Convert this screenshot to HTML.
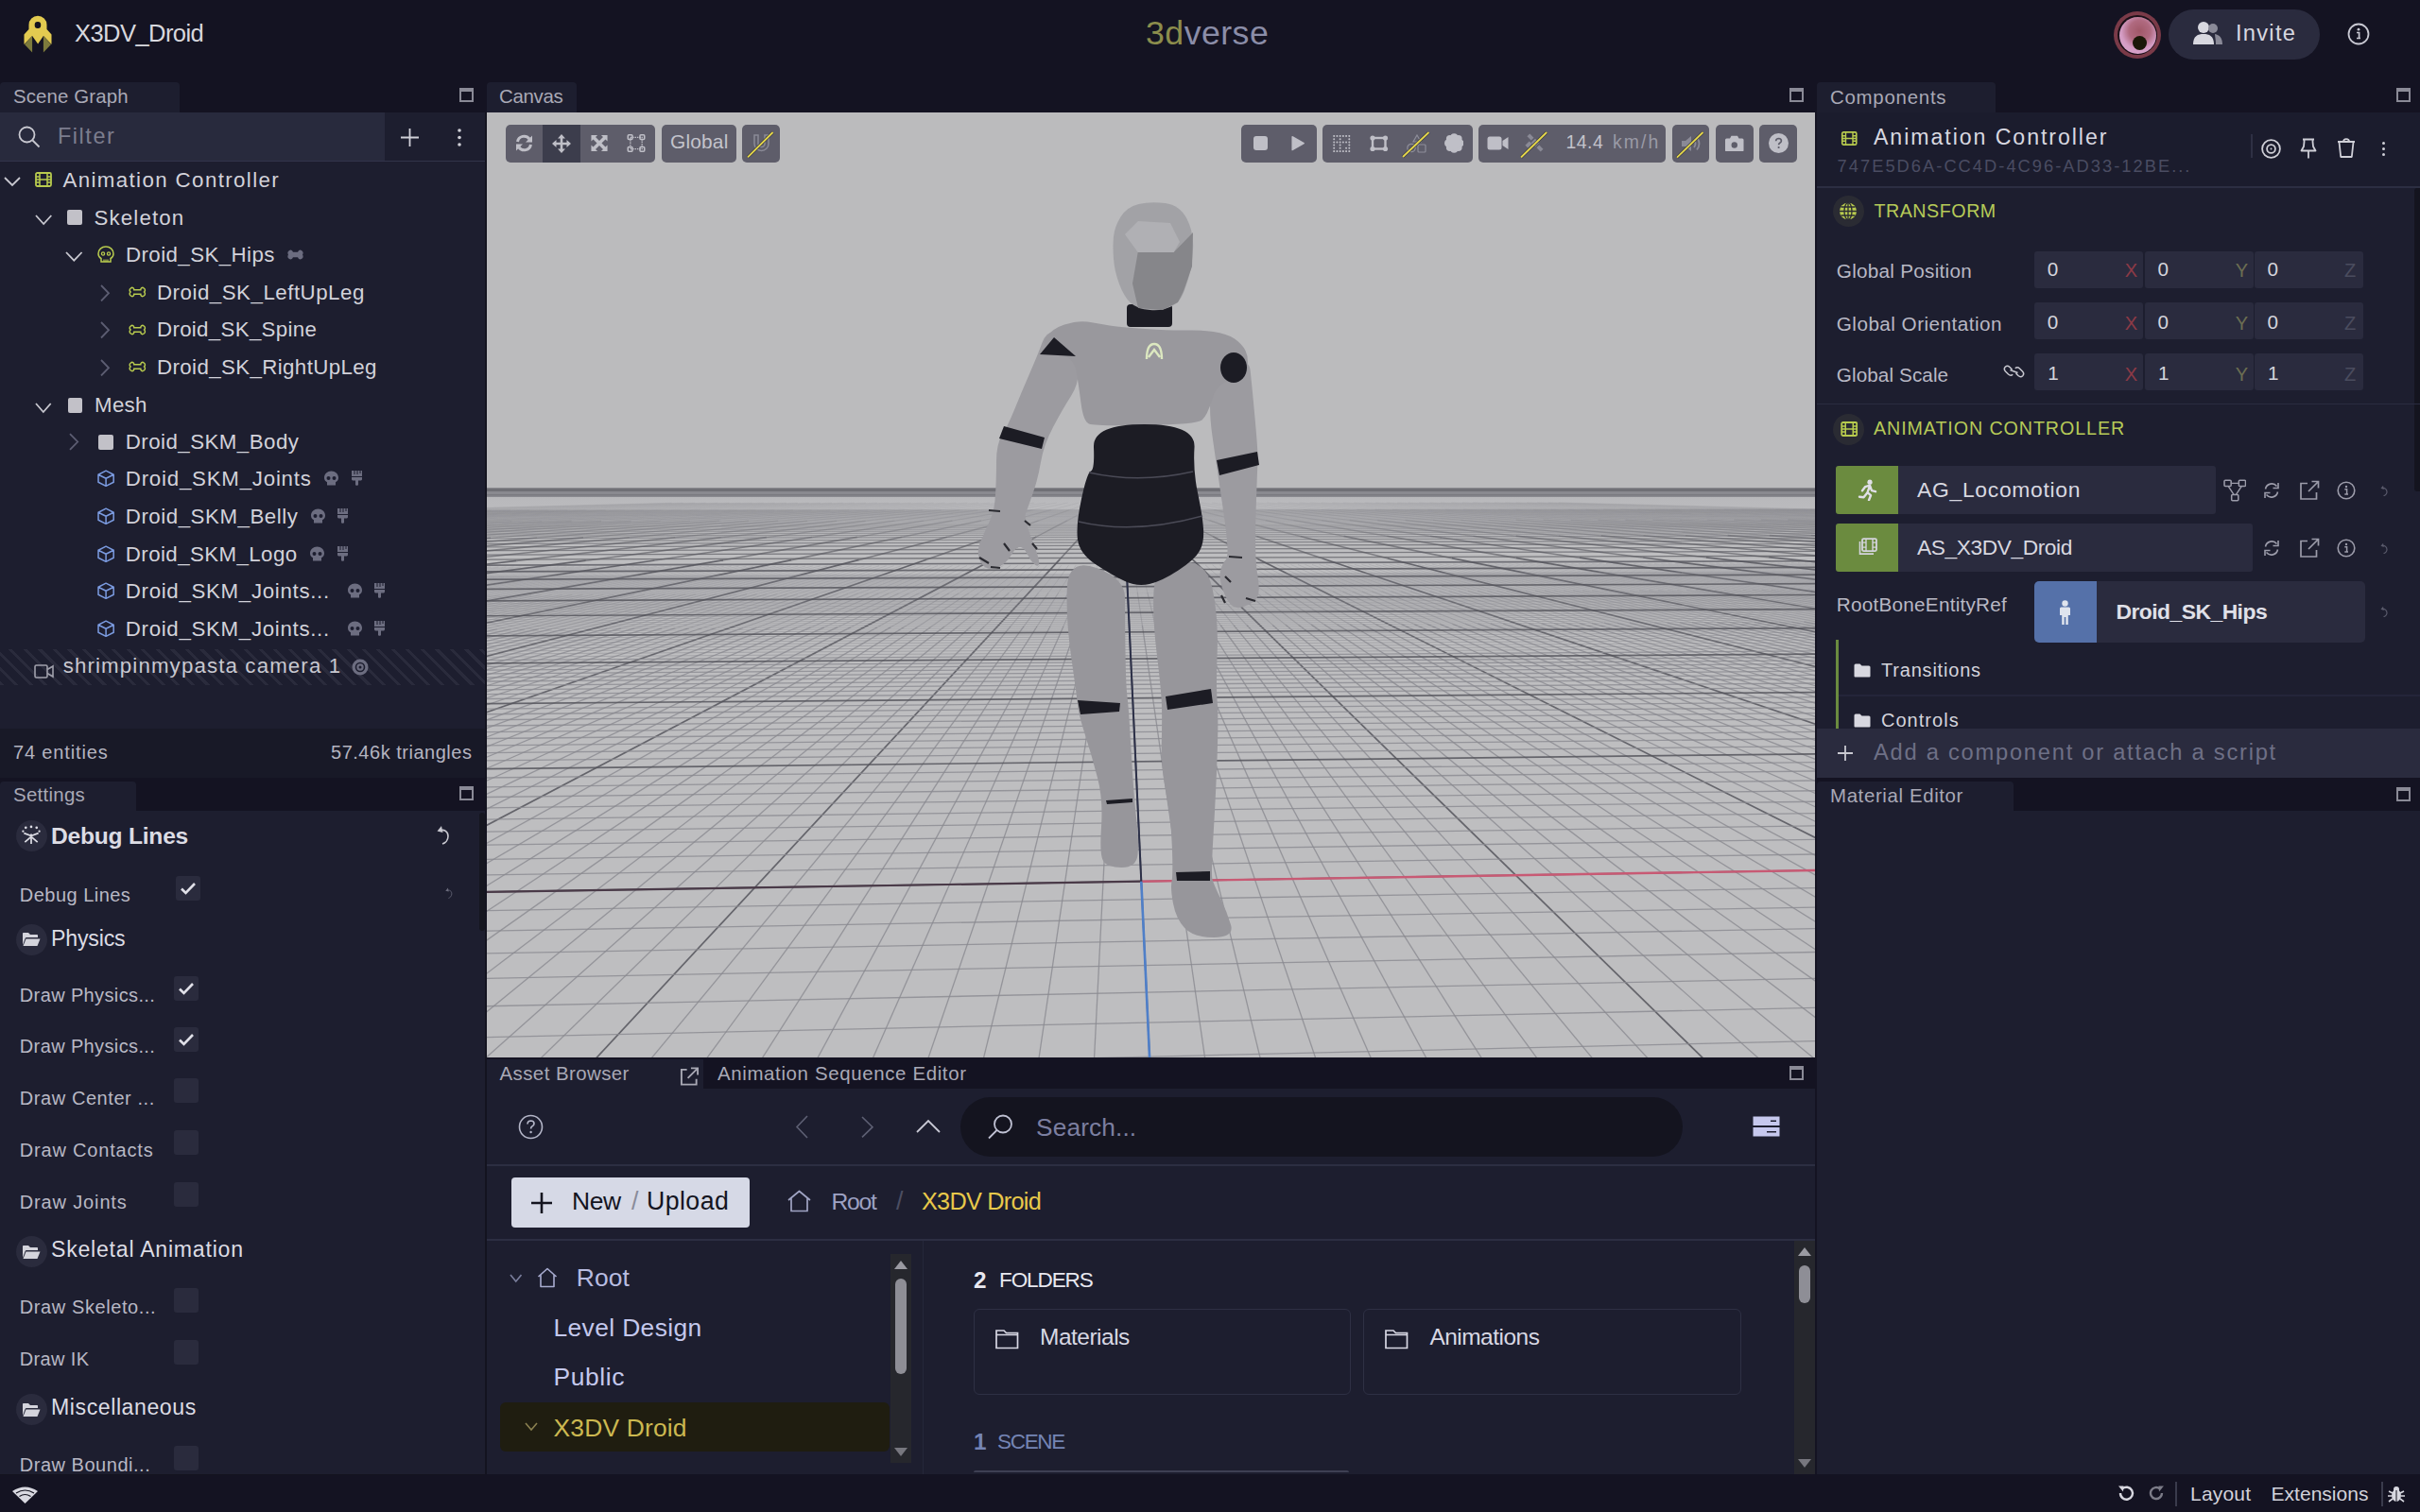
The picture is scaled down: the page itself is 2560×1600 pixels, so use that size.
<!DOCTYPE html><html><head><meta charset="utf-8"><style>
html,body{margin:0;padding:0;width:2560px;height:1600px;overflow:hidden;background:#141322}
body>div,body>svg{position:absolute}
.t{white-space:nowrap;line-height:1;font-family:"Liberation Sans",sans-serif}
</style></head><body>
<div style="left:0px;top:0px;width:2560px;height:1600px;background:#141322;"></div>
<div style="left:0px;top:119px;width:513px;height:652px;background:#1d1e2f;"></div>
<div style="left:0px;top:771px;width:513px;height:52px;background:#181927;"></div>
<div style="left:0px;top:858px;width:513px;height:702px;background:#1d1e2f;"></div>
<div style="left:0px;top:87px;width:190px;height:32px;background:#1d1e2f;border-radius:4px 4px 0 0"></div>
<div style="left:0px;top:827px;width:144px;height:31px;background:#1d1e2f;border-radius:4px 4px 0 0"></div>
<div style="left:515px;top:87px;width:95px;height:32px;background:#1d1e2f;border-radius:4px 4px 0 0"></div>
<div style="left:1922px;top:87px;width:189px;height:32px;background:#1d1e2f;border-radius:4px 4px 0 0"></div>
<div style="left:1922px;top:119px;width:638px;height:704px;background:#1d1e2f;"></div>
<div style="left:1922px;top:827px;width:208px;height:31px;background:#1d1e2f;border-radius:4px 4px 0 0"></div>
<div style="left:1922px;top:858px;width:638px;height:702px;background:#1d1e2f;"></div>
<div style="left:515px;top:1121px;width:229px;height:31px;background:#1d1e2f;"></div>
<div style="left:515px;top:1152px;width:1405px;height:408px;background:#1d1e2f;"></div>
<svg style="left:486px;top:93px;" width="15" height="15" viewBox="0 0 15 15"><rect x="1" y="1" width="13" height="13" fill="none" stroke="#8a8a96" stroke-width="2"/><rect x="1" y="1" width="13" height="3" fill="#8a8a96"/></svg>
<svg style="left:486px;top:832px;" width="15" height="15" viewBox="0 0 15 15"><rect x="1" y="1" width="13" height="13" fill="none" stroke="#8a8a96" stroke-width="2"/><rect x="1" y="1" width="13" height="3" fill="#8a8a96"/></svg>
<svg style="left:1893px;top:93px;" width="15" height="15" viewBox="0 0 15 15"><rect x="1" y="1" width="13" height="13" fill="none" stroke="#8a8a96" stroke-width="2"/><rect x="1" y="1" width="13" height="3" fill="#8a8a96"/></svg>
<svg style="left:2535px;top:93px;" width="15" height="15" viewBox="0 0 15 15"><rect x="1" y="1" width="13" height="13" fill="none" stroke="#8a8a96" stroke-width="2"/><rect x="1" y="1" width="13" height="3" fill="#8a8a96"/></svg>
<svg style="left:2535px;top:833px;" width="15" height="15" viewBox="0 0 15 15"><rect x="1" y="1" width="13" height="13" fill="none" stroke="#8a8a96" stroke-width="2"/><rect x="1" y="1" width="13" height="3" fill="#8a8a96"/></svg>
<svg style="left:1893px;top:1128px;" width="15" height="15" viewBox="0 0 15 15"><rect x="1" y="1" width="13" height="13" fill="none" stroke="#8a8a96" stroke-width="2"/><rect x="1" y="1" width="13" height="3" fill="#8a8a96"/></svg>
<div class="t" style="left:14.00px;top:91.64px;font-size:20.43px;letter-spacing:0.125px;color:#a9a9b6;">Scene Graph</div>
<div class="t" style="left:528.00px;top:91.64px;font-size:20.43px;letter-spacing:-0.300px;color:#a9a9b6;">Canvas</div>
<div class="t" style="left:1936.00px;top:92.64px;font-size:20.43px;letter-spacing:0.750px;color:#a9a9b6;">Components</div>
<div class="t" style="left:14.00px;top:830.64px;font-size:20.43px;letter-spacing:0.286px;color:#a9a9b6;">Settings</div>
<div class="t" style="left:1936.00px;top:831.64px;font-size:20.43px;letter-spacing:0.625px;color:#a9a9b6;">Material Editor</div>
<div class="t" style="left:528.50px;top:1126.04px;font-size:20.43px;letter-spacing:0.438px;color:#a9a9b6;">Asset Browser</div>
<div class="t" style="left:759.00px;top:1126.04px;font-size:20.43px;letter-spacing:0.646px;color:#a9a9b6;">Animation Sequence Editor</div>
<svg style="left:24px;top:15px;" width="32" height="42" viewBox="0 0 31 42"><path d="M6 16 V11.3 A9.5 9.5 0 0 1 25 11.3 V16 L30 21.5 V32 L21.5 23 L15.6 31.5 L9.6 23 L1 32 V21.5 Z" fill="#e3cb50"/><rect x="12.2" y="8" width="6.5" height="7" rx="3" fill="#13131f"/><path d="M1.5 32 L9.6 23 V40.5 Z M29.5 32 L21.4 23 V40.5 Z" fill="#7c7a3c"/></svg>
<div class="t" style="left:79.00px;top:23.28px;font-size:25.55px;letter-spacing:-0.583px;color:#d8d8de;">X3DV_Droid</div>
<div class="t" style="left:1212.00px;top:17.64px;font-size:35.71px;letter-spacing:0.458px;color:#8b8da8;"><span style="color:#8c8d4c">3d</span>verse</div>
<div style="left:2236px;top:12px;width:50px;height:50px;border-radius:50%;background:#7a3a48;"></div>
<div style="left:2240px;top:16px;width:42px;height:42px;border-radius:50%;background:#1a1018;"></div>
<div style="left:2241.5px;top:17.5px;width:39px;height:39px;border-radius:50%;background:radial-gradient(circle at 55% 38%,#a05868 0,#b06a80 35%,#d49cc4 60%,#dcaad0 100%);"></div>
<div style="left:2256px;top:38px;width:15px;height:15px;border-radius:50%;background:#1a1808;"></div>
<div style="left:2294px;top:10px;width:160px;height:53px;background:#2a2b3e;border-radius:27px"></div>
<svg style="left:2319px;top:22px;" width="33" height="26" viewBox="0 0 33 26"><circle cx="12" cy="7" r="6" fill="#d8d8e0"/><path d="M1 25 C1 16 6 14 12 14 C18 14 23 16 23 25 Z" fill="#d8d8e0"/><circle cx="22" cy="8" r="5" fill="#8a8a98"/><path d="M24 14 C29 15 32 18 32 25 L25 25 C25 20 24 16 24 14 Z" fill="#8a8a98"/></svg>
<div class="t" style="left:2365.00px;top:24.04px;font-size:23.71px;letter-spacing:1.250px;color:#d8d8e0;">Invite</div>
<svg style="left:2483px;top:24px;" width="24" height="24" viewBox="0 0 24 24"><circle cx="12" cy="12" r="10.5" fill="none" stroke="#c8c8d2" stroke-width="1.8"/><circle cx="12" cy="7.2" r="1.4" fill="#c8c8d2"/><path d="M10 10.5 H12.6 V16.5 H14 M10 16.5 H14" stroke="#c8c8d2" stroke-width="1.7" fill="none"/></svg>
<svg style="left:12px;top:1572px;" width="29" height="19" viewBox="0 0 29 19"><path d="M1 6 Q14.5 -3 28 6 L14.5 19 Z" fill="#d8d8e0"/><path d="M5 8 Q14.5 2 24 8 M8.5 11.5 Q14.5 7.5 20.5 11.5" stroke="#13131f" stroke-width="1.2" fill="none"/></svg>
<svg style="left:2239px;top:1571px;" width="20" height="18" viewBox="0 0 20 18"><path d="M4 9 A6.5 6.5 0 1 0 6 4.5" stroke="#d8d8e0" stroke-width="2.4" fill="none"/><path d="M2 1.5 L7.5 1.5 L7 7.5 Z" fill="#d8d8e0"/></svg>
<svg style="left:2273px;top:1571px;" width="18" height="18" viewBox="0 0 18 18"><path d="M14 9 A6 6 0 1 1 12 4.5" stroke="#7c7c88" stroke-width="2.4" fill="none"/><path d="M16 1.5 L10.5 1.5 L11 7.5 Z" fill="#7c7c88"/></svg>
<div style="left:2301px;top:1568px;width:2px;height:26px;background:#3a3b4c;"></div>
<div class="t" style="left:2317.00px;top:1569.65px;font-size:21.00px;letter-spacing:0.200px;color:#d2d2da;">Layout</div>
<div class="t" style="left:2402.50px;top:1569.65px;font-size:21.00px;letter-spacing:0.028px;color:#d2d2da;">Extensions</div>
<div style="left:2519px;top:1568px;width:2px;height:26px;background:#3a3b4c;"></div>
<svg style="left:2526px;top:1572px;" width="18" height="18" viewBox="0 0 18 18"><ellipse cx="9" cy="10.5" rx="5" ry="6.5" fill="#d8d8e0"/><circle cx="9" cy="4" r="3" fill="#d8d8e0"/><path d="M1 6 L5 8 M17 6 L13 8 M0 11 H4 M18 11 H14 M1 17 L5 14 M17 17 L13 14" stroke="#d8d8e0" stroke-width="1.6"/><path d="M9 5 V17" stroke="#13131f" stroke-width="1"/></svg>
<div style="left:0px;top:119px;width:407px;height:52px;background:#282a3d;"></div>
<div style="left:0px;top:170px;width:513px;height:1px;background:#32344a;"></div>
<svg style="left:19px;top:133px;" width="24" height="24" viewBox="0 0 24 24"><circle cx="9.5" cy="9.5" r="8" fill="none" stroke="#c8c8d0" stroke-width="1.8"/><path d="M15.5 15.5 L22.5 22.5" stroke="#c8c8d0" stroke-width="1.8"/></svg>
<div class="t" style="left:61.00px;top:133.49px;font-size:23.43px;letter-spacing:1.550px;color:#7c7d8e;">Filter</div>
<svg style="left:423px;top:135px;" width="21" height="21" viewBox="0 0 21 21"><path d="M10.5 1 V20 M1 10.5 H20" stroke="#d0d0d8" stroke-width="1.8"/></svg>
<svg style="left:483px;top:135px;" width="6" height="21" viewBox="0 0 6 21"><circle cx="3" cy="3" r="1.8" fill="#d0d0d8"/><circle cx="3" cy="10.5" r="1.8" fill="#d0d0d8"/><circle cx="3" cy="18" r="1.8" fill="#d0d0d8"/></svg>
<svg style="left:4px;top:186px;" width="18" height="12" viewBox="0 0 18 12"><path d="M1 2 L9.0 10 L17 2" stroke="#c8c8d0" stroke-width="1.8" fill="none"/></svg>
<svg style="left:37px;top:182px;" width="18" height="16" viewBox="0 0 18 16"><rect x="1" y="1" width="16" height="14" rx="1.5" fill="none" stroke="#b8cb4e" stroke-width="1.8"/><path d="M5 1 V15 M13 1 V15 M1 5 H5 M1 8 H5 M1 11 H5 M13 5 H17 M13 8 H17 M13 11 H17 M5 8 H13" stroke="#b8cb4e" stroke-width="1.5" fill="none"/></svg>
<div class="t" style="left:66.40px;top:180.06px;font-size:22.29px;letter-spacing:1.395px;color:#d2d2da;">Animation Controller</div>
<svg style="left:36.5px;top:226px;" width="18.299999999999997" height="13" viewBox="0 0 18.299999999999997 13"><path d="M1 2 L9.149999999999999 11 L17.299999999999997 2" stroke="#c8c8d0" stroke-width="1.8" fill="none"/></svg>
<div style="left:71.4px;top:222.3px;width:15.599999999999994px;height:15.5px;background:#c2c1c8;border-radius:2px"></div>
<div class="t" style="left:99.50px;top:219.66px;font-size:22.29px;letter-spacing:1.143px;color:#d2d2da;">Skeleton</div>
<svg style="left:69.4px;top:265px;" width="18.599999999999994" height="12.699999999999989" viewBox="0 0 18.599999999999994 12.699999999999989"><path d="M1 2 L9.299999999999997 10.699999999999989 L17.599999999999994 2" stroke="#c8c8d0" stroke-width="1.8" fill="none"/></svg>
<svg style="left:103px;top:260px;" width="18" height="18" viewBox="0 0 18 18"><path d="M9 1 C4.5 1 1 4.2 1 8.5 C1 11 2.3 12.6 4 13.5 V17 H14 V13.5 C15.7 12.6 17 11 17 8.5 C17 4.2 13.5 1 9 1 Z" fill="none" stroke="#b8cb4e" stroke-width="1.5"/><circle cx="6" cy="8.5" r="1.6" fill="none" stroke="#b8cb4e" stroke-width="1.3"/><circle cx="12" cy="8.5" r="1.6" fill="none" stroke="#b8cb4e" stroke-width="1.3"/><path d="M7 14.5 V17 M9 14.5 V17 M11 14.5 V17" stroke="#b8cb4e" stroke-width="1.2"/></svg>
<div class="t" style="left:133.00px;top:259.06px;font-size:22.29px;letter-spacing:0.417px;color:#d2d2da;">Droid_SK_Hips</div>
<svg style="left:303px;top:264px;" width="19" height="11" viewBox="1 0 20 12"><path d="M4 2 C6 0.5 7.5 2 7.5 3.8 H14.5 C14.5 2 16 0.5 18 2 C19.8 3.2 19.2 5.2 18.2 6 C19.2 6.8 19.8 8.8 18 10 C16 11.5 14.5 10 14.5 8.2 H7.5 C7.5 10 6 11.5 4 10 C2.2 8.8 2.8 6.8 3.8 6 C2.8 5.2 2.2 3.2 4 2 Z" fill="#6c6d80" stroke="#6c6d80" stroke-width="1.5"/></svg>
<svg style="left:105px;top:300.5px;" width="12" height="18.5" viewBox="0 0 12 18.5"><path d="M2 1 L10 9.25 L2 17.5" stroke="#5c5d72" stroke-width="1.8" fill="none"/></svg>
<svg style="left:135px;top:303.0px;" width="20.599999999999994" height="12.0" viewBox="1 0 20 12"><path d="M4 2 C6 0.5 7.5 2 7.5 3.8 H14.5 C14.5 2 16 0.5 18 2 C19.8 3.2 19.2 5.2 18.2 6 C19.2 6.8 19.8 8.8 18 10 C16 11.5 14.5 10 14.5 8.2 H7.5 C7.5 10 6 11.5 4 10 C2.2 8.8 2.8 6.8 3.8 6 C2.8 5.2 2.2 3.2 4 2 Z" fill="none" stroke="#b8cb4e" stroke-width="1.5"/></svg>
<div class="t" style="left:166.00px;top:298.56px;font-size:22.29px;letter-spacing:0.515px;color:#d2d2da;">Droid_SK_LeftUpLeg</div>
<svg style="left:105px;top:340.1px;" width="12" height="18.5" viewBox="0 0 12 18.5"><path d="M2 1 L10 9.25 L2 17.5" stroke="#5c5d72" stroke-width="1.8" fill="none"/></svg>
<svg style="left:135px;top:342.6px;" width="20.599999999999994" height="12.0" viewBox="1 0 20 12"><path d="M4 2 C6 0.5 7.5 2 7.5 3.8 H14.5 C14.5 2 16 0.5 18 2 C19.8 3.2 19.2 5.2 18.2 6 C19.2 6.8 19.8 8.8 18 10 C16 11.5 14.5 10 14.5 8.2 H7.5 C7.5 10 6 11.5 4 10 C2.2 8.8 2.8 6.8 3.8 6 C2.8 5.2 2.2 3.2 4 2 Z" fill="none" stroke="#b8cb4e" stroke-width="1.5"/></svg>
<div class="t" style="left:166.00px;top:338.16px;font-size:22.29px;letter-spacing:0.315px;color:#d2d2da;">Droid_SK_Spine</div>
<svg style="left:105px;top:379.7px;" width="12" height="18.5" viewBox="0 0 12 18.5"><path d="M2 1 L10 9.25 L2 17.5" stroke="#5c5d72" stroke-width="1.8" fill="none"/></svg>
<svg style="left:135px;top:382.2px;" width="20.599999999999994" height="12.0" viewBox="1 0 20 12"><path d="M4 2 C6 0.5 7.5 2 7.5 3.8 H14.5 C14.5 2 16 0.5 18 2 C19.8 3.2 19.2 5.2 18.2 6 C19.2 6.8 19.8 8.8 18 10 C16 11.5 14.5 10 14.5 8.2 H7.5 C7.5 10 6 11.5 4 10 C2.2 8.8 2.8 6.8 3.8 6 C2.8 5.2 2.2 3.2 4 2 Z" fill="none" stroke="#b8cb4e" stroke-width="1.5"/></svg>
<div class="t" style="left:166.00px;top:377.76px;font-size:22.29px;letter-spacing:0.389px;color:#d2d2da;">Droid_SK_RightUpLeg</div>
<svg style="left:37px;top:425px;" width="17.700000000000003" height="13" viewBox="0 0 17.700000000000003 13"><path d="M1 2 L8.850000000000001 11 L16.700000000000003 2" stroke="#c8c8d0" stroke-width="1.8" fill="none"/></svg>
<div style="left:71.7px;top:421px;width:15.299999999999997px;height:15.5px;background:#c2c1c8;border-radius:2px"></div>
<div class="t" style="left:100.00px;top:417.76px;font-size:22.29px;letter-spacing:0.333px;color:#d2d2da;">Mesh</div>
<svg style="left:71.8px;top:458px;" width="12.200000000000003" height="19" viewBox="0 0 12.200000000000003 19"><path d="M2 1 L10.200000000000003 9.5 L2 18" stroke="#5c5d72" stroke-width="1.8" fill="none"/></svg>
<div style="left:104px;top:460px;width:16px;height:15.5px;background:#c2c1c8;border-radius:2px"></div>
<div class="t" style="left:132.80px;top:456.56px;font-size:22.29px;letter-spacing:0.462px;color:#d2d2da;">Droid_SKM_Body</div>
<svg style="left:102.8px;top:497.29999999999995px;" width="18.200000000000003" height="18.5" viewBox="0 0 18 18"><path d="M9 1 L17 5 V13 L9 17 L1 13 V5 Z M1 5 L9 9 L17 5 M9 9 V17" fill="none" stroke="#7b9be0" stroke-width="1.5" stroke-linejoin="round"/></svg>
<div class="t" style="left:132.80px;top:496.36px;font-size:22.29px;letter-spacing:0.770px;color:#d2d2da;">Droid_SKM_Joints</div>
<svg style="left:342px;top:498.29999999999995px;" width="17" height="16.0" viewBox="0 0 16 16"><path d="M8 0.5 C3.8 0.5 0.5 3.5 0.5 7.5 C0.5 10 1.8 11.5 3.5 12.3 V15.5 H12.5 V12.3 C14.2 11.5 15.5 10 15.5 7.5 C15.5 3.5 12.2 0.5 8 0.5 Z" fill="#6c6d80"/><circle cx="5" cy="8" r="2" fill="#1d1e2f"/><circle cx="11" cy="8" r="2" fill="#1d1e2f"/></svg>
<svg style="left:371px;top:498.29999999999995px;" width="13" height="16.0" viewBox="0 0 13 16"><path d="M1 0 H12 V9 C12 10 11 10.5 10 10.5 H8 V15 C8 16 5 16 5 15 V10.5 H3 C2 10.5 1 10 1 9 Z" fill="#6c6d80"/><path d="M4 0 V4 M7 0 V4 M10 0 V3" stroke="#1d1e2f" stroke-width="1"/><path d="M1 6.5 H12" stroke="#1d1e2f" stroke-width="1"/></svg>
<svg style="left:102.8px;top:536.9px;" width="18.200000000000003" height="18.5" viewBox="0 0 18 18"><path d="M9 1 L17 5 V13 L9 17 L1 13 V5 Z M1 5 L9 9 L17 5 M9 9 V17" fill="none" stroke="#7b9be0" stroke-width="1.5" stroke-linejoin="round"/></svg>
<div class="t" style="left:132.80px;top:535.96px;font-size:22.29px;letter-spacing:0.529px;color:#d2d2da;">Droid_SKM_Belly</div>
<svg style="left:328px;top:537.9px;" width="17" height="16.0" viewBox="0 0 16 16"><path d="M8 0.5 C3.8 0.5 0.5 3.5 0.5 7.5 C0.5 10 1.8 11.5 3.5 12.3 V15.5 H12.5 V12.3 C14.2 11.5 15.5 10 15.5 7.5 C15.5 3.5 12.2 0.5 8 0.5 Z" fill="#6c6d80"/><circle cx="5" cy="8" r="2" fill="#1d1e2f"/><circle cx="11" cy="8" r="2" fill="#1d1e2f"/></svg>
<svg style="left:356px;top:537.9px;" width="13" height="16.0" viewBox="0 0 13 16"><path d="M1 0 H12 V9 C12 10 11 10.5 10 10.5 H8 V15 C8 16 5 16 5 15 V10.5 H3 C2 10.5 1 10 1 9 Z" fill="#6c6d80"/><path d="M4 0 V4 M7 0 V4 M10 0 V3" stroke="#1d1e2f" stroke-width="1"/><path d="M1 6.5 H12" stroke="#1d1e2f" stroke-width="1"/></svg>
<svg style="left:102.8px;top:576.5px;" width="18.200000000000003" height="18.5" viewBox="0 0 18 18"><path d="M9 1 L17 5 V13 L9 17 L1 13 V5 Z M1 5 L9 9 L17 5 M9 9 V17" fill="none" stroke="#7b9be0" stroke-width="1.5" stroke-linejoin="round"/></svg>
<div class="t" style="left:132.80px;top:575.56px;font-size:22.29px;letter-spacing:0.419px;color:#d2d2da;">Droid_SKM_Logo</div>
<svg style="left:327px;top:577.5px;" width="17" height="16.0" viewBox="0 0 16 16"><path d="M8 0.5 C3.8 0.5 0.5 3.5 0.5 7.5 C0.5 10 1.8 11.5 3.5 12.3 V15.5 H12.5 V12.3 C14.2 11.5 15.5 10 15.5 7.5 C15.5 3.5 12.2 0.5 8 0.5 Z" fill="#6c6d80"/><circle cx="5" cy="8" r="2" fill="#1d1e2f"/><circle cx="11" cy="8" r="2" fill="#1d1e2f"/></svg>
<svg style="left:356px;top:577.5px;" width="13" height="16.0" viewBox="0 0 13 16"><path d="M1 0 H12 V9 C12 10 11 10.5 10 10.5 H8 V15 C8 16 5 16 5 15 V10.5 H3 C2 10.5 1 10 1 9 Z" fill="#6c6d80"/><path d="M4 0 V4 M7 0 V4 M10 0 V3" stroke="#1d1e2f" stroke-width="1"/><path d="M1 6.5 H12" stroke="#1d1e2f" stroke-width="1"/></svg>
<svg style="left:102.8px;top:616.0999999999999px;" width="18.200000000000003" height="18.5" viewBox="0 0 18 18"><path d="M9 1 L17 5 V13 L9 17 L1 13 V5 Z M1 5 L9 9 L17 5 M9 9 V17" fill="none" stroke="#7b9be0" stroke-width="1.5" stroke-linejoin="round"/></svg>
<div class="t" style="left:132.80px;top:615.16px;font-size:22.29px;letter-spacing:0.681px;color:#d2d2da;">Droid_SKM_Joints...</div>
<svg style="left:366.7px;top:617.0999999999999px;" width="17.0" height="16.0" viewBox="0 0 16 16"><path d="M8 0.5 C3.8 0.5 0.5 3.5 0.5 7.5 C0.5 10 1.8 11.5 3.5 12.3 V15.5 H12.5 V12.3 C14.2 11.5 15.5 10 15.5 7.5 C15.5 3.5 12.2 0.5 8 0.5 Z" fill="#6c6d80"/><circle cx="5" cy="8" r="2" fill="#1d1e2f"/><circle cx="11" cy="8" r="2" fill="#1d1e2f"/></svg>
<svg style="left:395px;top:617.0999999999999px;" width="13" height="16.0" viewBox="0 0 13 16"><path d="M1 0 H12 V9 C12 10 11 10.5 10 10.5 H8 V15 C8 16 5 16 5 15 V10.5 H3 C2 10.5 1 10 1 9 Z" fill="#6c6d80"/><path d="M4 0 V4 M7 0 V4 M10 0 V3" stroke="#1d1e2f" stroke-width="1"/><path d="M1 6.5 H12" stroke="#1d1e2f" stroke-width="1"/></svg>
<svg style="left:102.8px;top:655.6999999999999px;" width="18.200000000000003" height="18.5" viewBox="0 0 18 18"><path d="M9 1 L17 5 V13 L9 17 L1 13 V5 Z M1 5 L9 9 L17 5 M9 9 V17" fill="none" stroke="#7b9be0" stroke-width="1.5" stroke-linejoin="round"/></svg>
<div class="t" style="left:132.80px;top:654.76px;font-size:22.29px;letter-spacing:0.681px;color:#d2d2da;">Droid_SKM_Joints...</div>
<svg style="left:366.7px;top:656.6999999999999px;" width="17.0" height="16.0" viewBox="0 0 16 16"><path d="M8 0.5 C3.8 0.5 0.5 3.5 0.5 7.5 C0.5 10 1.8 11.5 3.5 12.3 V15.5 H12.5 V12.3 C14.2 11.5 15.5 10 15.5 7.5 C15.5 3.5 12.2 0.5 8 0.5 Z" fill="#6c6d80"/><circle cx="5" cy="8" r="2" fill="#1d1e2f"/><circle cx="11" cy="8" r="2" fill="#1d1e2f"/></svg>
<svg style="left:395px;top:656.6999999999999px;" width="13" height="16.0" viewBox="0 0 13 16"><path d="M1 0 H12 V9 C12 10 11 10.5 10 10.5 H8 V15 C8 16 5 16 5 15 V10.5 H3 C2 10.5 1 10 1 9 Z" fill="#6c6d80"/><path d="M4 0 V4 M7 0 V4 M10 0 V3" stroke="#1d1e2f" stroke-width="1"/><path d="M1 6.5 H12" stroke="#1d1e2f" stroke-width="1"/></svg>
<div style="left:0px;top:687px;width:513px;height:38px;background:repeating-linear-gradient(45deg,#2a2b3c 0 3px,#1d1e2f 3px 11px);"></div>
<svg style="left:36px;top:703px;" width="21" height="15" viewBox="0 0 21 15"><rect x="1" y="1" width="13" height="13" rx="1.5" fill="none" stroke="#a0a0ac" stroke-width="1.6"/><path d="M14 5.5 L20 2 V13 L14 9.5" fill="none" stroke="#a0a0ac" stroke-width="1.6"/></svg>
<div class="t" style="left:66.70px;top:694.06px;font-size:22.29px;letter-spacing:1.130px;color:#c8c8d0;">shrimpinmypasta camera 1</div>
<svg style="left:372px;top:697px;" width="18" height="18" viewBox="0 0 18 18"><circle cx="9" cy="9" r="8.5" fill="#6c6d80"/><circle cx="9" cy="9" r="4.5" fill="none" stroke="#1d1e2f" stroke-width="1.6"/><circle cx="9" cy="9" r="1.5" fill="#1d1e2f"/></svg>
<div class="t" style="left:13.90px;top:785.80px;font-size:20.00px;letter-spacing:0.875px;color:#b4b4c0;">74 entities</div>
<div class="t" style="left:350.00px;top:785.80px;font-size:20.00px;letter-spacing:0.517px;color:#b4b4c0;">57.46k triangles</div>
<div style="left:513px;top:119px;width:2px;height:1441px;background:#13131f;"></div>
<div style="left:16.5px;top:867.5px;width:33px;height:33px;border-radius:50%;background:#2a2b3d;"></div>
<svg style="left:22px;top:873px;" width="22" height="21" viewBox="0 0 22 22"><path d="M11 10 V21 M11 13 L4 19 M11 13 L18 19 M11 12 L3 9 M11 12 L19 9" stroke="#dcdce4" stroke-width="1.8" fill="none"/><circle cx="5" cy="3" r="1.4" fill="#dcdce4"/><circle cx="11" cy="2" r="1.4" fill="#dcdce4"/><circle cx="17" cy="3" r="1.4" fill="#dcdce4"/><circle cx="2" cy="7" r="1.2" fill="#dcdce4"/><circle cx="20" cy="7" r="1.2" fill="#dcdce4"/></svg>
<div class="t" style="left:54.00px;top:872.67px;font-size:24.62px;letter-spacing:-0.240px;color:#dcdce4;font-weight:700;">Debug Lines</div>
<svg style="left:462px;top:873px;" width="14" height="21" viewBox="0 0 14 21"><path d="M3 6 C8 4 12 7 12 12 C12 16 9 19 6 20" stroke="#c8c8d0" stroke-width="1.6" fill="none"/><path d="M0.5 6.5 L5 1 L6.5 8 Z" fill="#c8c8d0"/></svg>
<div class="t" style="left:20.80px;top:937.00px;font-size:20.00px;letter-spacing:0.475px;color:#b8b8c4;">Debug Lines</div>
<div style="left:186px;top:927px;width:26px;height:26px;background:#2a2b3d;border-radius:3px"></div>
<svg style="left:186px;top:927px;" width="26" height="26" viewBox="0 0 26 26"><path d="M6 13.5 L10.5 18 L20 8" stroke="#e0e0e8" stroke-width="2.6" fill="none"/></svg>
<svg style="left:471px;top:939px;" width="8" height="12" viewBox="0 0 14 21"><path d="M3 6 C8 4 12 7 12 12 C12 16 9 19 6 20" stroke="#6a6b7c" stroke-width="1.4" fill="none"/><path d="M0.5 6.5 L5 1 L6.5 8 Z" fill="#6a6b7c"/></svg>
<div style="left:16.5px;top:977.5px;width:33px;height:33px;border-radius:50%;background:#2a2b3d;"></div>
<svg style="left:23px;top:986.0px;" width="20" height="16.0" viewBox="0 0 20 16"><path d="M1 2 C1 1.3 1.5 1 2 1 H7 L9 3 H16 C16.6 3 17 3.4 17 4 V6 H5 C4.3 6 3.8 6.3 3.6 6.9 L1 14 Z" fill="#d4d4dc"/><path d="M4.5 7.5 H19.5 L16.5 15 H1.5 Z" fill="#d4d4dc"/></svg>
<div class="t" style="left:54.00px;top:982.33px;font-size:23.14px;letter-spacing:-0.167px;color:#dcdce4;">Physics</div>
<div class="t" style="left:20.80px;top:1043.00px;font-size:20.00px;letter-spacing:0.375px;color:#b8b8c4;">Draw Physics...</div>
<div style="left:183.5px;top:1033px;width:26.0px;height:26px;background:#2a2b3d;border-radius:3px"></div>
<svg style="left:183.5px;top:1033px;" width="26.0" height="26" viewBox="0 0 26.0 26"><path d="M6 13.5 L10.5 18 L20 8" stroke="#e0e0e8" stroke-width="2.6" fill="none"/></svg>
<div class="t" style="left:20.80px;top:1097.40px;font-size:20.00px;letter-spacing:0.375px;color:#b8b8c4;">Draw Physics...</div>
<div style="left:183.5px;top:1087px;width:26.0px;height:26px;background:#2a2b3d;border-radius:3px"></div>
<svg style="left:183.5px;top:1087px;" width="26.0" height="26" viewBox="0 0 26.0 26"><path d="M6 13.5 L10.5 18 L20 8" stroke="#e0e0e8" stroke-width="2.6" fill="none"/></svg>
<div class="t" style="left:20.80px;top:1152.00px;font-size:20.00px;letter-spacing:0.571px;color:#b8b8c4;">Draw Center ...</div>
<div style="left:183.5px;top:1141px;width:26.0px;height:26px;background:#2a2b3d;border-radius:3px"></div>
<div class="t" style="left:20.80px;top:1206.80px;font-size:20.00px;letter-spacing:0.812px;color:#b8b8c4;">Draw Contacts</div>
<div style="left:183.5px;top:1196px;width:26.0px;height:26px;background:#2a2b3d;border-radius:3px"></div>
<div class="t" style="left:20.80px;top:1261.60px;font-size:20.00px;letter-spacing:0.850px;color:#b8b8c4;">Draw Joints</div>
<div style="left:183.5px;top:1250.5px;width:26.0px;height:26.0px;background:#2a2b3d;border-radius:3px"></div>
<div style="left:16.5px;top:1308px;width:33px;height:33px;border-radius:50%;background:#2a2b3d;"></div>
<svg style="left:23px;top:1316.5px;" width="20" height="16.0" viewBox="0 0 20 16"><path d="M1 2 C1 1.3 1.5 1 2 1 H7 L9 3 H16 C16.6 3 17 3.4 17 4 V6 H5 C4.3 6 3.8 6.3 3.6 6.9 L1 14 Z" fill="#d4d4dc"/><path d="M4.5 7.5 H19.5 L16.5 15 H1.5 Z" fill="#d4d4dc"/></svg>
<div class="t" style="left:54.00px;top:1311.33px;font-size:23.14px;letter-spacing:0.750px;color:#dcdce4;">Skeletal Animation</div>
<div class="t" style="left:20.80px;top:1373.00px;font-size:20.00px;letter-spacing:0.589px;color:#b8b8c4;">Draw Skeleto...</div>
<div style="left:183.5px;top:1363px;width:26.0px;height:26px;background:#2a2b3d;border-radius:3px"></div>
<div class="t" style="left:20.80px;top:1428.00px;font-size:20.00px;letter-spacing:0.358px;color:#b8b8c4;">Draw IK</div>
<div style="left:183.5px;top:1417.5px;width:26.0px;height:26.0px;background:#2a2b3d;border-radius:3px"></div>
<div style="left:16.5px;top:1475px;width:33px;height:33px;border-radius:50%;background:#2a2b3d;"></div>
<svg style="left:23px;top:1483.5px;" width="20" height="16.0" viewBox="0 0 20 16"><path d="M1 2 C1 1.3 1.5 1 2 1 H7 L9 3 H16 C16.6 3 17 3.4 17 4 V6 H5 C4.3 6 3.8 6.3 3.6 6.9 L1 14 Z" fill="#d4d4dc"/><path d="M4.5 7.5 H19.5 L16.5 15 H1.5 Z" fill="#d4d4dc"/></svg>
<div class="t" style="left:54.00px;top:1478.33px;font-size:23.14px;letter-spacing:0.562px;color:#dcdce4;">Miscellaneous</div>
<div class="t" style="left:20.80px;top:1540.00px;font-size:20.00px;letter-spacing:0.519px;color:#b8b8c4;">Draw Boundi...</div>
<div style="left:183.5px;top:1530px;width:26.0px;height:26px;background:#2a2b3d;border-radius:3px"></div>
<div style="left:0px;top:1560px;width:513px;height:1px;background:#13131f;"></div>
<div style="left:507px;top:860px;width:6px;height:125px;background:#15161f;border-radius:3px"></div>
<svg style="left:515px;top:119px" width="1405" height="1000" viewBox="0 0 1405 1000"><rect x="0" y="0" width="1405" height="1000" fill="#bebec0"/><rect x="0" y="0" width="1405" height="401.0" fill="#bbbbbd"/><line x1="-116.8" y1="421.3" x2="195.6" y2="413.2" stroke="#55555c" stroke-width="1.0" stroke-opacity="0.16092943201376936"/><line x1="-96.5" y1="421.2" x2="207.8" y2="413.2" stroke="#55555c" stroke-width="1.0" stroke-opacity="0.16092943201376936"/><line x1="-76.1" y1="421.2" x2="219.9" y2="413.2" stroke="#55555c" stroke-width="1.0" stroke-opacity="0.16092943201376936"/><line x1="-55.8" y1="421.2" x2="232.1" y2="413.2" stroke="#55555c" stroke-width="1.0" stroke-opacity="0.16092943201376936"/><line x1="-35.6" y1="421.2" x2="244.2" y2="413.2" stroke="#55555c" stroke-width="1.0" stroke-opacity="0.16092943201376936"/><line x1="-15.3" y1="421.2" x2="256.3" y2="413.2" stroke="#55555c" stroke-width="1.0" stroke-opacity="0.16092943201376936"/><line x1="-391.5" y1="433.1" x2="4.9" y2="421.2" stroke="#55555c" stroke-width="1.2" stroke-opacity="0.25900277008310246"/><line x1="4.9" y1="421.2" x2="268.4" y2="413.2" stroke="#55555c" stroke-width="1.0" stroke-opacity="0.16092943201376936"/><line x1="-358.9" y1="433.1" x2="25.1" y2="421.1" stroke="#55555c" stroke-width="1.2" stroke-opacity="0.25900277008310246"/><line x1="25.1" y1="421.1" x2="280.5" y2="413.2" stroke="#55555c" stroke-width="1.0" stroke-opacity="0.16092943201376936"/><line x1="-326.3" y1="433.0" x2="45.2" y2="421.1" stroke="#55555c" stroke-width="1.2" stroke-opacity="0.25900277008310246"/><line x1="45.2" y1="421.1" x2="292.6" y2="413.2" stroke="#55555c" stroke-width="1.0" stroke-opacity="0.16092943201376936"/><line x1="-293.9" y1="433.0" x2="65.3" y2="421.1" stroke="#55555c" stroke-width="1.2" stroke-opacity="0.25900277008310246"/><line x1="65.3" y1="421.1" x2="304.7" y2="413.2" stroke="#55555c" stroke-width="1.0" stroke-opacity="0.16092943201376936"/><line x1="-261.5" y1="433.0" x2="85.4" y2="421.1" stroke="#55555c" stroke-width="1.2" stroke-opacity="0.25900277008310246"/><line x1="85.4" y1="421.1" x2="316.8" y2="413.2" stroke="#55555c" stroke-width="1.0" stroke-opacity="0.16092943201376936"/><line x1="-229.2" y1="432.9" x2="105.5" y2="421.1" stroke="#55555c" stroke-width="1.2" stroke-opacity="0.25900277008310246"/><line x1="105.5" y1="421.1" x2="328.8" y2="413.2" stroke="#55555c" stroke-width="1.0" stroke-opacity="0.16092943201376936"/><line x1="-196.9" y1="432.9" x2="125.5" y2="421.1" stroke="#55555c" stroke-width="1.2" stroke-opacity="0.25900277008310246"/><line x1="125.5" y1="421.1" x2="340.9" y2="413.2" stroke="#55555c" stroke-width="1.0" stroke-opacity="0.16092943201376936"/><line x1="-164.8" y1="432.8" x2="145.5" y2="421.0" stroke="#55555c" stroke-width="1.2" stroke-opacity="0.25900277008310246"/><line x1="145.5" y1="421.0" x2="352.9" y2="413.2" stroke="#55555c" stroke-width="1.0" stroke-opacity="0.16092943201376936"/><line x1="-132.7" y1="432.8" x2="165.4" y2="421.0" stroke="#55555c" stroke-width="1.2" stroke-opacity="0.25900277008310246"/><line x1="165.4" y1="421.0" x2="364.9" y2="413.2" stroke="#55555c" stroke-width="1.0" stroke-opacity="0.16092943201376936"/><line x1="-100.7" y1="432.8" x2="185.4" y2="421.0" stroke="#55555c" stroke-width="1.2" stroke-opacity="0.25900277008310246"/><line x1="185.4" y1="421.0" x2="376.9" y2="413.2" stroke="#55555c" stroke-width="1.0" stroke-opacity="0.16092943201376936"/><line x1="-68.8" y1="432.7" x2="205.3" y2="421.0" stroke="#55555c" stroke-width="1.2" stroke-opacity="0.25900277008310246"/><line x1="205.3" y1="421.0" x2="388.9" y2="413.1" stroke="#55555c" stroke-width="1.0" stroke-opacity="0.16092943201376936"/><line x1="-37.0" y1="432.7" x2="225.1" y2="421.0" stroke="#55555c" stroke-width="1.2" stroke-opacity="0.25900277008310246"/><line x1="225.1" y1="421.0" x2="400.9" y2="413.1" stroke="#55555c" stroke-width="1.0" stroke-opacity="0.16092943201376936"/><line x1="-5.2" y1="432.6" x2="245.0" y2="421.0" stroke="#55555c" stroke-width="1.2" stroke-opacity="0.25900277008310246"/><line x1="245.0" y1="421.0" x2="412.9" y2="413.1" stroke="#55555c" stroke-width="1.0" stroke-opacity="0.16092943201376936"/><line x1="-345.1" y1="450.8" x2="26.4" y2="432.6" stroke="#55555c" stroke-width="1.4" stroke-opacity="0.4047619047619047"/><line x1="26.4" y1="432.6" x2="264.8" y2="421.0" stroke="#55555c" stroke-width="1.2" stroke-opacity="0.25900277008310246"/><line x1="264.8" y1="421.0" x2="424.8" y2="413.1" stroke="#55555c" stroke-width="1.0" stroke-opacity="0.16092943201376936"/><line x1="-294.7" y1="450.7" x2="58.0" y2="432.6" stroke="#55555c" stroke-width="1.4" stroke-opacity="0.4047619047619047"/><line x1="58.0" y1="432.6" x2="284.5" y2="420.9" stroke="#55555c" stroke-width="1.2" stroke-opacity="0.25900277008310246"/><line x1="284.5" y1="420.9" x2="436.8" y2="413.1" stroke="#55555c" stroke-width="1.0" stroke-opacity="0.16092943201376936"/><line x1="-244.4" y1="450.6" x2="89.6" y2="432.5" stroke="#55555c" stroke-width="1.4" stroke-opacity="0.4047619047619047"/><line x1="89.6" y1="432.5" x2="304.3" y2="420.9" stroke="#55555c" stroke-width="1.2" stroke-opacity="0.25900277008310246"/><line x1="304.3" y1="420.9" x2="448.7" y2="413.1" stroke="#55555c" stroke-width="1.0" stroke-opacity="0.16092943201376936"/><line x1="-194.4" y1="450.5" x2="121.0" y2="432.5" stroke="#55555c" stroke-width="1.4" stroke-opacity="0.4047619047619047"/><line x1="121.0" y1="432.5" x2="324.0" y2="420.9" stroke="#55555c" stroke-width="1.2" stroke-opacity="0.25900277008310246"/><line x1="324.0" y1="420.9" x2="460.6" y2="413.1" stroke="#55555c" stroke-width="1.0" stroke-opacity="0.16092943201376936"/><line x1="-144.5" y1="450.4" x2="152.4" y2="432.5" stroke="#55555c" stroke-width="1.4" stroke-opacity="0.4047619047619047"/><line x1="152.4" y1="432.5" x2="343.7" y2="420.9" stroke="#55555c" stroke-width="1.2" stroke-opacity="0.25900277008310246"/><line x1="343.7" y1="420.9" x2="472.6" y2="413.1" stroke="#55555c" stroke-width="1.0" stroke-opacity="0.16092943201376936"/><line x1="-94.8" y1="450.3" x2="183.7" y2="432.4" stroke="#55555c" stroke-width="1.4" stroke-opacity="0.4047619047619047"/><line x1="183.7" y1="432.4" x2="363.4" y2="420.9" stroke="#55555c" stroke-width="1.2" stroke-opacity="0.25900277008310246"/><line x1="363.4" y1="420.9" x2="484.5" y2="413.1" stroke="#55555c" stroke-width="1.0" stroke-opacity="0.16092943201376936"/><line x1="-45.3" y1="450.2" x2="214.9" y2="432.4" stroke="#55555c" stroke-width="1.4" stroke-opacity="0.4047619047619047"/><line x1="214.9" y1="432.4" x2="383.0" y2="420.9" stroke="#55555c" stroke-width="1.2" stroke-opacity="0.25900277008310246"/><line x1="383.0" y1="420.9" x2="496.4" y2="413.1" stroke="#55555c" stroke-width="1.0" stroke-opacity="0.16092943201376936"/><line x1="-341.1" y1="475.5" x2="4.0" y2="450.1" stroke="#55555c" stroke-width="1.6" stroke-opacity="0.6192052980132451"/><line x1="4.0" y1="450.1" x2="246.1" y2="432.3" stroke="#55555c" stroke-width="1.4" stroke-opacity="0.4047619047619047"/><line x1="246.1" y1="432.3" x2="402.6" y2="420.8" stroke="#55555c" stroke-width="1.2" stroke-opacity="0.25900277008310246"/><line x1="402.6" y1="420.8" x2="508.2" y2="413.1" stroke="#55555c" stroke-width="1.0" stroke-opacity="0.16092943201376936"/><line x1="-265.7" y1="475.2" x2="53.1" y2="450.0" stroke="#55555c" stroke-width="1.6" stroke-opacity="0.6192052980132451"/><line x1="53.1" y1="450.0" x2="277.1" y2="432.3" stroke="#55555c" stroke-width="1.4" stroke-opacity="0.4047619047619047"/><line x1="277.1" y1="432.3" x2="422.1" y2="420.8" stroke="#55555c" stroke-width="1.2" stroke-opacity="0.25900277008310246"/><line x1="422.1" y1="420.8" x2="520.1" y2="413.1" stroke="#55555c" stroke-width="1.0" stroke-opacity="0.16092943201376936"/><line x1="-190.8" y1="475.0" x2="102.0" y2="449.9" stroke="#55555c" stroke-width="1.6" stroke-opacity="0.6192052980132451"/><line x1="102.0" y1="449.9" x2="308.1" y2="432.3" stroke="#55555c" stroke-width="1.4" stroke-opacity="0.4047619047619047"/><line x1="308.1" y1="432.3" x2="441.7" y2="420.8" stroke="#55555c" stroke-width="1.2" stroke-opacity="0.25900277008310246"/><line x1="441.7" y1="420.8" x2="532.0" y2="413.1" stroke="#55555c" stroke-width="1.0" stroke-opacity="0.16092943201376936"/><line x1="-116.3" y1="474.8" x2="150.8" y2="449.8" stroke="#55555c" stroke-width="1.6" stroke-opacity="0.6192052980132451"/><line x1="150.8" y1="449.8" x2="339.0" y2="432.2" stroke="#55555c" stroke-width="1.4" stroke-opacity="0.4047619047619047"/><line x1="339.0" y1="432.2" x2="461.2" y2="420.8" stroke="#55555c" stroke-width="1.2" stroke-opacity="0.25900277008310246"/><line x1="461.2" y1="420.8" x2="543.8" y2="413.1" stroke="#55555c" stroke-width="1.0" stroke-opacity="0.16092943201376936"/><line x1="-42.2" y1="474.6" x2="199.3" y2="449.7" stroke="#55555c" stroke-width="1.6" stroke-opacity="0.6192052980132451"/><line x1="199.3" y1="449.7" x2="369.9" y2="432.2" stroke="#55555c" stroke-width="1.4" stroke-opacity="0.4047619047619047"/><line x1="369.9" y1="432.2" x2="480.7" y2="420.8" stroke="#55555c" stroke-width="1.2" stroke-opacity="0.25900277008310246"/><line x1="480.7" y1="420.8" x2="555.7" y2="413.1" stroke="#55555c" stroke-width="1.0" stroke-opacity="0.16092943201376936"/><line x1="-7735.2" y1="1363.2" x2="31.5" y2="474.4" stroke="#55555c" stroke-width="1.7" stroke-opacity="0.85"/><line x1="31.5" y1="474.4" x2="247.7" y2="449.7" stroke="#55555c" stroke-width="1.6" stroke-opacity="0.6192052980132451"/><line x1="247.7" y1="449.7" x2="400.7" y2="432.2" stroke="#55555c" stroke-width="1.4" stroke-opacity="0.4047619047619047"/><line x1="400.7" y1="432.2" x2="500.1" y2="420.8" stroke="#55555c" stroke-width="1.2" stroke-opacity="0.25900277008310246"/><line x1="500.1" y1="420.8" x2="567.5" y2="413.1" stroke="#55555c" stroke-width="1.0" stroke-opacity="0.16092943201376936"/><line x1="-263.7" y1="511.9" x2="-3.8" y2="481.1" stroke="#8a8a90" stroke-width="1.0" stroke-opacity="0.28"/><line x1="-252.5" y1="511.9" x2="4.2" y2="481.1" stroke="#8a8a90" stroke-width="1.0" stroke-opacity="0.28"/><line x1="-241.3" y1="511.8" x2="12.3" y2="481.1" stroke="#8a8a90" stroke-width="1.0" stroke-opacity="0.28"/><line x1="-230.1" y1="511.8" x2="20.3" y2="481.0" stroke="#8a8a90" stroke-width="1.0" stroke-opacity="0.28"/><line x1="-218.9" y1="511.7" x2="28.3" y2="481.0" stroke="#8a8a90" stroke-width="1.0" stroke-opacity="0.28"/><line x1="-207.7" y1="511.7" x2="36.3" y2="481.0" stroke="#8a8a90" stroke-width="1.0" stroke-opacity="0.28"/><line x1="-196.6" y1="511.6" x2="44.3" y2="481.0" stroke="#8a8a90" stroke-width="1.0" stroke-opacity="0.28"/><line x1="-6796.0" y1="1363.2" x2="104.8" y2="474.2" stroke="#55555c" stroke-width="1.7" stroke-opacity="0.85"/><line x1="104.8" y1="474.2" x2="295.9" y2="449.6" stroke="#55555c" stroke-width="1.6" stroke-opacity="0.6192052980132451"/><line x1="295.9" y1="449.6" x2="431.4" y2="432.1" stroke="#55555c" stroke-width="1.4" stroke-opacity="0.4047619047619047"/><line x1="431.4" y1="432.1" x2="519.5" y2="420.8" stroke="#55555c" stroke-width="1.2" stroke-opacity="0.25900277008310246"/><line x1="519.5" y1="420.8" x2="579.3" y2="413.1" stroke="#55555c" stroke-width="1.0" stroke-opacity="0.16092943201376936"/><line x1="-174.2" y1="511.5" x2="60.3" y2="480.9" stroke="#8a8a90" stroke-width="1.0" stroke-opacity="0.28"/><line x1="-163.1" y1="511.5" x2="68.3" y2="480.9" stroke="#8a8a90" stroke-width="1.0" stroke-opacity="0.28"/><line x1="-152.0" y1="511.4" x2="76.3" y2="480.9" stroke="#8a8a90" stroke-width="1.0" stroke-opacity="0.28"/><line x1="-140.8" y1="511.4" x2="84.3" y2="480.9" stroke="#8a8a90" stroke-width="1.0" stroke-opacity="0.28"/><line x1="-129.7" y1="511.3" x2="92.2" y2="480.8" stroke="#8a8a90" stroke-width="1.0" stroke-opacity="0.28"/><line x1="-118.6" y1="511.3" x2="100.2" y2="480.8" stroke="#8a8a90" stroke-width="1.0" stroke-opacity="0.28"/><line x1="-107.5" y1="511.2" x2="108.2" y2="480.8" stroke="#8a8a90" stroke-width="1.0" stroke-opacity="0.28"/><line x1="-96.4" y1="511.2" x2="116.1" y2="480.8" stroke="#8a8a90" stroke-width="1.0" stroke-opacity="0.28"/><line x1="-85.4" y1="511.2" x2="124.1" y2="480.7" stroke="#8a8a90" stroke-width="1.0" stroke-opacity="0.28"/><line x1="-5856.7" y1="1363.2" x2="177.6" y2="474.0" stroke="#55555c" stroke-width="1.7" stroke-opacity="0.85"/><line x1="177.6" y1="474.0" x2="343.9" y2="449.5" stroke="#55555c" stroke-width="1.6" stroke-opacity="0.6192052980132451"/><line x1="343.9" y1="449.5" x2="462.0" y2="432.1" stroke="#55555c" stroke-width="1.4" stroke-opacity="0.4047619047619047"/><line x1="462.0" y1="432.1" x2="538.9" y2="420.7" stroke="#55555c" stroke-width="1.2" stroke-opacity="0.25900277008310246"/><line x1="538.9" y1="420.7" x2="591.1" y2="413.1" stroke="#55555c" stroke-width="1.0" stroke-opacity="0.16092943201376936"/><line x1="-63.2" y1="511.1" x2="140.0" y2="480.7" stroke="#8a8a90" stroke-width="1.0" stroke-opacity="0.28"/><line x1="-52.2" y1="511.0" x2="147.9" y2="480.7" stroke="#8a8a90" stroke-width="1.0" stroke-opacity="0.28"/><line x1="-41.1" y1="511.0" x2="155.8" y2="480.6" stroke="#8a8a90" stroke-width="1.0" stroke-opacity="0.28"/><line x1="-30.1" y1="510.9" x2="163.8" y2="480.6" stroke="#8a8a90" stroke-width="1.0" stroke-opacity="0.28"/><line x1="-19.1" y1="510.9" x2="171.7" y2="480.6" stroke="#8a8a90" stroke-width="1.0" stroke-opacity="0.28"/><line x1="-8.1" y1="510.8" x2="179.6" y2="480.6" stroke="#8a8a90" stroke-width="1.0" stroke-opacity="0.28"/><line x1="-224.6" y1="548.1" x2="2.9" y2="510.8" stroke="#8a8a90" stroke-width="1.1" stroke-opacity="0.5"/><line x1="2.9" y1="510.8" x2="187.5" y2="480.5" stroke="#8a8a90" stroke-width="1.0" stroke-opacity="0.28"/><line x1="-209.7" y1="548.0" x2="13.9" y2="510.7" stroke="#8a8a90" stroke-width="1.1" stroke-opacity="0.5"/><line x1="13.9" y1="510.7" x2="195.4" y2="480.5" stroke="#8a8a90" stroke-width="1.0" stroke-opacity="0.28"/><line x1="-194.9" y1="547.9" x2="24.9" y2="510.7" stroke="#8a8a90" stroke-width="1.1" stroke-opacity="0.5"/><line x1="24.9" y1="510.7" x2="203.3" y2="480.5" stroke="#8a8a90" stroke-width="1.0" stroke-opacity="0.28"/><line x1="-4917.4" y1="1363.2" x2="250.0" y2="473.8" stroke="#55555c" stroke-width="1.7" stroke-opacity="0.85"/><line x1="250.0" y1="473.8" x2="391.8" y2="449.4" stroke="#55555c" stroke-width="1.6" stroke-opacity="0.6192052980132451"/><line x1="391.8" y1="449.4" x2="492.5" y2="432.0" stroke="#55555c" stroke-width="1.4" stroke-opacity="0.4047619047619047"/><line x1="492.5" y1="432.0" x2="558.3" y2="420.7" stroke="#55555c" stroke-width="1.2" stroke-opacity="0.25900277008310246"/><line x1="558.3" y1="420.7" x2="602.9" y2="413.0" stroke="#55555c" stroke-width="1.0" stroke-opacity="0.16092943201376936"/><line x1="-165.3" y1="547.7" x2="46.9" y2="510.6" stroke="#8a8a90" stroke-width="1.1" stroke-opacity="0.5"/><line x1="46.9" y1="510.6" x2="219.1" y2="480.4" stroke="#8a8a90" stroke-width="1.0" stroke-opacity="0.28"/><line x1="-150.5" y1="547.7" x2="57.8" y2="510.5" stroke="#8a8a90" stroke-width="1.1" stroke-opacity="0.5"/><line x1="57.8" y1="510.5" x2="227.0" y2="480.4" stroke="#8a8a90" stroke-width="1.0" stroke-opacity="0.28"/><line x1="-135.7" y1="547.6" x2="68.8" y2="510.5" stroke="#8a8a90" stroke-width="1.1" stroke-opacity="0.5"/><line x1="68.8" y1="510.5" x2="234.9" y2="480.4" stroke="#8a8a90" stroke-width="1.0" stroke-opacity="0.28"/><line x1="-121.0" y1="547.5" x2="79.7" y2="510.5" stroke="#8a8a90" stroke-width="1.1" stroke-opacity="0.5"/><line x1="79.7" y1="510.5" x2="242.8" y2="480.4" stroke="#8a8a90" stroke-width="1.0" stroke-opacity="0.28"/><line x1="-106.2" y1="547.4" x2="90.6" y2="510.4" stroke="#8a8a90" stroke-width="1.1" stroke-opacity="0.5"/><line x1="90.6" y1="510.4" x2="250.7" y2="480.3" stroke="#8a8a90" stroke-width="1.0" stroke-opacity="0.28"/><line x1="-91.5" y1="547.3" x2="101.6" y2="510.4" stroke="#8a8a90" stroke-width="1.1" stroke-opacity="0.5"/><line x1="101.6" y1="510.4" x2="258.5" y2="480.3" stroke="#8a8a90" stroke-width="1.0" stroke-opacity="0.28"/><line x1="-76.8" y1="547.2" x2="112.5" y2="510.3" stroke="#8a8a90" stroke-width="1.1" stroke-opacity="0.5"/><line x1="112.5" y1="510.3" x2="266.4" y2="480.3" stroke="#8a8a90" stroke-width="1.0" stroke-opacity="0.28"/><line x1="-62.1" y1="547.2" x2="123.4" y2="510.3" stroke="#8a8a90" stroke-width="1.1" stroke-opacity="0.5"/><line x1="123.4" y1="510.3" x2="274.3" y2="480.3" stroke="#8a8a90" stroke-width="1.0" stroke-opacity="0.28"/><line x1="-47.4" y1="547.1" x2="134.3" y2="510.2" stroke="#8a8a90" stroke-width="1.1" stroke-opacity="0.5"/><line x1="134.3" y1="510.2" x2="282.1" y2="480.2" stroke="#8a8a90" stroke-width="1.0" stroke-opacity="0.28"/><line x1="-3978.2" y1="1363.2" x2="322.1" y2="473.6" stroke="#55555c" stroke-width="1.7" stroke-opacity="0.85"/><line x1="322.1" y1="473.6" x2="439.4" y2="449.3" stroke="#55555c" stroke-width="1.6" stroke-opacity="0.6192052980132451"/><line x1="439.4" y1="449.3" x2="523.0" y2="432.0" stroke="#55555c" stroke-width="1.4" stroke-opacity="0.4047619047619047"/><line x1="523.0" y1="432.0" x2="577.6" y2="420.7" stroke="#55555c" stroke-width="1.2" stroke-opacity="0.25900277008310246"/><line x1="577.6" y1="420.7" x2="614.7" y2="413.0" stroke="#55555c" stroke-width="1.0" stroke-opacity="0.16092943201376936"/><line x1="-18.1" y1="546.9" x2="156.0" y2="510.1" stroke="#8a8a90" stroke-width="1.1" stroke-opacity="0.5"/><line x1="156.0" y1="510.1" x2="297.8" y2="480.2" stroke="#8a8a90" stroke-width="1.0" stroke-opacity="0.28"/><line x1="-3790.3" y1="1363.2" x2="-3.5" y2="546.8" stroke="#8a8a90" stroke-width="1.3" stroke-opacity="0.8"/><line x1="-3.5" y1="546.8" x2="166.9" y2="510.1" stroke="#8a8a90" stroke-width="1.1" stroke-opacity="0.5"/><line x1="166.9" y1="510.1" x2="305.7" y2="480.2" stroke="#8a8a90" stroke-width="1.0" stroke-opacity="0.28"/><line x1="-3696.4" y1="1363.2" x2="11.1" y2="546.7" stroke="#8a8a90" stroke-width="1.3" stroke-opacity="0.8"/><line x1="11.1" y1="546.7" x2="177.7" y2="510.0" stroke="#8a8a90" stroke-width="1.1" stroke-opacity="0.5"/><line x1="177.7" y1="510.0" x2="313.5" y2="480.1" stroke="#8a8a90" stroke-width="1.0" stroke-opacity="0.28"/><line x1="-3602.5" y1="1363.2" x2="25.7" y2="546.7" stroke="#8a8a90" stroke-width="1.3" stroke-opacity="0.8"/><line x1="25.7" y1="546.7" x2="188.6" y2="510.0" stroke="#8a8a90" stroke-width="1.1" stroke-opacity="0.5"/><line x1="188.6" y1="510.0" x2="321.3" y2="480.1" stroke="#8a8a90" stroke-width="1.0" stroke-opacity="0.28"/><line x1="-3508.5" y1="1363.2" x2="40.2" y2="546.6" stroke="#8a8a90" stroke-width="1.3" stroke-opacity="0.8"/><line x1="40.2" y1="546.6" x2="199.4" y2="510.0" stroke="#8a8a90" stroke-width="1.1" stroke-opacity="0.5"/><line x1="199.4" y1="510.0" x2="329.2" y2="480.1" stroke="#8a8a90" stroke-width="1.0" stroke-opacity="0.28"/><line x1="-3414.6" y1="1363.2" x2="54.8" y2="546.5" stroke="#8a8a90" stroke-width="1.3" stroke-opacity="0.8"/><line x1="54.8" y1="546.5" x2="210.3" y2="509.9" stroke="#8a8a90" stroke-width="1.1" stroke-opacity="0.5"/><line x1="210.3" y1="509.9" x2="337.0" y2="480.1" stroke="#8a8a90" stroke-width="1.0" stroke-opacity="0.28"/><line x1="-3320.7" y1="1363.2" x2="69.3" y2="546.4" stroke="#8a8a90" stroke-width="1.3" stroke-opacity="0.8"/><line x1="69.3" y1="546.4" x2="221.1" y2="509.9" stroke="#8a8a90" stroke-width="1.1" stroke-opacity="0.5"/><line x1="221.1" y1="509.9" x2="344.8" y2="480.0" stroke="#8a8a90" stroke-width="1.0" stroke-opacity="0.28"/><line x1="-3226.7" y1="1363.2" x2="83.9" y2="546.3" stroke="#8a8a90" stroke-width="1.3" stroke-opacity="0.8"/><line x1="83.9" y1="546.3" x2="231.9" y2="509.8" stroke="#8a8a90" stroke-width="1.1" stroke-opacity="0.5"/><line x1="231.9" y1="509.8" x2="352.6" y2="480.0" stroke="#8a8a90" stroke-width="1.0" stroke-opacity="0.28"/><line x1="-3132.8" y1="1363.2" x2="98.4" y2="546.3" stroke="#8a8a90" stroke-width="1.3" stroke-opacity="0.8"/><line x1="98.4" y1="546.3" x2="242.7" y2="509.8" stroke="#8a8a90" stroke-width="1.1" stroke-opacity="0.5"/><line x1="242.7" y1="509.8" x2="360.4" y2="480.0" stroke="#8a8a90" stroke-width="1.0" stroke-opacity="0.28"/><line x1="-3038.9" y1="1363.2" x2="393.7" y2="473.4" stroke="#55555c" stroke-width="1.7" stroke-opacity="0.85"/><line x1="393.7" y1="473.4" x2="486.9" y2="449.2" stroke="#55555c" stroke-width="1.6" stroke-opacity="0.6192052980132451"/><line x1="486.9" y1="449.2" x2="553.4" y2="432.0" stroke="#55555c" stroke-width="1.4" stroke-opacity="0.4047619047619047"/><line x1="553.4" y1="432.0" x2="596.9" y2="420.7" stroke="#55555c" stroke-width="1.2" stroke-opacity="0.25900277008310246"/><line x1="596.9" y1="420.7" x2="626.5" y2="413.0" stroke="#55555c" stroke-width="1.0" stroke-opacity="0.16092943201376936"/><line x1="-2945.0" y1="1363.2" x2="127.3" y2="546.1" stroke="#8a8a90" stroke-width="1.3" stroke-opacity="0.8"/><line x1="127.3" y1="546.1" x2="264.3" y2="509.7" stroke="#8a8a90" stroke-width="1.1" stroke-opacity="0.5"/><line x1="264.3" y1="509.7" x2="376.0" y2="480.0" stroke="#8a8a90" stroke-width="1.0" stroke-opacity="0.28"/><line x1="-2851.0" y1="1363.2" x2="141.8" y2="546.0" stroke="#8a8a90" stroke-width="1.3" stroke-opacity="0.8"/><line x1="141.8" y1="546.0" x2="275.0" y2="509.6" stroke="#8a8a90" stroke-width="1.1" stroke-opacity="0.5"/><line x1="275.0" y1="509.6" x2="383.8" y2="479.9" stroke="#8a8a90" stroke-width="1.0" stroke-opacity="0.28"/><line x1="-2757.1" y1="1363.2" x2="156.3" y2="545.9" stroke="#8a8a90" stroke-width="1.3" stroke-opacity="0.8"/><line x1="156.3" y1="545.9" x2="285.8" y2="509.6" stroke="#8a8a90" stroke-width="1.1" stroke-opacity="0.5"/><line x1="285.8" y1="509.6" x2="391.6" y2="479.9" stroke="#8a8a90" stroke-width="1.0" stroke-opacity="0.28"/><line x1="-2663.2" y1="1363.2" x2="170.7" y2="545.9" stroke="#8a8a90" stroke-width="1.3" stroke-opacity="0.8"/><line x1="170.7" y1="545.9" x2="296.6" y2="509.5" stroke="#8a8a90" stroke-width="1.1" stroke-opacity="0.5"/><line x1="296.6" y1="509.5" x2="399.4" y2="479.9" stroke="#8a8a90" stroke-width="1.0" stroke-opacity="0.28"/><line x1="-2569.3" y1="1363.2" x2="185.1" y2="545.8" stroke="#8a8a90" stroke-width="1.3" stroke-opacity="0.8"/><line x1="185.1" y1="545.8" x2="307.3" y2="509.5" stroke="#8a8a90" stroke-width="1.1" stroke-opacity="0.5"/><line x1="307.3" y1="509.5" x2="407.2" y2="479.9" stroke="#8a8a90" stroke-width="1.0" stroke-opacity="0.28"/><line x1="-2475.3" y1="1363.2" x2="199.5" y2="545.7" stroke="#8a8a90" stroke-width="1.3" stroke-opacity="0.8"/><line x1="199.5" y1="545.7" x2="318.1" y2="509.5" stroke="#8a8a90" stroke-width="1.1" stroke-opacity="0.5"/><line x1="318.1" y1="509.5" x2="415.0" y2="479.8" stroke="#8a8a90" stroke-width="1.0" stroke-opacity="0.28"/><line x1="-2381.4" y1="1363.2" x2="213.9" y2="545.6" stroke="#8a8a90" stroke-width="1.3" stroke-opacity="0.8"/><line x1="213.9" y1="545.6" x2="328.8" y2="509.4" stroke="#8a8a90" stroke-width="1.1" stroke-opacity="0.5"/><line x1="328.8" y1="509.4" x2="422.7" y2="479.8" stroke="#8a8a90" stroke-width="1.0" stroke-opacity="0.28"/><line x1="-2287.5" y1="1363.2" x2="228.2" y2="545.5" stroke="#8a8a90" stroke-width="1.3" stroke-opacity="0.8"/><line x1="228.2" y1="545.5" x2="339.5" y2="509.4" stroke="#8a8a90" stroke-width="1.1" stroke-opacity="0.5"/><line x1="339.5" y1="509.4" x2="430.5" y2="479.8" stroke="#8a8a90" stroke-width="1.0" stroke-opacity="0.28"/><line x1="-2193.6" y1="1363.2" x2="242.6" y2="545.4" stroke="#8a8a90" stroke-width="1.3" stroke-opacity="0.8"/><line x1="242.6" y1="545.4" x2="350.2" y2="509.3" stroke="#8a8a90" stroke-width="1.1" stroke-opacity="0.5"/><line x1="350.2" y1="509.3" x2="438.3" y2="479.8" stroke="#8a8a90" stroke-width="1.0" stroke-opacity="0.28"/><line x1="-2099.6" y1="1363.2" x2="464.9" y2="473.2" stroke="#55555c" stroke-width="1.7" stroke-opacity="0.85"/><line x1="464.9" y1="473.2" x2="534.2" y2="449.1" stroke="#55555c" stroke-width="1.6" stroke-opacity="0.6192052980132451"/><line x1="534.2" y1="449.1" x2="583.8" y2="431.9" stroke="#55555c" stroke-width="1.4" stroke-opacity="0.4047619047619047"/><line x1="583.8" y1="431.9" x2="616.2" y2="420.7" stroke="#55555c" stroke-width="1.2" stroke-opacity="0.25900277008310246"/><line x1="616.2" y1="420.7" x2="638.2" y2="413.0" stroke="#55555c" stroke-width="1.0" stroke-opacity="0.16092943201376936"/><line x1="-2005.7" y1="1363.2" x2="271.2" y2="545.3" stroke="#8a8a90" stroke-width="1.3" stroke-opacity="0.8"/><line x1="271.2" y1="545.3" x2="371.6" y2="509.2" stroke="#8a8a90" stroke-width="1.1" stroke-opacity="0.5"/><line x1="371.6" y1="509.2" x2="453.8" y2="479.7" stroke="#8a8a90" stroke-width="1.0" stroke-opacity="0.28"/><line x1="-1911.8" y1="1363.2" x2="285.5" y2="545.2" stroke="#8a8a90" stroke-width="1.3" stroke-opacity="0.8"/><line x1="285.5" y1="545.2" x2="382.3" y2="509.2" stroke="#8a8a90" stroke-width="1.1" stroke-opacity="0.5"/><line x1="382.3" y1="509.2" x2="461.5" y2="479.7" stroke="#8a8a90" stroke-width="1.0" stroke-opacity="0.28"/><line x1="-1817.9" y1="1363.2" x2="299.8" y2="545.1" stroke="#8a8a90" stroke-width="1.3" stroke-opacity="0.8"/><line x1="299.8" y1="545.1" x2="393.0" y2="509.1" stroke="#8a8a90" stroke-width="1.1" stroke-opacity="0.5"/><line x1="393.0" y1="509.1" x2="469.3" y2="479.7" stroke="#8a8a90" stroke-width="1.0" stroke-opacity="0.28"/><line x1="-1723.9" y1="1363.2" x2="314.1" y2="545.0" stroke="#8a8a90" stroke-width="1.3" stroke-opacity="0.8"/><line x1="314.1" y1="545.0" x2="403.6" y2="509.1" stroke="#8a8a90" stroke-width="1.1" stroke-opacity="0.5"/><line x1="403.6" y1="509.1" x2="477.0" y2="479.6" stroke="#8a8a90" stroke-width="1.0" stroke-opacity="0.28"/><line x1="-1630.0" y1="1363.2" x2="328.3" y2="545.0" stroke="#8a8a90" stroke-width="1.3" stroke-opacity="0.8"/><line x1="328.3" y1="545.0" x2="414.3" y2="509.0" stroke="#8a8a90" stroke-width="1.1" stroke-opacity="0.5"/><line x1="414.3" y1="509.0" x2="484.7" y2="479.6" stroke="#8a8a90" stroke-width="1.0" stroke-opacity="0.28"/><line x1="-1536.1" y1="1363.2" x2="342.6" y2="544.9" stroke="#8a8a90" stroke-width="1.3" stroke-opacity="0.8"/><line x1="342.6" y1="544.9" x2="425.0" y2="509.0" stroke="#8a8a90" stroke-width="1.1" stroke-opacity="0.5"/><line x1="425.0" y1="509.0" x2="492.5" y2="479.6" stroke="#8a8a90" stroke-width="1.0" stroke-opacity="0.28"/><line x1="-1442.1" y1="1363.2" x2="356.8" y2="544.8" stroke="#8a8a90" stroke-width="1.3" stroke-opacity="0.8"/><line x1="356.8" y1="544.8" x2="435.6" y2="509.0" stroke="#8a8a90" stroke-width="1.1" stroke-opacity="0.5"/><line x1="435.6" y1="509.0" x2="500.2" y2="479.6" stroke="#8a8a90" stroke-width="1.0" stroke-opacity="0.28"/><line x1="-1348.2" y1="1363.2" x2="371.0" y2="544.7" stroke="#8a8a90" stroke-width="1.3" stroke-opacity="0.8"/><line x1="371.0" y1="544.7" x2="446.2" y2="508.9" stroke="#8a8a90" stroke-width="1.1" stroke-opacity="0.5"/><line x1="446.2" y1="508.9" x2="507.9" y2="479.5" stroke="#8a8a90" stroke-width="1.0" stroke-opacity="0.28"/><line x1="-1254.3" y1="1363.2" x2="385.2" y2="544.6" stroke="#8a8a90" stroke-width="1.3" stroke-opacity="0.8"/><line x1="385.2" y1="544.6" x2="456.8" y2="508.9" stroke="#8a8a90" stroke-width="1.1" stroke-opacity="0.5"/><line x1="456.8" y1="508.9" x2="515.6" y2="479.5" stroke="#8a8a90" stroke-width="1.0" stroke-opacity="0.28"/><line x1="-1160.4" y1="1363.2" x2="535.8" y2="473.0" stroke="#55555c" stroke-width="1.7" stroke-opacity="0.85"/><line x1="535.8" y1="473.0" x2="581.4" y2="449.0" stroke="#55555c" stroke-width="1.6" stroke-opacity="0.6192052980132451"/><line x1="581.4" y1="449.0" x2="614.0" y2="431.9" stroke="#55555c" stroke-width="1.4" stroke-opacity="0.4047619047619047"/><line x1="614.0" y1="431.9" x2="635.4" y2="420.7" stroke="#55555c" stroke-width="1.2" stroke-opacity="0.25900277008310246"/><line x1="635.4" y1="420.7" x2="650.0" y2="413.0" stroke="#55555c" stroke-width="1.0" stroke-opacity="0.16092943201376936"/><line x1="-1066.4" y1="1363.2" x2="413.5" y2="544.5" stroke="#8a8a90" stroke-width="1.3" stroke-opacity="0.8"/><line x1="413.5" y1="544.5" x2="478.1" y2="508.8" stroke="#8a8a90" stroke-width="1.1" stroke-opacity="0.5"/><line x1="478.1" y1="508.8" x2="531.0" y2="479.5" stroke="#8a8a90" stroke-width="1.0" stroke-opacity="0.28"/><line x1="-972.5" y1="1363.2" x2="427.7" y2="544.4" stroke="#8a8a90" stroke-width="1.3" stroke-opacity="0.8"/><line x1="427.7" y1="544.4" x2="488.7" y2="508.7" stroke="#8a8a90" stroke-width="1.1" stroke-opacity="0.5"/><line x1="488.7" y1="508.7" x2="538.7" y2="479.5" stroke="#8a8a90" stroke-width="1.0" stroke-opacity="0.28"/><line x1="-878.6" y1="1363.2" x2="441.8" y2="544.3" stroke="#8a8a90" stroke-width="1.3" stroke-opacity="0.8"/><line x1="441.8" y1="544.3" x2="499.3" y2="508.7" stroke="#8a8a90" stroke-width="1.1" stroke-opacity="0.5"/><line x1="499.3" y1="508.7" x2="546.4" y2="479.4" stroke="#8a8a90" stroke-width="1.0" stroke-opacity="0.28"/><line x1="-784.7" y1="1363.2" x2="455.9" y2="544.3" stroke="#8a8a90" stroke-width="1.3" stroke-opacity="0.8"/><line x1="455.9" y1="544.3" x2="509.8" y2="508.6" stroke="#8a8a90" stroke-width="1.1" stroke-opacity="0.5"/><line x1="509.8" y1="508.6" x2="554.1" y2="479.4" stroke="#8a8a90" stroke-width="1.0" stroke-opacity="0.28"/><line x1="-690.7" y1="1363.2" x2="470.0" y2="544.2" stroke="#8a8a90" stroke-width="1.3" stroke-opacity="0.8"/><line x1="470.0" y1="544.2" x2="520.4" y2="508.6" stroke="#8a8a90" stroke-width="1.1" stroke-opacity="0.5"/><line x1="520.4" y1="508.6" x2="561.8" y2="479.4" stroke="#8a8a90" stroke-width="1.0" stroke-opacity="0.28"/><line x1="-596.8" y1="1363.2" x2="484.1" y2="544.1" stroke="#8a8a90" stroke-width="1.3" stroke-opacity="0.8"/><line x1="484.1" y1="544.1" x2="531.0" y2="508.6" stroke="#8a8a90" stroke-width="1.1" stroke-opacity="0.5"/><line x1="531.0" y1="508.6" x2="569.5" y2="479.4" stroke="#8a8a90" stroke-width="1.0" stroke-opacity="0.28"/><line x1="-502.9" y1="1363.2" x2="498.1" y2="544.0" stroke="#8a8a90" stroke-width="1.3" stroke-opacity="0.8"/><line x1="498.1" y1="544.0" x2="541.5" y2="508.5" stroke="#8a8a90" stroke-width="1.1" stroke-opacity="0.5"/><line x1="541.5" y1="508.5" x2="577.2" y2="479.3" stroke="#8a8a90" stroke-width="1.0" stroke-opacity="0.28"/><line x1="-409.0" y1="1363.2" x2="512.2" y2="543.9" stroke="#8a8a90" stroke-width="1.3" stroke-opacity="0.8"/><line x1="512.2" y1="543.9" x2="552.1" y2="508.5" stroke="#8a8a90" stroke-width="1.1" stroke-opacity="0.5"/><line x1="552.1" y1="508.5" x2="584.8" y2="479.3" stroke="#8a8a90" stroke-width="1.0" stroke-opacity="0.28"/><line x1="-315.0" y1="1363.2" x2="526.2" y2="543.9" stroke="#8a8a90" stroke-width="1.3" stroke-opacity="0.8"/><line x1="526.2" y1="543.9" x2="562.6" y2="508.4" stroke="#8a8a90" stroke-width="1.1" stroke-opacity="0.5"/><line x1="562.6" y1="508.4" x2="592.5" y2="479.3" stroke="#8a8a90" stroke-width="1.0" stroke-opacity="0.28"/><line x1="-221.1" y1="1363.2" x2="606.2" y2="472.8" stroke="#55555c" stroke-width="1.7" stroke-opacity="0.85"/><line x1="606.2" y1="472.8" x2="628.3" y2="448.9" stroke="#55555c" stroke-width="1.6" stroke-opacity="0.6192052980132451"/><line x1="628.3" y1="448.9" x2="644.2" y2="431.9" stroke="#55555c" stroke-width="1.4" stroke-opacity="0.4047619047619047"/><line x1="644.2" y1="431.9" x2="654.6" y2="420.7" stroke="#55555c" stroke-width="1.2" stroke-opacity="0.25900277008310246"/><line x1="654.6" y1="420.7" x2="661.7" y2="413.0" stroke="#55555c" stroke-width="1.0" stroke-opacity="0.16092943201376936"/><line x1="-127.2" y1="1363.2" x2="554.2" y2="543.7" stroke="#8a8a90" stroke-width="1.3" stroke-opacity="0.8"/><line x1="554.2" y1="543.7" x2="583.6" y2="508.3" stroke="#8a8a90" stroke-width="1.1" stroke-opacity="0.5"/><line x1="583.6" y1="508.3" x2="607.8" y2="479.2" stroke="#8a8a90" stroke-width="1.0" stroke-opacity="0.28"/><line x1="-33.3" y1="1363.2" x2="568.2" y2="543.6" stroke="#8a8a90" stroke-width="1.3" stroke-opacity="0.8"/><line x1="568.2" y1="543.6" x2="594.2" y2="508.3" stroke="#8a8a90" stroke-width="1.1" stroke-opacity="0.5"/><line x1="594.2" y1="508.3" x2="615.5" y2="479.2" stroke="#8a8a90" stroke-width="1.0" stroke-opacity="0.28"/><line x1="60.7" y1="1363.2" x2="582.2" y2="543.5" stroke="#8a8a90" stroke-width="1.3" stroke-opacity="0.8"/><line x1="582.2" y1="543.5" x2="604.7" y2="508.2" stroke="#8a8a90" stroke-width="1.1" stroke-opacity="0.5"/><line x1="604.7" y1="508.2" x2="623.1" y2="479.2" stroke="#8a8a90" stroke-width="1.0" stroke-opacity="0.28"/><line x1="154.6" y1="1363.2" x2="596.1" y2="543.5" stroke="#8a8a90" stroke-width="1.3" stroke-opacity="0.8"/><line x1="596.1" y1="543.5" x2="615.1" y2="508.2" stroke="#8a8a90" stroke-width="1.1" stroke-opacity="0.5"/><line x1="615.1" y1="508.2" x2="630.8" y2="479.2" stroke="#8a8a90" stroke-width="1.0" stroke-opacity="0.28"/><line x1="248.5" y1="1363.2" x2="610.1" y2="543.4" stroke="#8a8a90" stroke-width="1.3" stroke-opacity="0.8"/><line x1="610.1" y1="543.4" x2="625.6" y2="508.2" stroke="#8a8a90" stroke-width="1.1" stroke-opacity="0.5"/><line x1="625.6" y1="508.2" x2="638.4" y2="479.1" stroke="#8a8a90" stroke-width="1.0" stroke-opacity="0.28"/><line x1="342.5" y1="1363.2" x2="624.0" y2="543.3" stroke="#8a8a90" stroke-width="1.3" stroke-opacity="0.8"/><line x1="624.0" y1="543.3" x2="636.1" y2="508.1" stroke="#8a8a90" stroke-width="1.1" stroke-opacity="0.5"/><line x1="636.1" y1="508.1" x2="646.1" y2="479.1" stroke="#8a8a90" stroke-width="1.0" stroke-opacity="0.28"/><line x1="436.4" y1="1363.2" x2="637.9" y2="543.2" stroke="#8a8a90" stroke-width="1.3" stroke-opacity="0.8"/><line x1="637.9" y1="543.2" x2="646.6" y2="508.1" stroke="#8a8a90" stroke-width="1.1" stroke-opacity="0.5"/><line x1="646.6" y1="508.1" x2="653.7" y2="479.1" stroke="#8a8a90" stroke-width="1.0" stroke-opacity="0.28"/><line x1="530.3" y1="1363.2" x2="651.8" y2="543.2" stroke="#8a8a90" stroke-width="1.3" stroke-opacity="0.8"/><line x1="651.8" y1="543.2" x2="657.0" y2="508.0" stroke="#8a8a90" stroke-width="1.1" stroke-opacity="0.5"/><line x1="657.0" y1="508.0" x2="661.3" y2="479.1" stroke="#8a8a90" stroke-width="1.0" stroke-opacity="0.28"/><line x1="624.2" y1="1363.2" x2="665.7" y2="543.1" stroke="#8a8a90" stroke-width="1.3" stroke-opacity="0.8"/><line x1="665.7" y1="543.1" x2="667.5" y2="508.0" stroke="#8a8a90" stroke-width="1.1" stroke-opacity="0.5"/><line x1="667.5" y1="508.0" x2="668.9" y2="479.1" stroke="#8a8a90" stroke-width="1.0" stroke-opacity="0.28"/><line x1="718.2" y1="1363.2" x2="676.3" y2="472.6" stroke="#55555c" stroke-width="1.7" stroke-opacity="0.85"/><line x1="676.3" y1="472.6" x2="675.1" y2="448.8" stroke="#55555c" stroke-width="1.6" stroke-opacity="0.6192052980132451"/><line x1="675.1" y1="448.8" x2="674.3" y2="431.8" stroke="#55555c" stroke-width="1.4" stroke-opacity="0.4047619047619047"/><line x1="674.3" y1="431.8" x2="673.8" y2="420.6" stroke="#55555c" stroke-width="1.2" stroke-opacity="0.25900277008310246"/><line x1="673.8" y1="420.6" x2="673.4" y2="413.0" stroke="#55555c" stroke-width="1.0" stroke-opacity="0.16092943201376936"/><line x1="812.1" y1="1363.2" x2="693.4" y2="542.9" stroke="#8a8a90" stroke-width="1.3" stroke-opacity="0.8"/><line x1="693.4" y1="542.9" x2="688.3" y2="507.9" stroke="#8a8a90" stroke-width="1.1" stroke-opacity="0.5"/><line x1="688.3" y1="507.9" x2="684.2" y2="479.0" stroke="#8a8a90" stroke-width="1.0" stroke-opacity="0.28"/><line x1="906.0" y1="1363.2" x2="707.2" y2="542.8" stroke="#8a8a90" stroke-width="1.3" stroke-opacity="0.8"/><line x1="707.2" y1="542.8" x2="698.8" y2="507.8" stroke="#8a8a90" stroke-width="1.1" stroke-opacity="0.5"/><line x1="698.8" y1="507.8" x2="691.8" y2="479.0" stroke="#8a8a90" stroke-width="1.0" stroke-opacity="0.28"/><line x1="999.9" y1="1363.2" x2="721.1" y2="542.8" stroke="#8a8a90" stroke-width="1.3" stroke-opacity="0.8"/><line x1="721.1" y1="542.8" x2="709.2" y2="507.8" stroke="#8a8a90" stroke-width="1.1" stroke-opacity="0.5"/><line x1="709.2" y1="507.8" x2="699.4" y2="479.0" stroke="#8a8a90" stroke-width="1.0" stroke-opacity="0.28"/><line x1="1093.9" y1="1363.2" x2="734.9" y2="542.7" stroke="#8a8a90" stroke-width="1.3" stroke-opacity="0.8"/><line x1="734.9" y1="542.7" x2="719.6" y2="507.8" stroke="#8a8a90" stroke-width="1.1" stroke-opacity="0.5"/><line x1="719.6" y1="507.8" x2="707.0" y2="478.9" stroke="#8a8a90" stroke-width="1.0" stroke-opacity="0.28"/><line x1="1187.8" y1="1363.2" x2="748.7" y2="542.6" stroke="#8a8a90" stroke-width="1.3" stroke-opacity="0.8"/><line x1="748.7" y1="542.6" x2="730.0" y2="507.7" stroke="#8a8a90" stroke-width="1.1" stroke-opacity="0.5"/><line x1="730.0" y1="507.7" x2="714.6" y2="478.9" stroke="#8a8a90" stroke-width="1.0" stroke-opacity="0.28"/><line x1="1281.7" y1="1363.2" x2="762.4" y2="542.5" stroke="#8a8a90" stroke-width="1.3" stroke-opacity="0.8"/><line x1="762.4" y1="542.5" x2="740.4" y2="507.7" stroke="#8a8a90" stroke-width="1.1" stroke-opacity="0.5"/><line x1="740.4" y1="507.7" x2="722.2" y2="478.9" stroke="#8a8a90" stroke-width="1.0" stroke-opacity="0.28"/><line x1="1375.6" y1="1363.2" x2="776.2" y2="542.5" stroke="#8a8a90" stroke-width="1.3" stroke-opacity="0.8"/><line x1="776.2" y1="542.5" x2="750.8" y2="507.6" stroke="#8a8a90" stroke-width="1.1" stroke-opacity="0.5"/><line x1="750.8" y1="507.6" x2="729.8" y2="478.9" stroke="#8a8a90" stroke-width="1.0" stroke-opacity="0.28"/><line x1="1469.6" y1="1363.2" x2="789.9" y2="542.4" stroke="#8a8a90" stroke-width="1.3" stroke-opacity="0.8"/><line x1="789.9" y1="542.4" x2="761.1" y2="507.6" stroke="#8a8a90" stroke-width="1.1" stroke-opacity="0.5"/><line x1="761.1" y1="507.6" x2="737.3" y2="478.8" stroke="#8a8a90" stroke-width="1.0" stroke-opacity="0.28"/><line x1="1563.5" y1="1363.2" x2="803.7" y2="542.3" stroke="#8a8a90" stroke-width="1.3" stroke-opacity="0.8"/><line x1="803.7" y1="542.3" x2="771.5" y2="507.5" stroke="#8a8a90" stroke-width="1.1" stroke-opacity="0.5"/><line x1="771.5" y1="507.5" x2="744.9" y2="478.8" stroke="#8a8a90" stroke-width="1.0" stroke-opacity="0.28"/><line x1="1657.4" y1="1363.2" x2="745.9" y2="472.4" stroke="#55555c" stroke-width="1.7" stroke-opacity="0.85"/><line x1="745.9" y1="472.4" x2="721.8" y2="448.8" stroke="#55555c" stroke-width="1.6" stroke-opacity="0.6192052980132451"/><line x1="721.8" y1="448.8" x2="704.4" y2="431.8" stroke="#55555c" stroke-width="1.4" stroke-opacity="0.4047619047619047"/><line x1="704.4" y1="431.8" x2="693.0" y2="420.6" stroke="#55555c" stroke-width="1.2" stroke-opacity="0.25900277008310246"/><line x1="693.0" y1="420.6" x2="685.2" y2="413.0" stroke="#55555c" stroke-width="1.0" stroke-opacity="0.16092943201376936"/><line x1="1751.4" y1="1363.2" x2="831.1" y2="542.2" stroke="#8a8a90" stroke-width="1.3" stroke-opacity="0.8"/><line x1="831.1" y1="542.2" x2="792.2" y2="507.4" stroke="#8a8a90" stroke-width="1.1" stroke-opacity="0.5"/><line x1="792.2" y1="507.4" x2="760.0" y2="478.8" stroke="#8a8a90" stroke-width="1.0" stroke-opacity="0.28"/><line x1="1845.3" y1="1363.2" x2="844.8" y2="542.1" stroke="#8a8a90" stroke-width="1.3" stroke-opacity="0.8"/><line x1="844.8" y1="542.1" x2="802.5" y2="507.4" stroke="#8a8a90" stroke-width="1.1" stroke-opacity="0.5"/><line x1="802.5" y1="507.4" x2="767.6" y2="478.7" stroke="#8a8a90" stroke-width="1.0" stroke-opacity="0.28"/><line x1="1939.2" y1="1363.2" x2="858.4" y2="542.0" stroke="#8a8a90" stroke-width="1.3" stroke-opacity="0.8"/><line x1="858.4" y1="542.0" x2="812.9" y2="507.4" stroke="#8a8a90" stroke-width="1.1" stroke-opacity="0.5"/><line x1="812.9" y1="507.4" x2="775.2" y2="478.7" stroke="#8a8a90" stroke-width="1.0" stroke-opacity="0.28"/><line x1="2033.1" y1="1363.2" x2="872.1" y2="541.9" stroke="#8a8a90" stroke-width="1.3" stroke-opacity="0.8"/><line x1="872.1" y1="541.9" x2="823.2" y2="507.3" stroke="#8a8a90" stroke-width="1.1" stroke-opacity="0.5"/><line x1="823.2" y1="507.3" x2="782.7" y2="478.7" stroke="#8a8a90" stroke-width="1.0" stroke-opacity="0.28"/><line x1="2127.1" y1="1363.2" x2="885.7" y2="541.8" stroke="#8a8a90" stroke-width="1.3" stroke-opacity="0.8"/><line x1="885.7" y1="541.8" x2="833.5" y2="507.3" stroke="#8a8a90" stroke-width="1.1" stroke-opacity="0.5"/><line x1="833.5" y1="507.3" x2="790.3" y2="478.7" stroke="#8a8a90" stroke-width="1.0" stroke-opacity="0.28"/><line x1="2221.0" y1="1363.2" x2="899.4" y2="541.8" stroke="#8a8a90" stroke-width="1.3" stroke-opacity="0.8"/><line x1="899.4" y1="541.8" x2="843.8" y2="507.2" stroke="#8a8a90" stroke-width="1.1" stroke-opacity="0.5"/><line x1="843.8" y1="507.2" x2="797.8" y2="478.7" stroke="#8a8a90" stroke-width="1.0" stroke-opacity="0.28"/><line x1="2314.9" y1="1363.2" x2="913.0" y2="541.7" stroke="#8a8a90" stroke-width="1.3" stroke-opacity="0.8"/><line x1="913.0" y1="541.7" x2="854.1" y2="507.2" stroke="#8a8a90" stroke-width="1.1" stroke-opacity="0.5"/><line x1="854.1" y1="507.2" x2="805.4" y2="478.6" stroke="#8a8a90" stroke-width="1.0" stroke-opacity="0.28"/><line x1="2408.8" y1="1363.2" x2="926.6" y2="541.6" stroke="#8a8a90" stroke-width="1.3" stroke-opacity="0.8"/><line x1="926.6" y1="541.6" x2="864.4" y2="507.1" stroke="#8a8a90" stroke-width="1.1" stroke-opacity="0.5"/><line x1="864.4" y1="507.1" x2="812.9" y2="478.6" stroke="#8a8a90" stroke-width="1.0" stroke-opacity="0.28"/><line x1="2502.8" y1="1363.2" x2="940.2" y2="541.5" stroke="#8a8a90" stroke-width="1.3" stroke-opacity="0.8"/><line x1="940.2" y1="541.5" x2="874.7" y2="507.1" stroke="#8a8a90" stroke-width="1.1" stroke-opacity="0.5"/><line x1="874.7" y1="507.1" x2="820.4" y2="478.6" stroke="#8a8a90" stroke-width="1.0" stroke-opacity="0.28"/><line x1="2596.7" y1="1363.2" x2="815.2" y2="472.2" stroke="#55555c" stroke-width="1.7" stroke-opacity="0.85"/><line x1="815.2" y1="472.2" x2="768.2" y2="448.7" stroke="#55555c" stroke-width="1.6" stroke-opacity="0.6192052980132451"/><line x1="768.2" y1="448.7" x2="734.4" y2="431.7" stroke="#55555c" stroke-width="1.4" stroke-opacity="0.4047619047619047"/><line x1="734.4" y1="431.7" x2="712.1" y2="420.6" stroke="#55555c" stroke-width="1.2" stroke-opacity="0.25900277008310246"/><line x1="712.1" y1="420.6" x2="696.9" y2="413.0" stroke="#55555c" stroke-width="1.0" stroke-opacity="0.16092943201376936"/><line x1="2690.6" y1="1363.2" x2="967.3" y2="541.4" stroke="#8a8a90" stroke-width="1.3" stroke-opacity="0.8"/><line x1="967.3" y1="541.4" x2="895.2" y2="507.0" stroke="#8a8a90" stroke-width="1.1" stroke-opacity="0.5"/><line x1="895.2" y1="507.0" x2="835.5" y2="478.5" stroke="#8a8a90" stroke-width="1.0" stroke-opacity="0.28"/><line x1="2784.5" y1="1363.2" x2="980.8" y2="541.3" stroke="#8a8a90" stroke-width="1.3" stroke-opacity="0.8"/><line x1="980.8" y1="541.3" x2="905.4" y2="507.0" stroke="#8a8a90" stroke-width="1.1" stroke-opacity="0.5"/><line x1="905.4" y1="507.0" x2="843.0" y2="478.5" stroke="#8a8a90" stroke-width="1.0" stroke-opacity="0.28"/><line x1="2878.5" y1="1363.2" x2="994.3" y2="541.2" stroke="#8a8a90" stroke-width="1.3" stroke-opacity="0.8"/><line x1="994.3" y1="541.2" x2="915.7" y2="506.9" stroke="#8a8a90" stroke-width="1.1" stroke-opacity="0.5"/><line x1="915.7" y1="506.9" x2="850.5" y2="478.5" stroke="#8a8a90" stroke-width="1.0" stroke-opacity="0.28"/><line x1="2972.4" y1="1363.2" x2="1007.8" y2="541.2" stroke="#8a8a90" stroke-width="1.3" stroke-opacity="0.8"/><line x1="1007.8" y1="541.2" x2="925.9" y2="506.9" stroke="#8a8a90" stroke-width="1.1" stroke-opacity="0.5"/><line x1="925.9" y1="506.9" x2="858.0" y2="478.5" stroke="#8a8a90" stroke-width="1.0" stroke-opacity="0.28"/><line x1="3066.3" y1="1363.2" x2="1021.3" y2="541.1" stroke="#8a8a90" stroke-width="1.3" stroke-opacity="0.8"/><line x1="1021.3" y1="541.1" x2="936.2" y2="506.8" stroke="#8a8a90" stroke-width="1.1" stroke-opacity="0.5"/><line x1="936.2" y1="506.8" x2="865.5" y2="478.4" stroke="#8a8a90" stroke-width="1.0" stroke-opacity="0.28"/><line x1="3160.2" y1="1363.2" x2="1034.8" y2="541.0" stroke="#8a8a90" stroke-width="1.3" stroke-opacity="0.8"/><line x1="1034.8" y1="541.0" x2="946.4" y2="506.8" stroke="#8a8a90" stroke-width="1.1" stroke-opacity="0.5"/><line x1="946.4" y1="506.8" x2="873.0" y2="478.4" stroke="#8a8a90" stroke-width="1.0" stroke-opacity="0.28"/><line x1="3254.2" y1="1363.2" x2="1048.3" y2="540.9" stroke="#8a8a90" stroke-width="1.3" stroke-opacity="0.8"/><line x1="1048.3" y1="540.9" x2="956.6" y2="506.8" stroke="#8a8a90" stroke-width="1.1" stroke-opacity="0.5"/><line x1="956.6" y1="506.8" x2="880.5" y2="478.4" stroke="#8a8a90" stroke-width="1.0" stroke-opacity="0.28"/><line x1="3348.1" y1="1363.2" x2="1061.7" y2="540.9" stroke="#8a8a90" stroke-width="1.3" stroke-opacity="0.8"/><line x1="1061.7" y1="540.9" x2="966.8" y2="506.7" stroke="#8a8a90" stroke-width="1.1" stroke-opacity="0.5"/><line x1="966.8" y1="506.7" x2="888.0" y2="478.4" stroke="#8a8a90" stroke-width="1.0" stroke-opacity="0.28"/><line x1="3442.0" y1="1363.2" x2="1075.2" y2="540.8" stroke="#8a8a90" stroke-width="1.3" stroke-opacity="0.8"/><line x1="1075.2" y1="540.8" x2="977.0" y2="506.7" stroke="#8a8a90" stroke-width="1.1" stroke-opacity="0.5"/><line x1="977.0" y1="506.7" x2="895.5" y2="478.4" stroke="#8a8a90" stroke-width="1.0" stroke-opacity="0.28"/><line x1="3536.0" y1="1363.2" x2="884.1" y2="472.0" stroke="#55555c" stroke-width="1.7" stroke-opacity="0.85"/><line x1="884.1" y1="472.0" x2="814.5" y2="448.6" stroke="#55555c" stroke-width="1.6" stroke-opacity="0.6192052980132451"/><line x1="814.5" y1="448.6" x2="764.3" y2="431.7" stroke="#55555c" stroke-width="1.4" stroke-opacity="0.4047619047619047"/><line x1="764.3" y1="431.7" x2="731.2" y2="420.6" stroke="#55555c" stroke-width="1.2" stroke-opacity="0.25900277008310246"/><line x1="731.2" y1="420.6" x2="708.6" y2="413.0" stroke="#55555c" stroke-width="1.0" stroke-opacity="0.16092943201376936"/><line x1="3629.9" y1="1363.2" x2="1102.0" y2="540.6" stroke="#8a8a90" stroke-width="1.3" stroke-opacity="0.8"/><line x1="1102.0" y1="540.6" x2="997.4" y2="506.6" stroke="#8a8a90" stroke-width="1.1" stroke-opacity="0.5"/><line x1="997.4" y1="506.6" x2="910.5" y2="478.3" stroke="#8a8a90" stroke-width="1.0" stroke-opacity="0.28"/><line x1="3723.8" y1="1363.2" x2="1115.4" y2="540.6" stroke="#8a8a90" stroke-width="1.3" stroke-opacity="0.8"/><line x1="1115.4" y1="540.6" x2="1007.5" y2="506.5" stroke="#8a8a90" stroke-width="1.1" stroke-opacity="0.5"/><line x1="1007.5" y1="506.5" x2="917.9" y2="478.3" stroke="#8a8a90" stroke-width="1.0" stroke-opacity="0.28"/><line x1="3817.7" y1="1363.2" x2="1128.8" y2="540.5" stroke="#8a8a90" stroke-width="1.3" stroke-opacity="0.8"/><line x1="1128.8" y1="540.5" x2="1017.7" y2="506.5" stroke="#8a8a90" stroke-width="1.1" stroke-opacity="0.5"/><line x1="1017.7" y1="506.5" x2="925.4" y2="478.3" stroke="#8a8a90" stroke-width="1.0" stroke-opacity="0.28"/><line x1="3911.7" y1="1363.2" x2="1142.1" y2="540.4" stroke="#8a8a90" stroke-width="1.3" stroke-opacity="0.8"/><line x1="1142.1" y1="540.4" x2="1027.8" y2="506.5" stroke="#8a8a90" stroke-width="1.1" stroke-opacity="0.5"/><line x1="1027.8" y1="506.5" x2="932.9" y2="478.2" stroke="#8a8a90" stroke-width="1.0" stroke-opacity="0.28"/><line x1="4005.6" y1="1363.2" x2="1155.5" y2="540.3" stroke="#8a8a90" stroke-width="1.3" stroke-opacity="0.8"/><line x1="1155.5" y1="540.3" x2="1038.0" y2="506.4" stroke="#8a8a90" stroke-width="1.1" stroke-opacity="0.5"/><line x1="1038.0" y1="506.4" x2="940.3" y2="478.2" stroke="#8a8a90" stroke-width="1.0" stroke-opacity="0.28"/><line x1="4099.5" y1="1363.2" x2="1168.8" y2="540.3" stroke="#8a8a90" stroke-width="1.3" stroke-opacity="0.8"/><line x1="1168.8" y1="540.3" x2="1048.1" y2="506.4" stroke="#8a8a90" stroke-width="1.1" stroke-opacity="0.5"/><line x1="1048.1" y1="506.4" x2="947.8" y2="478.2" stroke="#8a8a90" stroke-width="1.0" stroke-opacity="0.28"/><line x1="4193.4" y1="1363.2" x2="1182.1" y2="540.2" stroke="#8a8a90" stroke-width="1.3" stroke-opacity="0.8"/><line x1="1182.1" y1="540.2" x2="1058.3" y2="506.3" stroke="#8a8a90" stroke-width="1.1" stroke-opacity="0.5"/><line x1="1058.3" y1="506.3" x2="955.2" y2="478.2" stroke="#8a8a90" stroke-width="1.0" stroke-opacity="0.28"/><line x1="4287.4" y1="1363.2" x2="1195.4" y2="540.1" stroke="#8a8a90" stroke-width="1.3" stroke-opacity="0.8"/><line x1="1195.4" y1="540.1" x2="1068.4" y2="506.3" stroke="#8a8a90" stroke-width="1.1" stroke-opacity="0.5"/><line x1="1068.4" y1="506.3" x2="962.7" y2="478.1" stroke="#8a8a90" stroke-width="1.0" stroke-opacity="0.28"/><line x1="4381.3" y1="1363.2" x2="1208.7" y2="540.0" stroke="#8a8a90" stroke-width="1.3" stroke-opacity="0.8"/><line x1="1208.7" y1="540.0" x2="1078.5" y2="506.2" stroke="#8a8a90" stroke-width="1.1" stroke-opacity="0.5"/><line x1="1078.5" y1="506.2" x2="970.1" y2="478.1" stroke="#8a8a90" stroke-width="1.0" stroke-opacity="0.28"/><line x1="4475.2" y1="1363.2" x2="952.6" y2="471.8" stroke="#55555c" stroke-width="1.7" stroke-opacity="0.85"/><line x1="952.6" y1="471.8" x2="860.6" y2="448.5" stroke="#55555c" stroke-width="1.6" stroke-opacity="0.6192052980132451"/><line x1="860.6" y1="448.5" x2="794.1" y2="431.7" stroke="#55555c" stroke-width="1.4" stroke-opacity="0.4047619047619047"/><line x1="794.1" y1="431.7" x2="750.2" y2="420.6" stroke="#55555c" stroke-width="1.2" stroke-opacity="0.25900277008310246"/><line x1="750.2" y1="420.6" x2="720.3" y2="413.0" stroke="#55555c" stroke-width="1.0" stroke-opacity="0.16092943201376936"/><line x1="4569.1" y1="1363.2" x2="1235.3" y2="539.9" stroke="#8a8a90" stroke-width="1.3" stroke-opacity="0.8"/><line x1="1235.3" y1="539.9" x2="1098.7" y2="506.2" stroke="#8a8a90" stroke-width="1.1" stroke-opacity="0.5"/><line x1="1098.7" y1="506.2" x2="985.0" y2="478.1" stroke="#8a8a90" stroke-width="1.0" stroke-opacity="0.28"/><line x1="4663.1" y1="1363.2" x2="1248.5" y2="539.8" stroke="#8a8a90" stroke-width="1.3" stroke-opacity="0.8"/><line x1="1248.5" y1="539.8" x2="1108.8" y2="506.1" stroke="#8a8a90" stroke-width="1.1" stroke-opacity="0.5"/><line x1="1108.8" y1="506.1" x2="992.4" y2="478.1" stroke="#8a8a90" stroke-width="1.0" stroke-opacity="0.28"/><line x1="4757.0" y1="1363.2" x2="1261.7" y2="539.7" stroke="#8a8a90" stroke-width="1.3" stroke-opacity="0.8"/><line x1="1261.7" y1="539.7" x2="1118.9" y2="506.1" stroke="#8a8a90" stroke-width="1.1" stroke-opacity="0.5"/><line x1="1118.9" y1="506.1" x2="999.8" y2="478.0" stroke="#8a8a90" stroke-width="1.0" stroke-opacity="0.28"/><line x1="4850.9" y1="1363.2" x2="1275.0" y2="539.7" stroke="#8a8a90" stroke-width="1.3" stroke-opacity="0.8"/><line x1="1275.0" y1="539.7" x2="1128.9" y2="506.0" stroke="#8a8a90" stroke-width="1.1" stroke-opacity="0.5"/><line x1="1128.9" y1="506.0" x2="1007.3" y2="478.0" stroke="#8a8a90" stroke-width="1.0" stroke-opacity="0.28"/><line x1="4944.8" y1="1363.2" x2="1288.2" y2="539.6" stroke="#8a8a90" stroke-width="1.3" stroke-opacity="0.8"/><line x1="1288.2" y1="539.6" x2="1139.0" y2="506.0" stroke="#8a8a90" stroke-width="1.1" stroke-opacity="0.5"/><line x1="1139.0" y1="506.0" x2="1014.7" y2="478.0" stroke="#8a8a90" stroke-width="1.0" stroke-opacity="0.28"/><line x1="5038.8" y1="1363.2" x2="1301.4" y2="539.5" stroke="#8a8a90" stroke-width="1.3" stroke-opacity="0.8"/><line x1="1301.4" y1="539.5" x2="1149.0" y2="505.9" stroke="#8a8a90" stroke-width="1.1" stroke-opacity="0.5"/><line x1="1149.0" y1="505.9" x2="1022.1" y2="478.0" stroke="#8a8a90" stroke-width="1.0" stroke-opacity="0.28"/><line x1="5132.7" y1="1363.2" x2="1314.5" y2="539.4" stroke="#8a8a90" stroke-width="1.3" stroke-opacity="0.8"/><line x1="1314.5" y1="539.4" x2="1159.1" y2="505.9" stroke="#8a8a90" stroke-width="1.1" stroke-opacity="0.5"/><line x1="1159.1" y1="505.9" x2="1029.5" y2="477.9" stroke="#8a8a90" stroke-width="1.0" stroke-opacity="0.28"/><line x1="5226.6" y1="1363.2" x2="1327.7" y2="539.4" stroke="#8a8a90" stroke-width="1.3" stroke-opacity="0.8"/><line x1="1327.7" y1="539.4" x2="1169.1" y2="505.9" stroke="#8a8a90" stroke-width="1.1" stroke-opacity="0.5"/><line x1="1169.1" y1="505.9" x2="1036.9" y2="477.9" stroke="#8a8a90" stroke-width="1.0" stroke-opacity="0.28"/><line x1="5320.6" y1="1363.2" x2="1340.9" y2="539.3" stroke="#8a8a90" stroke-width="1.3" stroke-opacity="0.8"/><line x1="1340.9" y1="539.3" x2="1179.2" y2="505.8" stroke="#8a8a90" stroke-width="1.1" stroke-opacity="0.5"/><line x1="1179.2" y1="505.8" x2="1044.3" y2="477.9" stroke="#8a8a90" stroke-width="1.0" stroke-opacity="0.28"/><line x1="5414.5" y1="1363.2" x2="1020.8" y2="471.6" stroke="#55555c" stroke-width="1.7" stroke-opacity="0.85"/><line x1="1020.8" y1="471.6" x2="906.5" y2="448.4" stroke="#55555c" stroke-width="1.6" stroke-opacity="0.6192052980132451"/><line x1="906.5" y1="448.4" x2="823.9" y2="431.6" stroke="#55555c" stroke-width="1.4" stroke-opacity="0.4047619047619047"/><line x1="823.9" y1="431.6" x2="769.3" y2="420.6" stroke="#55555c" stroke-width="1.2" stroke-opacity="0.25900277008310246"/><line x1="769.3" y1="420.6" x2="731.9" y2="413.0" stroke="#55555c" stroke-width="1.0" stroke-opacity="0.16092943201376936"/><line x1="5508.4" y1="1363.2" x2="1367.1" y2="539.1" stroke="#8a8a90" stroke-width="1.3" stroke-opacity="0.8"/><line x1="1367.1" y1="539.1" x2="1199.2" y2="505.7" stroke="#8a8a90" stroke-width="1.1" stroke-opacity="0.5"/><line x1="1199.2" y1="505.7" x2="1059.1" y2="477.9" stroke="#8a8a90" stroke-width="1.0" stroke-opacity="0.28"/><line x1="5602.3" y1="1363.2" x2="1380.2" y2="539.1" stroke="#8a8a90" stroke-width="1.3" stroke-opacity="0.8"/><line x1="1380.2" y1="539.1" x2="1209.2" y2="505.7" stroke="#8a8a90" stroke-width="1.1" stroke-opacity="0.5"/><line x1="1209.2" y1="505.7" x2="1066.5" y2="477.8" stroke="#8a8a90" stroke-width="1.0" stroke-opacity="0.28"/><line x1="5696.3" y1="1363.2" x2="1393.3" y2="539.0" stroke="#8a8a90" stroke-width="1.3" stroke-opacity="0.8"/><line x1="1393.3" y1="539.0" x2="1219.2" y2="505.6" stroke="#8a8a90" stroke-width="1.1" stroke-opacity="0.5"/><line x1="1219.2" y1="505.6" x2="1073.8" y2="477.8" stroke="#8a8a90" stroke-width="1.0" stroke-opacity="0.28"/><line x1="5790.2" y1="1363.2" x2="1406.4" y2="538.9" stroke="#8a8a90" stroke-width="1.3" stroke-opacity="0.8"/><line x1="1406.4" y1="538.9" x2="1229.2" y2="505.6" stroke="#8a8a90" stroke-width="1.1" stroke-opacity="0.5"/><line x1="1229.2" y1="505.6" x2="1081.2" y2="477.8" stroke="#8a8a90" stroke-width="1.0" stroke-opacity="0.28"/><line x1="1419.5" y1="538.9" x2="1239.2" y2="505.6" stroke="#8a8a90" stroke-width="1.1" stroke-opacity="0.5"/><line x1="1239.2" y1="505.6" x2="1088.6" y2="477.8" stroke="#8a8a90" stroke-width="1.0" stroke-opacity="0.28"/><line x1="1432.5" y1="538.8" x2="1249.2" y2="505.5" stroke="#8a8a90" stroke-width="1.1" stroke-opacity="0.5"/><line x1="1249.2" y1="505.5" x2="1096.0" y2="477.7" stroke="#8a8a90" stroke-width="1.0" stroke-opacity="0.28"/><line x1="1445.6" y1="538.7" x2="1259.1" y2="505.5" stroke="#8a8a90" stroke-width="1.1" stroke-opacity="0.5"/><line x1="1259.1" y1="505.5" x2="1103.3" y2="477.7" stroke="#8a8a90" stroke-width="1.0" stroke-opacity="0.28"/><line x1="1458.6" y1="538.6" x2="1269.1" y2="505.4" stroke="#8a8a90" stroke-width="1.1" stroke-opacity="0.5"/><line x1="1269.1" y1="505.4" x2="1110.7" y2="477.7" stroke="#8a8a90" stroke-width="1.0" stroke-opacity="0.28"/><line x1="1471.6" y1="538.6" x2="1279.0" y2="505.4" stroke="#8a8a90" stroke-width="1.1" stroke-opacity="0.5"/><line x1="1279.0" y1="505.4" x2="1118.0" y2="477.7" stroke="#8a8a90" stroke-width="1.0" stroke-opacity="0.28"/><line x1="6353.7" y1="1363.2" x2="1088.6" y2="471.4" stroke="#55555c" stroke-width="1.7" stroke-opacity="0.85"/><line x1="1088.6" y1="471.4" x2="952.3" y2="448.3" stroke="#55555c" stroke-width="1.6" stroke-opacity="0.6192052980132451"/><line x1="952.3" y1="448.3" x2="853.6" y2="431.6" stroke="#55555c" stroke-width="1.4" stroke-opacity="0.4047619047619047"/><line x1="853.6" y1="431.6" x2="788.3" y2="420.5" stroke="#55555c" stroke-width="1.2" stroke-opacity="0.25900277008310246"/><line x1="788.3" y1="420.5" x2="743.6" y2="413.0" stroke="#55555c" stroke-width="1.0" stroke-opacity="0.16092943201376936"/><line x1="1497.6" y1="538.4" x2="1298.9" y2="505.3" stroke="#8a8a90" stroke-width="1.1" stroke-opacity="0.5"/><line x1="1298.9" y1="505.3" x2="1132.7" y2="477.6" stroke="#8a8a90" stroke-width="1.0" stroke-opacity="0.28"/><line x1="1510.6" y1="538.3" x2="1308.8" y2="505.3" stroke="#8a8a90" stroke-width="1.1" stroke-opacity="0.5"/><line x1="1308.8" y1="505.3" x2="1140.1" y2="477.6" stroke="#8a8a90" stroke-width="1.0" stroke-opacity="0.28"/><line x1="1523.5" y1="538.3" x2="1318.8" y2="505.2" stroke="#8a8a90" stroke-width="1.1" stroke-opacity="0.5"/><line x1="1318.8" y1="505.2" x2="1147.4" y2="477.6" stroke="#8a8a90" stroke-width="1.0" stroke-opacity="0.28"/><line x1="1536.5" y1="538.2" x2="1328.7" y2="505.2" stroke="#8a8a90" stroke-width="1.1" stroke-opacity="0.5"/><line x1="1328.7" y1="505.2" x2="1154.8" y2="477.6" stroke="#8a8a90" stroke-width="1.0" stroke-opacity="0.28"/><line x1="1549.4" y1="538.1" x2="1338.6" y2="505.1" stroke="#8a8a90" stroke-width="1.1" stroke-opacity="0.5"/><line x1="1338.6" y1="505.1" x2="1162.1" y2="477.5" stroke="#8a8a90" stroke-width="1.0" stroke-opacity="0.28"/><line x1="1562.3" y1="538.1" x2="1348.5" y2="505.1" stroke="#8a8a90" stroke-width="1.1" stroke-opacity="0.5"/><line x1="1348.5" y1="505.1" x2="1169.4" y2="477.5" stroke="#8a8a90" stroke-width="1.0" stroke-opacity="0.28"/><line x1="1575.2" y1="538.0" x2="1358.4" y2="505.1" stroke="#8a8a90" stroke-width="1.1" stroke-opacity="0.5"/><line x1="1358.4" y1="505.1" x2="1176.7" y2="477.5" stroke="#8a8a90" stroke-width="1.0" stroke-opacity="0.28"/><line x1="1588.1" y1="537.9" x2="1368.2" y2="505.0" stroke="#8a8a90" stroke-width="1.1" stroke-opacity="0.5"/><line x1="1368.2" y1="505.0" x2="1184.0" y2="477.5" stroke="#8a8a90" stroke-width="1.0" stroke-opacity="0.28"/><line x1="1601.0" y1="537.8" x2="1378.1" y2="505.0" stroke="#8a8a90" stroke-width="1.1" stroke-opacity="0.5"/><line x1="1378.1" y1="505.0" x2="1191.4" y2="477.4" stroke="#8a8a90" stroke-width="1.0" stroke-opacity="0.28"/><line x1="7293.0" y1="1363.2" x2="1156.0" y2="471.2" stroke="#55555c" stroke-width="1.7" stroke-opacity="0.85"/><line x1="1156.0" y1="471.2" x2="997.9" y2="448.2" stroke="#55555c" stroke-width="1.6" stroke-opacity="0.6192052980132451"/><line x1="997.9" y1="448.2" x2="883.2" y2="431.6" stroke="#55555c" stroke-width="1.4" stroke-opacity="0.4047619047619047"/><line x1="883.2" y1="431.6" x2="807.3" y2="420.5" stroke="#55555c" stroke-width="1.2" stroke-opacity="0.25900277008310246"/><line x1="807.3" y1="420.5" x2="755.3" y2="413.0" stroke="#55555c" stroke-width="1.0" stroke-opacity="0.16092943201376936"/><line x1="1626.7" y1="537.7" x2="1397.8" y2="504.9" stroke="#8a8a90" stroke-width="1.1" stroke-opacity="0.5"/><line x1="1397.8" y1="504.9" x2="1206.0" y2="477.4" stroke="#8a8a90" stroke-width="1.0" stroke-opacity="0.28"/><line x1="1639.5" y1="537.6" x2="1407.7" y2="504.9" stroke="#8a8a90" stroke-width="1.1" stroke-opacity="0.5"/><line x1="1407.7" y1="504.9" x2="1213.3" y2="477.4" stroke="#8a8a90" stroke-width="1.0" stroke-opacity="0.28"/><line x1="1417.5" y1="504.8" x2="1220.6" y2="477.4" stroke="#8a8a90" stroke-width="1.0" stroke-opacity="0.28"/><line x1="1427.3" y1="504.8" x2="1227.8" y2="477.3" stroke="#8a8a90" stroke-width="1.0" stroke-opacity="0.28"/><line x1="1437.2" y1="504.7" x2="1235.1" y2="477.3" stroke="#8a8a90" stroke-width="1.0" stroke-opacity="0.28"/><line x1="1447.0" y1="504.7" x2="1242.4" y2="477.3" stroke="#8a8a90" stroke-width="1.0" stroke-opacity="0.28"/><line x1="1456.8" y1="504.6" x2="1249.7" y2="477.3" stroke="#8a8a90" stroke-width="1.0" stroke-opacity="0.28"/><line x1="1466.6" y1="504.6" x2="1257.0" y2="477.2" stroke="#8a8a90" stroke-width="1.0" stroke-opacity="0.28"/><line x1="1476.4" y1="504.6" x2="1264.2" y2="477.2" stroke="#8a8a90" stroke-width="1.0" stroke-opacity="0.28"/><line x1="8232.3" y1="1363.2" x2="1223.1" y2="471.0" stroke="#55555c" stroke-width="1.7" stroke-opacity="0.85"/><line x1="1223.1" y1="471.0" x2="1043.3" y2="448.2" stroke="#55555c" stroke-width="1.6" stroke-opacity="0.6192052980132451"/><line x1="1043.3" y1="448.2" x2="912.7" y2="431.5" stroke="#55555c" stroke-width="1.4" stroke-opacity="0.4047619047619047"/><line x1="912.7" y1="431.5" x2="826.2" y2="420.5" stroke="#55555c" stroke-width="1.2" stroke-opacity="0.25900277008310246"/><line x1="826.2" y1="420.5" x2="766.9" y2="413.0" stroke="#55555c" stroke-width="1.0" stroke-opacity="0.16092943201376936"/><line x1="1495.9" y1="504.5" x2="1278.8" y2="477.2" stroke="#8a8a90" stroke-width="1.0" stroke-opacity="0.28"/><line x1="1505.7" y1="504.4" x2="1286.0" y2="477.2" stroke="#8a8a90" stroke-width="1.0" stroke-opacity="0.28"/><line x1="1515.5" y1="504.4" x2="1293.3" y2="477.1" stroke="#8a8a90" stroke-width="1.0" stroke-opacity="0.28"/><line x1="1525.2" y1="504.4" x2="1300.5" y2="477.1" stroke="#8a8a90" stroke-width="1.0" stroke-opacity="0.28"/><line x1="1535.0" y1="504.3" x2="1307.8" y2="477.1" stroke="#8a8a90" stroke-width="1.0" stroke-opacity="0.28"/><line x1="1544.7" y1="504.3" x2="1315.0" y2="477.1" stroke="#8a8a90" stroke-width="1.0" stroke-opacity="0.28"/><line x1="1554.4" y1="504.2" x2="1322.2" y2="477.0" stroke="#8a8a90" stroke-width="1.0" stroke-opacity="0.28"/><line x1="1564.2" y1="504.2" x2="1329.5" y2="477.0" stroke="#8a8a90" stroke-width="1.0" stroke-opacity="0.28"/><line x1="1573.9" y1="504.2" x2="1336.7" y2="477.0" stroke="#8a8a90" stroke-width="1.0" stroke-opacity="0.28"/><line x1="9171.5" y1="1363.2" x2="1289.8" y2="470.8" stroke="#55555c" stroke-width="1.7" stroke-opacity="0.85"/><line x1="1289.8" y1="470.8" x2="1088.6" y2="448.1" stroke="#55555c" stroke-width="1.6" stroke-opacity="0.6192052980132451"/><line x1="1088.6" y1="448.1" x2="942.2" y2="431.5" stroke="#55555c" stroke-width="1.4" stroke-opacity="0.4047619047619047"/><line x1="942.2" y1="431.5" x2="845.2" y2="420.5" stroke="#55555c" stroke-width="1.2" stroke-opacity="0.25900277008310246"/><line x1="845.2" y1="420.5" x2="778.5" y2="413.0" stroke="#55555c" stroke-width="1.0" stroke-opacity="0.16092943201376936"/><line x1="1593.3" y1="504.1" x2="1351.1" y2="477.0" stroke="#8a8a90" stroke-width="1.0" stroke-opacity="0.28"/><line x1="1603.0" y1="504.0" x2="1358.3" y2="476.9" stroke="#8a8a90" stroke-width="1.0" stroke-opacity="0.28"/><line x1="1612.7" y1="504.0" x2="1365.5" y2="476.9" stroke="#8a8a90" stroke-width="1.0" stroke-opacity="0.28"/><line x1="1622.3" y1="503.9" x2="1372.8" y2="476.9" stroke="#8a8a90" stroke-width="1.0" stroke-opacity="0.28"/><line x1="1632.0" y1="503.9" x2="1380.0" y2="476.9" stroke="#8a8a90" stroke-width="1.0" stroke-opacity="0.28"/><line x1="1641.7" y1="503.9" x2="1387.1" y2="476.8" stroke="#8a8a90" stroke-width="1.0" stroke-opacity="0.28"/><line x1="1651.3" y1="503.8" x2="1394.3" y2="476.8" stroke="#8a8a90" stroke-width="1.0" stroke-opacity="0.28"/><line x1="1661.0" y1="503.8" x2="1401.5" y2="476.8" stroke="#8a8a90" stroke-width="1.0" stroke-opacity="0.28"/><line x1="1670.6" y1="503.7" x2="1408.7" y2="476.8" stroke="#8a8a90" stroke-width="1.0" stroke-opacity="0.28"/><line x1="10110.8" y1="1363.2" x2="1356.1" y2="470.7" stroke="#55555c" stroke-width="1.7" stroke-opacity="0.85"/><line x1="1356.1" y1="470.7" x2="1133.7" y2="448.0" stroke="#55555c" stroke-width="1.6" stroke-opacity="0.6192052980132451"/><line x1="1133.7" y1="448.0" x2="971.6" y2="431.5" stroke="#55555c" stroke-width="1.4" stroke-opacity="0.4047619047619047"/><line x1="971.6" y1="431.5" x2="864.1" y2="420.5" stroke="#55555c" stroke-width="1.2" stroke-opacity="0.25900277008310246"/><line x1="864.1" y1="420.5" x2="790.2" y2="413.0" stroke="#55555c" stroke-width="1.0" stroke-opacity="0.16092943201376936"/><line x1="1422.1" y1="470.5" x2="1178.7" y2="447.9" stroke="#55555c" stroke-width="1.6" stroke-opacity="0.6192052980132451"/><line x1="1178.7" y1="447.9" x2="1001.0" y2="431.4" stroke="#55555c" stroke-width="1.4" stroke-opacity="0.4047619047619047"/><line x1="1001.0" y1="431.4" x2="882.9" y2="420.5" stroke="#55555c" stroke-width="1.2" stroke-opacity="0.25900277008310246"/><line x1="882.9" y1="420.5" x2="801.8" y2="413.0" stroke="#55555c" stroke-width="1.0" stroke-opacity="0.16092943201376936"/><line x1="1487.7" y1="470.3" x2="1223.4" y2="447.8" stroke="#55555c" stroke-width="1.6" stroke-opacity="0.6192052980132451"/><line x1="1223.4" y1="447.8" x2="1030.3" y2="431.4" stroke="#55555c" stroke-width="1.4" stroke-opacity="0.4047619047619047"/><line x1="1030.3" y1="431.4" x2="901.8" y2="420.5" stroke="#55555c" stroke-width="1.2" stroke-opacity="0.25900277008310246"/><line x1="901.8" y1="420.5" x2="813.4" y2="412.9" stroke="#55555c" stroke-width="1.0" stroke-opacity="0.16092943201376936"/><line x1="1553.0" y1="470.1" x2="1268.1" y2="447.7" stroke="#55555c" stroke-width="1.6" stroke-opacity="0.6192052980132451"/><line x1="1268.1" y1="447.7" x2="1059.5" y2="431.4" stroke="#55555c" stroke-width="1.4" stroke-opacity="0.4047619047619047"/><line x1="1059.5" y1="431.4" x2="920.6" y2="420.4" stroke="#55555c" stroke-width="1.2" stroke-opacity="0.25900277008310246"/><line x1="920.6" y1="420.4" x2="825.0" y2="412.9" stroke="#55555c" stroke-width="1.0" stroke-opacity="0.16092943201376936"/><line x1="1618.0" y1="469.9" x2="1312.5" y2="447.6" stroke="#55555c" stroke-width="1.6" stroke-opacity="0.6192052980132451"/><line x1="1312.5" y1="447.6" x2="1088.6" y2="431.3" stroke="#55555c" stroke-width="1.4" stroke-opacity="0.4047619047619047"/><line x1="1088.6" y1="431.3" x2="939.4" y2="420.4" stroke="#55555c" stroke-width="1.2" stroke-opacity="0.25900277008310246"/><line x1="939.4" y1="420.4" x2="836.5" y2="412.9" stroke="#55555c" stroke-width="1.0" stroke-opacity="0.16092943201376936"/><line x1="1682.6" y1="469.7" x2="1356.8" y2="447.6" stroke="#55555c" stroke-width="1.6" stroke-opacity="0.6192052980132451"/><line x1="1356.8" y1="447.6" x2="1117.7" y2="431.3" stroke="#55555c" stroke-width="1.4" stroke-opacity="0.4047619047619047"/><line x1="1117.7" y1="431.3" x2="958.1" y2="420.4" stroke="#55555c" stroke-width="1.2" stroke-opacity="0.25900277008310246"/><line x1="958.1" y1="420.4" x2="848.1" y2="412.9" stroke="#55555c" stroke-width="1.0" stroke-opacity="0.16092943201376936"/><line x1="1746.8" y1="469.6" x2="1401.0" y2="447.5" stroke="#55555c" stroke-width="1.6" stroke-opacity="0.6192052980132451"/><line x1="1401.0" y1="447.5" x2="1146.7" y2="431.2" stroke="#55555c" stroke-width="1.4" stroke-opacity="0.4047619047619047"/><line x1="1146.7" y1="431.2" x2="976.8" y2="420.4" stroke="#55555c" stroke-width="1.2" stroke-opacity="0.25900277008310246"/><line x1="976.8" y1="420.4" x2="859.7" y2="412.9" stroke="#55555c" stroke-width="1.0" stroke-opacity="0.16092943201376936"/><line x1="1445.0" y1="447.4" x2="1175.6" y2="431.2" stroke="#55555c" stroke-width="1.4" stroke-opacity="0.4047619047619047"/><line x1="1175.6" y1="431.2" x2="995.5" y2="420.4" stroke="#55555c" stroke-width="1.2" stroke-opacity="0.25900277008310246"/><line x1="995.5" y1="420.4" x2="871.2" y2="412.9" stroke="#55555c" stroke-width="1.0" stroke-opacity="0.16092943201376936"/><line x1="1488.8" y1="447.3" x2="1204.5" y2="431.2" stroke="#55555c" stroke-width="1.4" stroke-opacity="0.4047619047619047"/><line x1="1204.5" y1="431.2" x2="1014.2" y2="420.4" stroke="#55555c" stroke-width="1.2" stroke-opacity="0.25900277008310246"/><line x1="1014.2" y1="420.4" x2="882.7" y2="412.9" stroke="#55555c" stroke-width="1.0" stroke-opacity="0.16092943201376936"/><line x1="1532.5" y1="447.2" x2="1233.3" y2="431.1" stroke="#55555c" stroke-width="1.4" stroke-opacity="0.4047619047619047"/><line x1="1233.3" y1="431.1" x2="1032.9" y2="420.4" stroke="#55555c" stroke-width="1.2" stroke-opacity="0.25900277008310246"/><line x1="1032.9" y1="420.4" x2="894.3" y2="412.9" stroke="#55555c" stroke-width="1.0" stroke-opacity="0.16092943201376936"/><line x1="1576.0" y1="447.1" x2="1262.0" y2="431.1" stroke="#55555c" stroke-width="1.4" stroke-opacity="0.4047619047619047"/><line x1="1262.0" y1="431.1" x2="1051.5" y2="420.3" stroke="#55555c" stroke-width="1.2" stroke-opacity="0.25900277008310246"/><line x1="1051.5" y1="420.3" x2="905.8" y2="412.9" stroke="#55555c" stroke-width="1.0" stroke-opacity="0.16092943201376936"/><line x1="1619.4" y1="447.1" x2="1290.7" y2="431.1" stroke="#55555c" stroke-width="1.4" stroke-opacity="0.4047619047619047"/><line x1="1290.7" y1="431.1" x2="1070.1" y2="420.3" stroke="#55555c" stroke-width="1.2" stroke-opacity="0.25900277008310246"/><line x1="1070.1" y1="420.3" x2="917.3" y2="412.9" stroke="#55555c" stroke-width="1.0" stroke-opacity="0.16092943201376936"/><line x1="1662.6" y1="447.0" x2="1319.3" y2="431.0" stroke="#55555c" stroke-width="1.4" stroke-opacity="0.4047619047619047"/><line x1="1319.3" y1="431.0" x2="1088.6" y2="420.3" stroke="#55555c" stroke-width="1.2" stroke-opacity="0.25900277008310246"/><line x1="1088.6" y1="420.3" x2="928.8" y2="412.9" stroke="#55555c" stroke-width="1.0" stroke-opacity="0.16092943201376936"/><line x1="1705.6" y1="446.9" x2="1347.9" y2="431.0" stroke="#55555c" stroke-width="1.4" stroke-opacity="0.4047619047619047"/><line x1="1347.9" y1="431.0" x2="1107.1" y2="420.3" stroke="#55555c" stroke-width="1.2" stroke-opacity="0.25900277008310246"/><line x1="1107.1" y1="420.3" x2="940.3" y2="412.9" stroke="#55555c" stroke-width="1.0" stroke-opacity="0.16092943201376936"/><line x1="1748.5" y1="446.8" x2="1376.3" y2="431.0" stroke="#55555c" stroke-width="1.4" stroke-opacity="0.4047619047619047"/><line x1="1376.3" y1="431.0" x2="1125.7" y2="420.3" stroke="#55555c" stroke-width="1.2" stroke-opacity="0.25900277008310246"/><line x1="1125.7" y1="420.3" x2="951.7" y2="412.9" stroke="#55555c" stroke-width="1.0" stroke-opacity="0.16092943201376936"/><line x1="1791.3" y1="446.7" x2="1404.7" y2="430.9" stroke="#55555c" stroke-width="1.4" stroke-opacity="0.4047619047619047"/><line x1="1404.7" y1="430.9" x2="1144.1" y2="420.3" stroke="#55555c" stroke-width="1.2" stroke-opacity="0.25900277008310246"/><line x1="1144.1" y1="420.3" x2="963.2" y2="412.9" stroke="#55555c" stroke-width="1.0" stroke-opacity="0.16092943201376936"/><line x1="1433.1" y1="430.9" x2="1162.6" y2="420.3" stroke="#55555c" stroke-width="1.2" stroke-opacity="0.25900277008310246"/><line x1="1162.6" y1="420.3" x2="974.7" y2="412.9" stroke="#55555c" stroke-width="1.0" stroke-opacity="0.16092943201376936"/><line x1="1461.4" y1="430.9" x2="1181.0" y2="420.2" stroke="#55555c" stroke-width="1.2" stroke-opacity="0.25900277008310246"/><line x1="1181.0" y1="420.2" x2="986.1" y2="412.9" stroke="#55555c" stroke-width="1.0" stroke-opacity="0.16092943201376936"/><line x1="1489.6" y1="430.8" x2="1199.4" y2="420.2" stroke="#55555c" stroke-width="1.2" stroke-opacity="0.25900277008310246"/><line x1="1199.4" y1="420.2" x2="997.5" y2="412.9" stroke="#55555c" stroke-width="1.0" stroke-opacity="0.16092943201376936"/><line x1="1517.7" y1="430.8" x2="1217.8" y2="420.2" stroke="#55555c" stroke-width="1.2" stroke-opacity="0.25900277008310246"/><line x1="1217.8" y1="420.2" x2="1009.0" y2="412.9" stroke="#55555c" stroke-width="1.0" stroke-opacity="0.16092943201376936"/><line x1="1545.8" y1="430.8" x2="1236.1" y2="420.2" stroke="#55555c" stroke-width="1.2" stroke-opacity="0.25900277008310246"/><line x1="1236.1" y1="420.2" x2="1020.4" y2="412.8" stroke="#55555c" stroke-width="1.0" stroke-opacity="0.16092943201376936"/><line x1="1573.8" y1="430.7" x2="1254.4" y2="420.2" stroke="#55555c" stroke-width="1.2" stroke-opacity="0.25900277008310246"/><line x1="1254.4" y1="420.2" x2="1031.8" y2="412.8" stroke="#55555c" stroke-width="1.0" stroke-opacity="0.16092943201376936"/><line x1="1601.8" y1="430.7" x2="1272.7" y2="420.2" stroke="#55555c" stroke-width="1.2" stroke-opacity="0.25900277008310246"/><line x1="1272.7" y1="420.2" x2="1043.2" y2="412.8" stroke="#55555c" stroke-width="1.0" stroke-opacity="0.16092943201376936"/><line x1="1629.7" y1="430.7" x2="1291.0" y2="420.2" stroke="#55555c" stroke-width="1.2" stroke-opacity="0.25900277008310246"/><line x1="1291.0" y1="420.2" x2="1054.5" y2="412.8" stroke="#55555c" stroke-width="1.0" stroke-opacity="0.16092943201376936"/><line x1="1657.5" y1="430.6" x2="1309.2" y2="420.1" stroke="#55555c" stroke-width="1.2" stroke-opacity="0.25900277008310246"/><line x1="1309.2" y1="420.1" x2="1065.9" y2="412.8" stroke="#55555c" stroke-width="1.0" stroke-opacity="0.16092943201376936"/><line x1="1685.2" y1="430.6" x2="1327.4" y2="420.1" stroke="#55555c" stroke-width="1.2" stroke-opacity="0.25900277008310246"/><line x1="1327.4" y1="420.1" x2="1077.3" y2="412.8" stroke="#55555c" stroke-width="1.0" stroke-opacity="0.16092943201376936"/><line x1="1712.9" y1="430.6" x2="1345.6" y2="420.1" stroke="#55555c" stroke-width="1.2" stroke-opacity="0.25900277008310246"/><line x1="1345.6" y1="420.1" x2="1088.6" y2="412.8" stroke="#55555c" stroke-width="1.0" stroke-opacity="0.16092943201376936"/><line x1="1740.6" y1="430.5" x2="1363.7" y2="420.1" stroke="#55555c" stroke-width="1.2" stroke-opacity="0.25900277008310246"/><line x1="1363.7" y1="420.1" x2="1100.0" y2="412.8" stroke="#55555c" stroke-width="1.0" stroke-opacity="0.16092943201376936"/><line x1="1768.2" y1="430.5" x2="1381.9" y2="420.1" stroke="#55555c" stroke-width="1.2" stroke-opacity="0.25900277008310246"/><line x1="1381.9" y1="420.1" x2="1111.3" y2="412.8" stroke="#55555c" stroke-width="1.0" stroke-opacity="0.16092943201376936"/><line x1="1795.7" y1="430.5" x2="1400.0" y2="420.1" stroke="#55555c" stroke-width="1.2" stroke-opacity="0.25900277008310246"/><line x1="1400.0" y1="420.1" x2="1122.6" y2="412.8" stroke="#55555c" stroke-width="1.0" stroke-opacity="0.16092943201376936"/><line x1="1418.0" y1="420.1" x2="1133.9" y2="412.8" stroke="#55555c" stroke-width="1.0" stroke-opacity="0.16092943201376936"/><line x1="-50.0" y1="1017.0" x2="1455.0" y2="981.4" stroke="#8a8a90" stroke-width="1.3" stroke-opacity="0.8"/><line x1="-50.0" y1="979.7" x2="1455.0" y2="946.3" stroke="#8a8a90" stroke-width="1.3" stroke-opacity="0.8"/><line x1="-50.0" y1="946.8" x2="1455.0" y2="915.3" stroke="#8a8a90" stroke-width="1.3" stroke-opacity="0.8"/><line x1="-50.0" y1="917.3" x2="1455.0" y2="887.5" stroke="#8a8a90" stroke-width="1.3" stroke-opacity="0.8"/><line x1="-50.0" y1="890.9" x2="1455.0" y2="862.7" stroke="#8a8a90" stroke-width="1.3" stroke-opacity="0.8"/><line x1="-50.0" y1="867.1" x2="1455.0" y2="840.2" stroke="#8a8a90" stroke-width="1.3" stroke-opacity="0.8"/><line x1="-50.0" y1="845.5" x2="1455.0" y2="819.8" stroke="#8a8a90" stroke-width="1.3" stroke-opacity="0.8"/><line x1="-50.0" y1="825.7" x2="1455.0" y2="801.2" stroke="#55555c" stroke-width="1.7" stroke-opacity="0.85"/><line x1="-50.0" y1="807.7" x2="1455.0" y2="784.2" stroke="#8a8a90" stroke-width="1.3" stroke-opacity="0.8"/><line x1="-50.0" y1="791.1" x2="1455.0" y2="768.6" stroke="#8a8a90" stroke-width="1.3" stroke-opacity="0.8"/><line x1="-50.0" y1="775.9" x2="1455.0" y2="754.2" stroke="#8a8a90" stroke-width="1.3" stroke-opacity="0.8"/><line x1="-50.0" y1="761.8" x2="1455.0" y2="740.9" stroke="#8a8a90" stroke-width="1.3" stroke-opacity="0.8"/><line x1="-50.0" y1="748.7" x2="1455.0" y2="728.6" stroke="#8a8a90" stroke-width="1.3" stroke-opacity="0.8"/><line x1="-50.0" y1="736.5" x2="1455.0" y2="717.1" stroke="#8a8a90" stroke-width="1.3" stroke-opacity="0.8"/><line x1="-50.0" y1="725.1" x2="1455.0" y2="706.4" stroke="#8a8a90" stroke-width="1.3" stroke-opacity="0.8"/><line x1="-50.0" y1="714.5" x2="1455.0" y2="696.4" stroke="#8a8a90" stroke-width="1.3" stroke-opacity="0.8"/><line x1="-50.0" y1="704.6" x2="1455.0" y2="687.1" stroke="#8a8a90" stroke-width="1.3" stroke-opacity="0.8"/><line x1="-50.0" y1="695.2" x2="1455.0" y2="678.3" stroke="#55555c" stroke-width="1.7" stroke-opacity="0.85"/><line x1="-50.0" y1="686.5" x2="1455.0" y2="670.0" stroke="#8a8a90" stroke-width="1.3" stroke-opacity="0.8"/><line x1="-50.0" y1="678.2" x2="1455.0" y2="662.2" stroke="#8a8a90" stroke-width="1.3" stroke-opacity="0.8"/><line x1="-50.0" y1="670.4" x2="1455.0" y2="654.9" stroke="#8a8a90" stroke-width="1.3" stroke-opacity="0.8"/><line x1="-50.0" y1="663.0" x2="1455.0" y2="647.9" stroke="#8a8a90" stroke-width="1.3" stroke-opacity="0.8"/><line x1="-50.0" y1="656.1" x2="1455.0" y2="641.3" stroke="#8a8a90" stroke-width="1.3" stroke-opacity="0.8"/><line x1="-50.0" y1="649.5" x2="1455.0" y2="635.1" stroke="#8a8a90" stroke-width="1.3" stroke-opacity="0.8"/><line x1="-50.0" y1="643.2" x2="1455.0" y2="629.2" stroke="#8a8a90" stroke-width="1.3" stroke-opacity="0.8"/><line x1="-50.0" y1="637.2" x2="1455.0" y2="623.6" stroke="#8a8a90" stroke-width="1.3" stroke-opacity="0.8"/><line x1="-50.0" y1="631.5" x2="1455.0" y2="618.2" stroke="#8a8a90" stroke-width="1.3" stroke-opacity="0.8"/><line x1="-50.0" y1="626.1" x2="1455.0" y2="613.1" stroke="#55555c" stroke-width="1.7" stroke-opacity="0.85"/><line x1="-50.0" y1="620.9" x2="1455.0" y2="608.2" stroke="#8a8a90" stroke-width="1.3" stroke-opacity="0.8"/><line x1="-50.0" y1="616.0" x2="1455.0" y2="603.6" stroke="#8a8a90" stroke-width="1.3" stroke-opacity="0.8"/><line x1="-50.0" y1="611.3" x2="1455.0" y2="599.1" stroke="#8a8a90" stroke-width="1.3" stroke-opacity="0.8"/><line x1="-50.0" y1="606.8" x2="1455.0" y2="594.9" stroke="#8a8a90" stroke-width="1.3" stroke-opacity="0.8"/><line x1="-50.0" y1="602.4" x2="1455.0" y2="590.8" stroke="#8a8a90" stroke-width="1.3" stroke-opacity="0.8"/><line x1="-50.0" y1="598.3" x2="1455.0" y2="586.9" stroke="#8a8a90" stroke-width="1.3" stroke-opacity="0.8"/><line x1="-50.0" y1="594.3" x2="1455.0" y2="583.1" stroke="#8a8a90" stroke-width="1.3" stroke-opacity="0.8"/><line x1="-50.0" y1="590.5" x2="1455.0" y2="579.5" stroke="#8a8a90" stroke-width="1.3" stroke-opacity="0.8"/><line x1="-50.0" y1="586.8" x2="1455.0" y2="576.1" stroke="#8a8a90" stroke-width="1.3" stroke-opacity="0.8"/><line x1="-50.0" y1="583.3" x2="1455.0" y2="572.7" stroke="#55555c" stroke-width="1.7" stroke-opacity="0.85"/><line x1="-50.0" y1="579.9" x2="1455.0" y2="569.5" stroke="#8a8a90" stroke-width="1.3" stroke-opacity="0.8"/><line x1="-50.0" y1="576.6" x2="1455.0" y2="566.4" stroke="#8a8a90" stroke-width="1.0" stroke-opacity="0.5"/><line x1="-50.0" y1="573.4" x2="1455.0" y2="563.5" stroke="#8a8a90" stroke-width="1.0" stroke-opacity="0.5"/><line x1="-50.0" y1="570.4" x2="1455.0" y2="560.6" stroke="#8a8a90" stroke-width="1.0" stroke-opacity="0.5"/><line x1="-50.0" y1="567.4" x2="1455.0" y2="557.8" stroke="#8a8a90" stroke-width="1.0" stroke-opacity="0.5"/><line x1="-50.0" y1="564.6" x2="1455.0" y2="555.1" stroke="#8a8a90" stroke-width="1.0" stroke-opacity="0.5"/><line x1="-50.0" y1="561.8" x2="1455.0" y2="552.5" stroke="#8a8a90" stroke-width="1.0" stroke-opacity="0.5"/><line x1="-50.0" y1="559.2" x2="1455.0" y2="550.0" stroke="#8a8a90" stroke-width="1.0" stroke-opacity="0.5"/><line x1="-50.0" y1="556.6" x2="1455.0" y2="547.6" stroke="#8a8a90" stroke-width="1.0" stroke-opacity="0.5"/><line x1="-50.0" y1="554.1" x2="1455.0" y2="545.3" stroke="#55555c" stroke-width="1.7" stroke-opacity="0.85"/><line x1="-50.0" y1="551.7" x2="1455.0" y2="543.0" stroke="#8a8a90" stroke-width="1.0" stroke-opacity="0.5"/><line x1="-50.0" y1="549.4" x2="1455.0" y2="540.8" stroke="#8a8a90" stroke-width="1.0" stroke-opacity="0.5"/><line x1="-50.0" y1="547.1" x2="1455.0" y2="538.7" stroke="#8a8a90" stroke-width="1.0" stroke-opacity="0.5"/><line x1="-50.0" y1="544.9" x2="1455.0" y2="536.6" stroke="#8a8a90" stroke-width="1.0" stroke-opacity="0.5"/><line x1="-50.0" y1="542.8" x2="1455.0" y2="534.6" stroke="#8a8a90" stroke-width="1.0" stroke-opacity="0.5"/><line x1="-50.0" y1="540.7" x2="1455.0" y2="532.7" stroke="#8a8a90" stroke-width="1.0" stroke-opacity="0.5"/><line x1="-50.0" y1="538.7" x2="1455.0" y2="530.8" stroke="#8a8a90" stroke-width="1.0" stroke-opacity="0.5"/><line x1="-50.0" y1="536.8" x2="1455.0" y2="528.9" stroke="#8a8a90" stroke-width="1.0" stroke-opacity="0.5"/><line x1="-50.0" y1="534.9" x2="1455.0" y2="527.1" stroke="#8a8a90" stroke-width="1.0" stroke-opacity="0.5"/><line x1="-50.0" y1="533.0" x2="1455.0" y2="525.4" stroke="#55555c" stroke-width="1.7" stroke-opacity="0.85"/><line x1="-50.0" y1="531.2" x2="1455.0" y2="523.7" stroke="#8a8a90" stroke-width="1.0" stroke-opacity="0.5"/><line x1="-50.0" y1="529.5" x2="1455.0" y2="522.1" stroke="#8a8a90" stroke-width="1.0" stroke-opacity="0.5"/><line x1="-50.0" y1="527.8" x2="1455.0" y2="520.5" stroke="#8a8a90" stroke-width="1.0" stroke-opacity="0.5"/><line x1="-50.0" y1="526.1" x2="1455.0" y2="518.9" stroke="#8a8a90" stroke-width="1.0" stroke-opacity="0.5"/><line x1="-50.0" y1="524.5" x2="1455.0" y2="517.4" stroke="#8a8a90" stroke-width="1.0" stroke-opacity="0.5"/><line x1="-50.0" y1="522.9" x2="1455.0" y2="515.9" stroke="#8a8a90" stroke-width="1.0" stroke-opacity="0.5"/><line x1="-50.0" y1="521.4" x2="1455.0" y2="514.4" stroke="#8a8a90" stroke-width="1.0" stroke-opacity="0.5"/><line x1="-50.0" y1="519.9" x2="1455.0" y2="513.0" stroke="#8a8a90" stroke-width="1.0" stroke-opacity="0.5"/><line x1="-50.0" y1="518.4" x2="1455.0" y2="511.7" stroke="#8a8a90" stroke-width="1.0" stroke-opacity="0.28"/><line x1="-50.0" y1="517.0" x2="1455.0" y2="510.3" stroke="#55555c" stroke-width="1.7" stroke-opacity="0.85"/><line x1="-50.0" y1="515.6" x2="1455.0" y2="509.0" stroke="#8a8a90" stroke-width="1.0" stroke-opacity="0.28"/><line x1="-50.0" y1="514.3" x2="1455.0" y2="507.7" stroke="#8a8a90" stroke-width="1.0" stroke-opacity="0.28"/><line x1="-50.0" y1="513.0" x2="1455.0" y2="506.5" stroke="#8a8a90" stroke-width="1.0" stroke-opacity="0.28"/><line x1="-50.0" y1="511.7" x2="1455.0" y2="505.3" stroke="#8a8a90" stroke-width="1.0" stroke-opacity="0.28"/><line x1="-50.0" y1="510.4" x2="1455.0" y2="504.1" stroke="#8a8a90" stroke-width="1.0" stroke-opacity="0.28"/><line x1="-50.0" y1="509.2" x2="1455.0" y2="502.9" stroke="#8a8a90" stroke-width="1.0" stroke-opacity="0.28"/><line x1="-50.0" y1="508.0" x2="1455.0" y2="501.8" stroke="#8a8a90" stroke-width="1.0" stroke-opacity="0.28"/><line x1="-50.0" y1="506.8" x2="1455.0" y2="500.7" stroke="#8a8a90" stroke-width="1.0" stroke-opacity="0.28"/><line x1="-50.0" y1="505.6" x2="1455.0" y2="499.6" stroke="#8a8a90" stroke-width="1.0" stroke-opacity="0.28"/><line x1="-50.0" y1="504.5" x2="1455.0" y2="498.5" stroke="#55555c" stroke-width="1.7" stroke-opacity="0.85"/><line x1="-50.0" y1="503.4" x2="1455.0" y2="497.5" stroke="#8a8a90" stroke-width="1.0" stroke-opacity="0.28"/><line x1="-50.0" y1="502.3" x2="1455.0" y2="496.4" stroke="#8a8a90" stroke-width="1.0" stroke-opacity="0.28"/><line x1="-50.0" y1="501.2" x2="1455.0" y2="495.5" stroke="#8a8a90" stroke-width="1.0" stroke-opacity="0.28"/><line x1="-50.0" y1="500.2" x2="1455.0" y2="494.5" stroke="#8a8a90" stroke-width="1.0" stroke-opacity="0.28"/><line x1="-50.0" y1="499.2" x2="1455.0" y2="493.5" stroke="#8a8a90" stroke-width="1.0" stroke-opacity="0.28"/><line x1="-50.0" y1="498.2" x2="1455.0" y2="492.6" stroke="#8a8a90" stroke-width="1.0" stroke-opacity="0.28"/><line x1="-50.0" y1="497.2" x2="1455.0" y2="491.7" stroke="#8a8a90" stroke-width="1.0" stroke-opacity="0.28"/><line x1="-50.0" y1="496.3" x2="1455.0" y2="490.8" stroke="#8a8a90" stroke-width="1.0" stroke-opacity="0.28"/><line x1="-50.0" y1="495.3" x2="1455.0" y2="489.9" stroke="#8a8a90" stroke-width="1.0" stroke-opacity="0.28"/><line x1="-50.0" y1="494.4" x2="1455.0" y2="489.0" stroke="#55555c" stroke-width="1.7" stroke-opacity="0.85"/><line x1="-50.0" y1="493.5" x2="1455.0" y2="488.2" stroke="#8a8a90" stroke-width="1.0" stroke-opacity="0.28"/><line x1="-50.0" y1="492.6" x2="1455.0" y2="487.3" stroke="#8a8a90" stroke-width="1.0" stroke-opacity="0.28"/><line x1="-50.0" y1="491.7" x2="1455.0" y2="486.5" stroke="#8a8a90" stroke-width="1.0" stroke-opacity="0.28"/><line x1="-50.0" y1="490.9" x2="1455.0" y2="485.7" stroke="#8a8a90" stroke-width="1.0" stroke-opacity="0.28"/><line x1="-50.0" y1="486.1" x2="1455.0" y2="481.2" stroke="#55555c" stroke-width="1.7" stroke-opacity="0.8120760485334862"/><line x1="-50.0" y1="479.2" x2="1455.0" y2="474.6" stroke="#55555c" stroke-width="1.7" stroke-opacity="0.745810300956392"/><line x1="-50.0" y1="473.3" x2="1455.0" y2="469.1" stroke="#55555c" stroke-width="1.3" stroke-opacity="0.6895432789810984"/><line x1="-50.0" y1="468.2" x2="1455.0" y2="464.3" stroke="#55555c" stroke-width="1.3" stroke-opacity="0.6411707022704987"/><line x1="-50.0" y1="463.8" x2="1455.0" y2="460.2" stroke="#55555c" stroke-width="1.3" stroke-opacity="0.5991400577993938"/><line x1="-50.0" y1="459.9" x2="1455.0" y2="456.5" stroke="#55555c" stroke-width="1.3" stroke-opacity="0.5622808758351525"/><line x1="-50.0" y1="456.5" x2="1455.0" y2="453.3" stroke="#55555c" stroke-width="1.3" stroke-opacity="0.5296940238050726"/><line x1="-50.0" y1="453.5" x2="1455.0" y2="450.4" stroke="#55555c" stroke-width="1.3" stroke-opacity="0.5006773870530717"/><line x1="-50.0" y1="450.7" x2="1455.0" y2="447.9" stroke="#55555c" stroke-width="1.3" stroke-opacity="0.4746747082146647"/><line x1="-50.0" y1="448.3" x2="1455.0" y2="445.6" stroke="#55555c" stroke-width="1.3" stroke-opacity="0.45123958167436423"/><line x1="-50.0" y1="446.1" x2="1455.0" y2="443.5" stroke="#55555c" stroke-width="1.3" stroke-opacity="0.43000961197956183"/><line x1="-50.0" y1="444.0" x2="1455.0" y2="441.6" stroke="#55555c" stroke-width="1.3" stroke-opacity="0.4106875392568971"/><line x1="-50.0" y1="442.2" x2="1455.0" y2="439.8" stroke="#55555c" stroke-width="1.3" stroke-opacity="0.3930272344754242"/><line x1="-50.0" y1="440.5" x2="1455.0" y2="438.2" stroke="#55555c" stroke-width="1.3" stroke-opacity="0.3768231591080374"/><line x1="-50.0" y1="438.9" x2="1455.0" y2="436.7" stroke="#55555c" stroke-width="1.3" stroke-opacity="0.3619023289479286"/><line x1="-50.0" y1="437.5" x2="1455.0" y2="435.4" stroke="#55555c" stroke-width="1.3" stroke-opacity="0.34811811442847196"/><line x1="-50.0" y1="436.1" x2="1455.0" y2="434.1" stroke="#55555c" stroke-width="1.0" stroke-opacity="0.335345405767941"/><line x1="-50.0" y1="434.9" x2="1455.0" y2="432.9" stroke="#55555c" stroke-width="1.0" stroke-opacity="0.32347680481029034"/><line x1="-50.0" y1="433.7" x2="1455.0" y2="431.8" stroke="#55555c" stroke-width="1.0" stroke-opacity="0.3124195978975999"/><line x1="-50.0" y1="432.7" x2="1455.0" y2="430.8" stroke="#55555c" stroke-width="1.0" stroke-opacity="0.3020933290684863"/><line x1="-50.0" y1="431.6" x2="1455.0" y2="429.9" stroke="#55555c" stroke-width="1.0" stroke-opacity="0.2924278391302852"/><line x1="-50.0" y1="430.7" x2="1455.0" y2="429.0" stroke="#55555c" stroke-width="1.0" stroke-opacity="0.28336166950028335"/><line x1="-50.0" y1="429.8" x2="1455.0" y2="428.1" stroke="#55555c" stroke-width="1.0" stroke-opacity="0.27484075403369224"/><line x1="-50.0" y1="429.0" x2="1455.0" y2="427.3" stroke="#55555c" stroke-width="1.0" stroke-opacity="0.2668173399880717"/><line x1="-50.0" y1="428.2" x2="1455.0" y2="426.6" stroke="#55555c" stroke-width="1.0" stroke-opacity="0.2592490926281758"/><line x1="-50.0" y1="427.4" x2="1455.0" y2="425.9" stroke="#55555c" stroke-width="1.0" stroke-opacity="0.25209834801435477"/><line x1="-50.0" y1="426.7" x2="1455.0" y2="425.2" stroke="#55555c" stroke-width="1.0" stroke-opacity="0.2453314861315554"/><line x1="-50.0" y1="426.0" x2="1455.0" y2="424.6" stroke="#55555c" stroke-width="1.0" stroke-opacity="0.23891840233858955"/><line x1="-50.0" y1="425.4" x2="1455.0" y2="424.0" stroke="#55555c" stroke-width="1.0" stroke-opacity="0.23283205960500727"/><line x1="-50.0" y1="424.8" x2="1455.0" y2="423.4" stroke="#55555c" stroke-width="1.0" stroke-opacity="0.22704810748724527"/><line x1="-50.0" y1="424.2" x2="1455.0" y2="422.9" stroke="#55555c" stroke-width="1.0" stroke-opacity="0.22154455651992594"/><line x1="-50.0" y1="423.7" x2="1455.0" y2="422.4" stroke="#55555c" stroke-width="1.0" stroke-opacity="0.21630149884215075"/><line x1="-50.0" y1="423.1" x2="1455.0" y2="421.9" stroke="#55555c" stroke-width="1.0" stroke-opacity="0.21130086757650332"/><line x1="-50.0" y1="422.6" x2="1455.0" y2="421.4" stroke="#55555c" stroke-width="1.0" stroke-opacity="0.2065262288310615"/><line x1="-50.0" y1="422.2" x2="1455.0" y2="420.9" stroke="#55555c" stroke-width="1.0" stroke-opacity="0.20196260127830443"/><line x1="-50.0" y1="421.7" x2="1455.0" y2="420.5" stroke="#55555c" stroke-width="1.0" stroke-opacity="0.19759629913755025"/><line x1="-50.0" y1="421.3" x2="1455.0" y2="420.1" stroke="#55555c" stroke-width="1.0" stroke-opacity="0.1934147950940906"/><line x1="-50.0" y1="420.8" x2="1455.0" y2="419.7" stroke="#55555c" stroke-width="1.0" stroke-opacity="0.18940660026294093"/><line x1="-50.0" y1="825.7" x2="692.3" y2="813.7" stroke="#4a3a48" stroke-width="2.2" stroke-opacity="1"/><line x1="692.3" y1="813.7" x2="1455.0" y2="801.2" stroke="#c85a74" stroke-width="2.4" stroke-opacity="1"/><line x1="673.5" y1="414.9" x2="692.3" y2="813.7" stroke="#2c3048" stroke-width="2.0" stroke-opacity="1"/><line x1="692.3" y1="813.7" x2="706.9" y2="1123.5" stroke="#4f7fc8" stroke-width="2.6" stroke-opacity="1"/><defs><linearGradient id="hz" x1="0" y1="0" x2="0" y2="1"><stop offset="0" stop-color="#b4b4b8" stop-opacity="0.55"/><stop offset="0.5" stop-color="#b8b8bc" stop-opacity="0.35"/><stop offset="1" stop-color="#bbbbbe" stop-opacity="0"/></linearGradient></defs><rect x="0" y="406.0" width="1405" height="50" fill="url(#hz)"/><rect x="0" y="397.0" width="1405" height="10" fill="#8a8a90"/><rect x="0" y="398.0" width="1405" height="3" fill="#707076"/><rect x="0" y="404.0" width="1405" height="1.5" fill="#7a7a80"/><g id="robot" transform="translate(-515,-119)"><path d="M1160.0 601.0 Q1130.0 590.0 1128.8 622.5 Q1127.5 655.0 1133.2 695.5 Q1139.0 736.0 1140.0 746.0 Q1141.0 756.0 1148.0 778.0 Q1155.0 800.0 1161.0 823.0 Q1167.0 846.0 1165.0 875.0 Q1163.0 904.0 1167.0 911.0 Q1171.0 918.0 1186.5 918.0 Q1202.0 918.0 1203.5 904.5 Q1205.0 891.0 1202.5 869.9 Q1200.0 848.7 1198.0 816.9 Q1196.0 785.0 1194.9 766.5 Q1193.8 748.0 1192.4 736.5 Q1191.0 725.0 1190.5 689.0 Q1190.0 653.0 1190.0 632.5 Q1190.0 612.0 1160.0 601.0 Z" fill="#97969b" /><path d="M1249.0 595.0 Q1222.0 598.0 1220.5 625.5 Q1219.0 653.0 1223.5 690.0 Q1228.0 727.0 1228.8 742.9 Q1229.5 758.7 1228.8 785.2 Q1228.0 811.6 1233.3 838.0 Q1238.7 864.5 1239.8 894.8 Q1241.0 925.0 1239.5 932.5 Q1238.0 940.0 1241.0 956.0 Q1244.0 972.0 1253.2 982.0 Q1262.5 992.0 1284.2 992.0 Q1306.0 992.0 1302.0 978.5 Q1298.0 965.0 1291.0 950.5 Q1284.0 936.0 1282.5 930.5 Q1281.0 925.0 1283.7 881.5 Q1286.3 838.0 1287.7 798.4 Q1289.0 758.7 1287.7 742.9 Q1286.3 727.0 1287.7 690.0 Q1289.0 653.0 1282.5 622.5 Q1276.0 592.0 1249.0 595.0 Z" fill="#97969b" /><polygon points="1140.0,741.0 1185.0,744.0 1184.0,753.0 1143.0,756.0" fill="#1c1c24" /><polygon points="1233.0,737.0 1281.0,729.0 1283.0,744.0 1235.0,751.0" fill="#1c1c24" /><polygon points="1244.0,923.0 1280.0,922.0 1280.0,932.0 1245.0,932.0" fill="#1c1c24" /><polygon points="1170.0,847.0 1198.0,845.0 1198.0,849.0 1171.0,851.0" fill="#1c1c24" /><path d="M1102.5 362.5 Q1107.0 350.0 1117.5 351.0 Q1128.0 352.0 1133.5 362.5 Q1139.0 373.0 1140.5 389.0 Q1142.0 405.0 1133.0 419.0 Q1124.0 433.0 1114.0 452.0 Q1104.0 471.0 1101.0 489.0 Q1098.0 507.0 1092.5 522.5 Q1087.0 538.0 1085.0 543.5 Q1083.0 549.0 1092.5 573.0 Q1102.0 597.0 1098.0 598.5 Q1094.0 600.0 1086.5 586.0 Q1079.0 572.0 1071.0 585.5 Q1063.0 599.0 1052.5 601.5 Q1042.0 604.0 1037.0 594.0 Q1032.0 584.0 1038.0 571.0 Q1044.0 558.0 1048.0 549.0 Q1052.0 540.0 1053.0 523.5 Q1054.0 507.0 1054.0 488.5 Q1054.0 470.0 1060.0 460.5 Q1066.0 451.0 1073.5 432.5 Q1081.0 414.0 1089.5 394.5 Q1098.0 375.0 1102.5 362.5 Z" fill="#9c9ba0" /><polygon points="1062.0,451.0 1105.0,463.0 1102.0,475.0 1057.0,464.0" fill="#1c1c24" /><path d="M1036 590 L1046 596 M1048 600 L1058 601 M1062 575 L1068 583 M1084 551 L1090 556 M1092 575 L1097 581 M1046 540 L1058 541" stroke="#2a2a30" stroke-width="2.2"/><path d="M1280.5 418.5 Q1282.0 400.0 1301.5 389.0 Q1321.0 378.0 1322.5 391.0 Q1324.0 404.0 1327.5 442.0 Q1331.0 480.0 1330.5 488.5 Q1330.0 497.0 1328.5 543.5 Q1327.0 590.0 1330.5 610.0 Q1334.0 630.0 1327.5 635.5 Q1321.0 641.0 1311.5 643.0 Q1302.0 645.0 1295.5 629.0 Q1289.0 613.0 1291.0 604.5 Q1293.0 596.0 1297.0 592.0 Q1301.0 588.0 1294.5 543.5 Q1288.0 499.0 1287.0 492.5 Q1286.0 486.0 1282.5 461.5 Q1279.0 437.0 1280.5 418.5 Z" fill="#9c9ba0" /><polygon points="1287.0,487.0 1330.0,478.0 1332.0,492.0 1290.0,503.0" fill="#1c1c24" /><path d="M1296 610 L1302 616 M1318 633 L1328 636 M1300 589 L1314 590 M1292 630 L1296 638" stroke="#2a2a30" stroke-width="2.2"/><path d="M1118.0 373.0 Q1100.0 368.0 1106.0 358.0 Q1112.0 348.0 1126.0 343.5 Q1140.0 339.0 1150.5 340.5 Q1161.0 342.0 1171.0 344.0 Q1181.0 346.0 1211.5 348.0 Q1242.0 350.0 1255.5 349.5 Q1269.0 349.0 1283.5 351.0 Q1298.0 353.0 1306.0 358.5 Q1314.0 364.0 1317.5 371.0 Q1321.0 378.0 1319.5 390.0 Q1318.0 402.0 1303.0 403.0 Q1288.0 404.0 1282.5 422.0 Q1277.0 440.0 1271.5 444.5 Q1266.0 449.0 1212.0 450.0 Q1158.0 451.0 1152.0 448.5 Q1146.0 446.0 1143.5 426.5 Q1141.0 407.0 1138.5 392.5 Q1136.0 378.0 1118.0 373.0 Z" fill="#99989d" /><path d="M1157.0 473.0 Q1156.0 449.0 1210.5 449.0 Q1265.0 449.0 1263.5 473.5 Q1262.0 498.0 1267.0 521.5 Q1272.0 545.0 1273.0 559.5 Q1274.0 574.0 1269.0 583.0 Q1264.0 592.0 1246.5 603.5 Q1229.0 615.0 1216.0 618.0 Q1203.0 621.0 1190.0 615.0 Q1177.0 609.0 1159.5 597.5 Q1142.0 586.0 1140.0 571.0 Q1138.0 556.0 1144.0 528.0 Q1150.0 500.0 1154.0 498.5 Q1158.0 497.0 1157.0 473.0 Z" fill="#1c1c24" /><path d="M1152 500 Q1205 512 1262 499 M1141 552 Q1200 566 1272 546" stroke="#4a4a56" stroke-width="1.6" fill="none"/><polygon points="1100.0,375.0 1115.0,357.0 1138.0,377.0" fill="#1c1c24" /><ellipse cx="1305" cy="389" rx="14" ry="16" fill="#1c1c24"/><rect x="1192" y="322" width="48" height="24" rx="4" fill="#1c1c24"/><path d="M1204.5 216.0 Q1217.0 213.0 1232.5 215.0 Q1248.0 217.0 1255.5 231.5 Q1263.0 246.0 1262.0 264.0 Q1261.0 282.0 1257.0 295.0 Q1253.0 308.0 1250.0 314.0 Q1247.0 320.0 1238.5 324.5 Q1230.0 329.0 1216.5 328.0 Q1203.0 327.0 1196.0 320.5 Q1189.0 314.0 1184.0 300.5 Q1179.0 287.0 1178.0 274.0 Q1177.0 261.0 1178.0 250.5 Q1179.0 240.0 1185.5 229.5 Q1192.0 219.0 1204.5 216.0 Z" fill="#a2a2a6" /><polygon points="1203.7,267.0 1241.6,267.0 1262.0,246.0 1261.0,282.0 1252.0,308.0 1246.0,320.0 1230.0,328.0 1204.0,326.0 1198.0,300.0" fill="#86868a" /><polygon points="1204.0,234.0 1238.0,236.0 1248.0,256.0 1241.6,267.0 1203.7,267.0 1190.0,248.0" fill="#b0b0b4" /><path d="M1213 380 C1213 368 1217 364 1221 364 C1225 364 1229 368 1229 380 M1215 378 L1221 370 L1227 378" stroke="#dce8c0" stroke-width="2.4" fill="none"/></g></svg>
<div style="left:535px;top:132px;width:158px;height:40px;background:#5e5d6a;border-radius:5px"></div>
<div style="left:574px;top:132px;width:40px;height:40px;background:#3c3d4c;"></div>
<div style="left:700px;top:132px;width:79px;height:40px;background:#5e5d6a;border-radius:5px"></div>
<div style="left:785px;top:132px;width:40px;height:40px;background:#5e5d6a;border-radius:5px"></div>
<div style="left:1313px;top:132px;width:80px;height:40px;background:#5e5d6a;border-radius:5px"></div>
<div style="left:1399px;top:132px;width:159px;height:40px;background:#5e5d6a;border-radius:5px"></div>
<div style="left:1564px;top:132px;width:198px;height:40px;background:#5e5d6a;border-radius:5px"></div>
<div style="left:1769px;top:132px;width:39px;height:40px;background:#5e5d6a;border-radius:5px"></div>
<div style="left:1815px;top:132px;width:40px;height:40px;background:#5e5d6a;border-radius:5px"></div>
<div style="left:1861px;top:132px;width:40px;height:40px;background:#5e5d6a;border-radius:5px"></div>
<svg style="left:544px;top:142px;" width="21" height="19" viewBox="0 0 21 19"><path d="M3.5 8 A7 7 0 0 1 16 5" stroke="#bfbfc7" stroke-width="3" fill="none"/><path d="M19 1.5 V8.5 H12 Z" fill="#bfbfc7"/><path d="M17.5 11 A7 7 0 0 1 5 14" stroke="#bfbfc7" stroke-width="3" fill="none"/><path d="M2 17.5 V10.5 H9 Z" fill="#bfbfc7"/></svg>
<svg style="left:583px;top:141px;" width="22" height="22" viewBox="0 0 22 22"><path d="M11 1 L15 5.5 H12.3 V9.7 H16.5 V7 L21 11 L16.5 15 V12.3 H12.3 V16.5 H15 L11 21 L7 16.5 H9.7 V12.3 H5.5 V15 L1 11 L5.5 7 V9.7 H9.7 V5.5 H7 Z" fill="#bfbfc7"/></svg>
<svg style="left:624px;top:142px;" width="20" height="19" viewBox="0 0 20 20"><path d="M1 1 H8 L5.8 3.2 L10 7.4 L14.2 3.2 L12 1 H19 V8 L16.8 5.8 L12.6 10 L16.8 14.2 L19 12 V19 H12 L14.2 16.8 L10 12.6 L5.8 16.8 L8 19 H1 V12 L3.2 14.2 L7.4 10 L3.2 5.8 L1 8 Z" fill="#bfbfc7"/></svg>
<svg style="left:663px;top:142px;" width="20" height="19" viewBox="0 0 20 20"><rect x="3.5" y="3.5" width="13" height="13" fill="none" stroke="#bfbfc7" stroke-width="1.4" stroke-dasharray="1.5 1"/><rect x="0.8" y="0.8" width="5" height="5" rx="1" fill="none" stroke="#bfbfc7" stroke-width="1.6"/><rect x="14.2" y="0.8" width="5" height="5" rx="1" fill="none" stroke="#bfbfc7" stroke-width="1.6"/><rect x="0.8" y="14.2" width="5" height="5" rx="1" fill="none" stroke="#bfbfc7" stroke-width="1.6"/><rect x="14.2" y="14.2" width="5" height="5" rx="1" fill="none" stroke="#bfbfc7" stroke-width="1.6"/></svg>
<div class="t" style="left:709.00px;top:140.47px;font-size:20.86px;letter-spacing:0.200px;color:#c4c4cc;">Global</div>
<svg style="left:796px;top:142px;" width="19" height="19" viewBox="0 0 19 19"><path d="M2 1 V10 A7.5 7.5 0 0 0 17 10 V1 H13 V10 A3.5 3.5 0 0 1 6 10 V1 Z" fill="none" stroke="#8a8a96" stroke-width="1.5"/></svg>
<svg style="left:789px;top:137.6px;" width="30.600000000000023" height="30.400000000000006" viewBox="0 0 30.600000000000023 30.400000000000006"><line x1="2" y1="28.400000000000006" x2="28.600000000000023" y2="2.0" stroke="#3a3a46" stroke-width="3.2"/><line x1="2" y1="28.400000000000006" x2="28.600000000000023" y2="2.0" stroke="#e6d84a" stroke-width="1.8"/></svg>
<div style="left:1325.5px;top:143.8px;width:15.5px;height:15.0px;background:#bfbfc7;border-radius:3px"></div>
<svg style="left:1365px;top:143px;" width="16" height="17.30000000000001" viewBox="0 0 17 17.3"><path d="M1.5 1.5 Q1.5 0 3 0.8 L15.5 8 Q16.5 8.6 15.5 9.3 L3 16.5 Q1.5 17.3 1.5 15.8 Z" fill="#bfbfc7"/></svg>
<svg style="left:1410px;top:143px;" width="18.5" height="18" viewBox="0 0 19 19"><circle cx="1.0" cy="1.0" r="1.05" fill="#bfbfc7"/><circle cx="1.0" cy="4.4" r="1.05" fill="#bfbfc7"/><circle cx="1.0" cy="7.8" r="1.05" fill="#bfbfc7"/><circle cx="1.0" cy="11.2" r="1.05" fill="#bfbfc7"/><circle cx="1.0" cy="14.6" r="1.05" fill="#bfbfc7"/><circle cx="1.0" cy="18.0" r="1.05" fill="#bfbfc7"/><circle cx="4.4" cy="1.0" r="1.05" fill="#bfbfc7"/><circle cx="4.4" cy="7.8" r="1.05" fill="#bfbfc7"/><circle cx="4.4" cy="18.0" r="1.05" fill="#bfbfc7"/><circle cx="7.8" cy="1.0" r="1.05" fill="#bfbfc7"/><circle cx="7.8" cy="4.4" r="1.05" fill="#bfbfc7"/><circle cx="7.8" cy="7.8" r="1.05" fill="#bfbfc7"/><circle cx="7.8" cy="11.2" r="1.05" fill="#bfbfc7"/><circle cx="7.8" cy="14.6" r="1.05" fill="#bfbfc7"/><circle cx="7.8" cy="18.0" r="1.05" fill="#bfbfc7"/><circle cx="11.2" cy="1.0" r="1.05" fill="#bfbfc7"/><circle cx="11.2" cy="7.8" r="1.05" fill="#bfbfc7"/><circle cx="11.2" cy="18.0" r="1.05" fill="#bfbfc7"/><circle cx="14.6" cy="1.0" r="1.05" fill="#bfbfc7"/><circle cx="14.6" cy="7.8" r="1.05" fill="#bfbfc7"/><circle cx="14.6" cy="14.6" r="1.05" fill="#bfbfc7"/><circle cx="14.6" cy="18.0" r="1.05" fill="#bfbfc7"/><circle cx="18.0" cy="1.0" r="1.05" fill="#bfbfc7"/><circle cx="18.0" cy="4.4" r="1.05" fill="#bfbfc7"/><circle cx="18.0" cy="7.8" r="1.05" fill="#bfbfc7"/><circle cx="18.0" cy="11.2" r="1.05" fill="#bfbfc7"/><circle cx="18.0" cy="14.6" r="1.05" fill="#bfbfc7"/><circle cx="18.0" cy="18.0" r="1.05" fill="#bfbfc7"/></svg>
<svg style="left:1449px;top:143px;" width="19.5" height="17.5" viewBox="0 0 19.5 17.5"><rect x="3" y="3" width="13.5" height="11.5" fill="none" stroke="#bfbfc7" stroke-width="2.4"/><circle cx="3" cy="3" r="2.6" fill="#bfbfc7"/><circle cx="16.5" cy="3" r="2.6" fill="#bfbfc7"/><circle cx="3" cy="14.5" r="2.6" fill="#bfbfc7"/><circle cx="16.5" cy="14.5" r="2.6" fill="#bfbfc7"/></svg>
<svg style="left:1488px;top:141.5px;" width="21.5" height="20.5" viewBox="0 0 21.5 20.5"><path d="M11 1 L15 8 H7 Z" fill="none" stroke="#8e8e9a" stroke-width="1.2"/><circle cx="5" cy="14.5" r="4.2" fill="none" stroke="#8e8e9a" stroke-width="1.2"/><rect x="12" y="11" width="8" height="8" rx="1" fill="none" stroke="#8e8e9a" stroke-width="1.2"/></svg>
<svg style="left:1481.5px;top:137.9px;" width="31.5" height="30.0" viewBox="0 0 31.5 30.0"><line x1="2.0" y1="28.0" x2="29.5" y2="2.0" stroke="#3a3a46" stroke-width="3.2"/><line x1="2.0" y1="28.0" x2="29.5" y2="2.0" stroke="#e6d84a" stroke-width="1.8"/></svg>
<svg style="left:1527.5px;top:141px;" width="20.5" height="21" viewBox="0 0 20.5 21"><circle cx="16.45" cy="10.50" r="4" fill="#bfbfc7"/><circle cx="14.63" cy="14.88" r="4" fill="#bfbfc7"/><circle cx="10.25" cy="16.70" r="4" fill="#bfbfc7"/><circle cx="5.87" cy="14.88" r="4" fill="#bfbfc7"/><circle cx="4.05" cy="10.50" r="4" fill="#bfbfc7"/><circle cx="5.87" cy="6.12" r="4" fill="#bfbfc7"/><circle cx="10.25" cy="4.30" r="4" fill="#bfbfc7"/><circle cx="14.63" cy="6.12" r="4" fill="#bfbfc7"/><circle cx="10.25" cy="10.5" r="6.5" fill="#bfbfc7"/></svg>
<svg style="left:1572.5px;top:144px;" width="23.5" height="15" viewBox="0 0 23.5 15"><rect x="0.5" y="0.5" width="15" height="14" rx="2.5" fill="#bfbfc7"/><path d="M16.5 5 L22.5 1 V14 L16.5 10 Z" fill="#bfbfc7"/></svg>
<svg style="left:1613px;top:140px;" width="22" height="23" viewBox="0 0 22 23"><g fill="#8a8a96"><rect x="8" y="8" width="6" height="6" transform="rotate(45 11 11)"/><rect x="3" y="3" width="6" height="4" transform="rotate(45 6 5)"/><rect x="13" y="15" width="6" height="4" transform="rotate(45 16 17)"/><rect x="1" y="11" width="6" height="4" transform="rotate(-45 4 13)"/></g></svg>
<svg style="left:1606.7px;top:137.7px;" width="31.200000000000045" height="30.5" viewBox="0 0 31.200000000000045 30.5"><line x1="2.0" y1="28.5" x2="29.200000000000045" y2="2.0" stroke="#3a3a46" stroke-width="3.2"/><line x1="2.0" y1="28.5" x2="29.200000000000045" y2="2.0" stroke="#e6d84a" stroke-width="1.8"/></svg>
<div class="t" style="left:1656.40px;top:141.49px;font-size:19.43px;letter-spacing:0.533px;color:#c4c4cc;">14.4</div>
<div class="t" style="left:1706.00px;top:141.49px;font-size:19.43px;letter-spacing:2.050px;color:#9a9aa6;">km/h</div>
<svg style="left:1778px;top:143px;" width="23" height="18" viewBox="0 0 23 18"><path d="M1 6 H5 L11 1 V17 L5 12 H1 Z" fill="#8a8a96"/><path d="M14 5 Q17 9 14 13 M17 2.5 Q22 9 17 15.5" stroke="#8a8a96" stroke-width="1.8" fill="none"/></svg>
<svg style="left:1771.5px;top:137.8px;" width="31.5" height="30.599999999999994" viewBox="0 0 31.5 30.599999999999994"><line x1="2.0" y1="28.599999999999994" x2="29.5" y2="2.0" stroke="#3a3a46" stroke-width="3.2"/><line x1="2.0" y1="28.599999999999994" x2="29.5" y2="2.0" stroke="#e6d84a" stroke-width="1.8"/></svg>
<svg style="left:1824px;top:142.5px;" width="21.5" height="17.5" viewBox="0 0 21.5 17.5"><path d="M1 5 Q1 3.5 2.5 3.5 H6 L7.5 0.8 H14 L15.5 3.5 H19 Q20.5 3.5 20.5 5 V16 Q20.5 17.5 19 17.5 H2.5 Q1 17.5 1 16 Z" fill="#bfbfc7"/><circle cx="10.75" cy="10.5" r="3.2" fill="#5e5d6a"/></svg>
<svg style="left:1870.5px;top:141px;" width="21.0" height="21" viewBox="0 0 21 21"><circle cx="10.5" cy="10.5" r="10.5" fill="#bfbfc7"/><path d="M7.6 8.3 Q7.8 5.5 10.6 5.5 Q13.4 5.6 13.4 8 Q13.4 9.6 11.6 10.4 Q10.6 10.9 10.6 12.3" stroke="#5e5d6a" stroke-width="1.7" fill="none"/><circle cx="10.6" cy="15" r="1.1" fill="#5e5d6a"/></svg>
<div style="left:1922px;top:119px;width:638px;height:78px;background:#1b1c2d;"></div>
<div style="left:1922px;top:197px;width:638px;height:1.5px;background:#2c2e42;"></div>
<svg style="left:1946.5px;top:139px;" width="18.5" height="15" viewBox="0 0 18 16"><rect x="1" y="1" width="16" height="14" rx="1.5" fill="none" stroke="#b8cb4e" stroke-width="1.8"/><path d="M5 1 V15 M13 1 V15 M1 5 H5 M1 8 H5 M1 11 H5 M13 5 H17 M13 8 H17 M13 11 H17 M5 8 H13" stroke="#b8cb4e" stroke-width="1.5" fill="none"/></svg>
<div class="t" style="left:1982.00px;top:133.73px;font-size:23.14px;letter-spacing:1.945px;color:#d8d8e0;">Animation Controller</div>
<div class="t" style="left:1943.60px;top:167.26px;font-size:18.29px;letter-spacing:2.030px;color:#4a4c62;">747E5D6A-CC4D-4C96-AD33-12BE...</div>
<div style="left:2381px;top:142px;width:2px;height:25px;background:#2e3044;"></div>
<svg style="left:2392px;top:147px;" width="21" height="21" viewBox="0 0 21 21"><circle cx="10.5" cy="10.5" r="9.4" fill="none" stroke="#cfcfd7" stroke-width="1.8"/><circle cx="10.5" cy="10.5" r="4.4" fill="none" stroke="#cfcfd7" stroke-width="1.8"/><circle cx="10.5" cy="10.5" r="1" fill="#cfcfd7"/></svg>
<svg style="left:2433px;top:146px;" width="18" height="22" viewBox="0 0 18 22"><path d="M3 1.5 H15 M4.5 1.5 V4 L4 9 L1.5 13.5 H16.5 L14 9 L13.5 4 V1.5 M9 13.5 V21.5" stroke="#cfcfd7" stroke-width="1.8" fill="none" stroke-linejoin="round"/></svg>
<svg style="left:2472px;top:146px;" width="20" height="22" viewBox="0 0 20 22"><path d="M1 4 H19 M7 4 Q7 1.2 10 1.2 Q13 1.2 13 4 M2.5 4.5 L4.2 20 H15.8 L17.5 4.5" stroke="#cfcfd7" stroke-width="1.8" fill="none" stroke-linejoin="round"/></svg>
<svg style="left:2519px;top:149px;" width="5" height="17" viewBox="0 0 5 17"><circle cx="2.5" cy="2.5" r="1.5" fill="#cfcfd7"/><circle cx="2.5" cy="8.5" r="1.5" fill="#cfcfd7"/><circle cx="2.5" cy="14.5" r="1.5" fill="#cfcfd7"/></svg>
<div style="left:2554px;top:199px;width:6px;height:321px;background:#14141f;border-radius:3px 0 0 3px"></div>
<div style="left:1938.7px;top:207px;width:33px;height:33px;border-radius:50%;background:#2a2b33;"></div>
<svg style="left:1945px;top:213px;" width="20" height="21" viewBox="0 0 20 21"><circle cx="10" cy="10.5" r="9" fill="#b8cb4e"/><path d="M1 10.5 H19 M10 1.5 V19.5 M2.5 6 H17.5 M2.5 15 H17.5" stroke="#2a2b33" stroke-width="1.3"/><ellipse cx="10" cy="10.5" rx="4" ry="9" fill="none" stroke="#2a2b33" stroke-width="1.3"/></svg>
<div class="t" style="left:1982.40px;top:214.04px;font-size:19.71px;letter-spacing:0.525px;color:#b6ca58;">TRANSFORM</div>
<div class="t" style="left:1942.80px;top:276.89px;font-size:20.71px;letter-spacing:0.264px;color:#b8b8c4;">Global Position</div>
<div style="left:2152.3px;top:266.3px;width:114.39999999999964px;height:38.39999999999998px;background:#2a2b3e;border-radius:3px"></div>
<div class="t" style="left:2165.80px;top:274.89px;font-size:20.71px;letter-spacing:0.000px;color:#d4d4dc;">0</div>
<div style="left:2269px;top:266.3px;width:114.69999999999982px;height:38.39999999999998px;background:#2a2b3e;border-radius:3px"></div>
<div class="t" style="left:2282.50px;top:274.89px;font-size:20.71px;letter-spacing:0.000px;color:#d4d4dc;">0</div>
<div style="left:2385px;top:266.3px;width:114.5px;height:38.39999999999998px;background:#2a2b3e;border-radius:3px"></div>
<div class="t" style="left:2398.50px;top:274.89px;font-size:20.71px;letter-spacing:0.000px;color:#d4d4dc;">0</div>
<div class="t" style="left:2247.80px;top:275.50px;font-size:20.00px;letter-spacing:0.000px;color:#8c3a46;">X</div>
<div class="t" style="left:2364.80px;top:275.50px;font-size:20.00px;letter-spacing:0.000px;color:#6c6e52;">Y</div>
<div class="t" style="left:2480.00px;top:275.50px;font-size:20.00px;letter-spacing:0.000px;color:#4a4c5e;">Z</div>
<div class="t" style="left:1942.80px;top:333.09px;font-size:20.71px;letter-spacing:0.456px;color:#b8b8c4;">Global Orientation</div>
<div style="left:2152.3px;top:320px;width:114.39999999999964px;height:39.39999999999998px;background:#2a2b3e;border-radius:3px"></div>
<div class="t" style="left:2165.80px;top:331.09px;font-size:20.71px;letter-spacing:0.000px;color:#d4d4dc;">0</div>
<div style="left:2269px;top:320px;width:114.69999999999982px;height:39.39999999999998px;background:#2a2b3e;border-radius:3px"></div>
<div class="t" style="left:2282.50px;top:331.09px;font-size:20.71px;letter-spacing:0.000px;color:#d4d4dc;">0</div>
<div style="left:2385px;top:320px;width:114.5px;height:39.39999999999998px;background:#2a2b3e;border-radius:3px"></div>
<div class="t" style="left:2398.50px;top:331.09px;font-size:20.71px;letter-spacing:0.000px;color:#d4d4dc;">0</div>
<div class="t" style="left:2247.80px;top:331.70px;font-size:20.00px;letter-spacing:0.000px;color:#8c3a46;">X</div>
<div class="t" style="left:2364.80px;top:331.70px;font-size:20.00px;letter-spacing:0.000px;color:#6c6e52;">Y</div>
<div class="t" style="left:2480.00px;top:331.70px;font-size:20.00px;letter-spacing:0.000px;color:#4a4c5e;">Z</div>
<div class="t" style="left:1942.80px;top:387.39px;font-size:20.71px;letter-spacing:0.086px;color:#b8b8c4;">Global Scale</div>
<div style="left:2152.3px;top:374px;width:114.39999999999964px;height:39px;background:#2a2b3e;border-radius:3px"></div>
<div class="t" style="left:2166.30px;top:385.39px;font-size:20.71px;letter-spacing:0.000px;color:#d4d4dc;">1</div>
<div style="left:2269px;top:374px;width:114.69999999999982px;height:39px;background:#2a2b3e;border-radius:3px"></div>
<div class="t" style="left:2283.00px;top:385.39px;font-size:20.71px;letter-spacing:0.000px;color:#d4d4dc;">1</div>
<div style="left:2385px;top:374px;width:114.5px;height:39px;background:#2a2b3e;border-radius:3px"></div>
<div class="t" style="left:2399.00px;top:385.39px;font-size:20.71px;letter-spacing:0.000px;color:#d4d4dc;">1</div>
<div class="t" style="left:2247.80px;top:386.00px;font-size:20.00px;letter-spacing:0.000px;color:#8c3a46;">X</div>
<div class="t" style="left:2364.80px;top:386.00px;font-size:20.00px;letter-spacing:0.000px;color:#6c6e52;">Y</div>
<div class="t" style="left:2480.00px;top:386.00px;font-size:20.00px;letter-spacing:0.000px;color:#4a4c5e;">Z</div>
<svg style="left:2119px;top:385px;" width="23" height="16" viewBox="0 0 23 16"><path d="M9.5 6 L7 3.5 Q4.5 1.2 2.3 3.3 Q0.2 5.5 2.5 8 L5.5 11 Q8 13.3 10.2 11.2 M13.5 10 L16 12.5 Q18.5 14.8 20.7 12.7 Q22.8 10.5 20.5 8 L17.5 5 Q15 2.7 12.8 4.8 M7.5 6.5 L15.5 9.5" stroke="#c8c8d0" stroke-width="1.5" fill="none"/></svg>
<div style="left:1922px;top:426.5px;width:638px;height:1.5px;background:#2a2c40;"></div>
<div style="left:1938.7px;top:438px;width:33px;height:33px;border-radius:50%;background:#2a2b33;"></div>
<svg style="left:1946.5px;top:446px;" width="18.5" height="16" viewBox="0 0 18 16"><rect x="1" y="1" width="16" height="14" rx="1.5" fill="none" stroke="#b8cb4e" stroke-width="1.8"/><path d="M5 1 V15 M13 1 V15 M1 5 H5 M1 8 H5 M1 11 H5 M13 5 H17 M13 8 H17 M13 11 H17 M5 8 H13" stroke="#b8cb4e" stroke-width="1.5" fill="none"/></svg>
<div class="t" style="left:1982.00px;top:443.84px;font-size:19.71px;letter-spacing:0.908px;color:#b6ca58;">ANIMATION CONTROLLER</div>
<div style="left:1942px;top:493px;width:66px;height:51.39999999999998px;background:#6b8b3f;border-radius:3px 0 0 3px"></div>
<div style="left:2008px;top:493px;width:336px;height:51.39999999999998px;background:#2a2b3e;border-radius:0 3px 3px 0"></div>
<div class="t" style="left:2028.00px;top:506.57px;font-size:22.86px;letter-spacing:0.713px;color:#d8d8e0;">AG_Locomotion</div>
<svg style="left:1965px;top:507px;" width="21" height="23.399999999999977" viewBox="0 0 21 23"><circle cx="13" cy="3" r="2.6" fill="#e0e0e8"/><path d="M8 8 L13 6.5 L15 12 L19 13 M13 7 L10.5 14 L14 17 L12 22 M10.5 14 L6.5 19 L2 18.5 M8 8 L5 12" stroke="#e0e0e8" stroke-width="2.4" fill="none" stroke-linecap="round" stroke-linejoin="round"/></svg>
<div style="left:1942px;top:554.3px;width:66px;height:51.200000000000045px;background:#6b8b3f;border-radius:3px 0 0 3px"></div>
<div style="left:2008px;top:554.3px;width:375px;height:51.200000000000045px;background:#2a2b3e;border-radius:0 3px 3px 0"></div>
<div class="t" style="left:2028.00px;top:567.97px;font-size:22.74px;letter-spacing:-0.417px;color:#d8d8e0;">AS_X3DV_Droid</div>
<svg style="left:1965px;top:568.3px;" width="21" height="23.200000000000045" viewBox="0 0 21 23"><rect x="5" y="2" width="15" height="13" rx="1.5" fill="none" stroke="#d4d4dc" stroke-width="1.8"/><path d="M9 2 V15 M16 2 V15 M5 6 H9 M5 11 H9 M16 6 H20 M16 11 H20" stroke="#d4d4dc" stroke-width="1.4"/><path d="M2.5 5 V18 H17" stroke="#d4d4dc" stroke-width="1.6" fill="none"/></svg>
<svg style="left:2351.5px;top:507px;" width="24.5" height="24" viewBox="0 0 24 23"><rect x="1" y="1" width="7" height="6" rx="1" fill="none" stroke="#9c9caa" stroke-width="1.5"/><rect x="16" y="1" width="7" height="6" rx="1" fill="none" stroke="#9c9caa" stroke-width="1.5"/><rect x="8.5" y="16" width="7" height="6" rx="1" fill="none" stroke="#9c9caa" stroke-width="1.5"/><path d="M8 4 H16 M5 7 L11 16 M19 7 L13 16" stroke="#9c9caa" stroke-width="1.4"/></svg>
<svg style="left:2393px;top:508.79999999999995px;" width="20" height="20.0" viewBox="0 0 20 20"><path d="M3.5 8.5 A6.8 6.8 0 0 1 15.5 5.5 M16.5 11.5 A6.8 6.8 0 0 1 4.5 14.5" stroke="#9c9caa" stroke-width="1.6" fill="none"/><path d="M17 2 V7.5 H11.5 M3 18 V12.5 H8.5" stroke="#9c9caa" stroke-width="1.6" fill="none"/></svg>
<svg style="left:2431.5px;top:507.79999999999995px;" width="22.0" height="22.0" viewBox="0 0 22 22"><path d="M9 3.5 H2 V20 H18.5 V13" stroke="#9c9caa" stroke-width="1.7" fill="none"/><path d="M10 12 L20 2 M13.5 1.5 H20.5 V8.5" stroke="#9c9caa" stroke-width="1.7" fill="none"/></svg>
<svg style="left:2472px;top:508.79999999999995px;" width="20" height="20.0" viewBox="0 0 20 20"><circle cx="10" cy="10" r="8.8" fill="none" stroke="#9c9caa" stroke-width="1.6"/><circle cx="10" cy="6" r="1.2" fill="#9c9caa"/><path d="M8.3 8.8 H10.6 V14 M8.3 14 H12" stroke="#9c9caa" stroke-width="1.5" fill="none"/></svg>
<svg style="left:2518px;top:512.8px;" width="8" height="12.0" viewBox="0 0 8 12"><path d="M2 3.5 C5 3 7 5 7 7.5 C7 10 5 11.5 3.5 11.5" stroke="#5a5b6c" stroke-width="1.2" fill="none"/><path d="M0.5 3.8 L3 0.8 L3.8 5 Z" fill="#5a5b6c"/></svg>
<svg style="left:2393px;top:570px;" width="20" height="20" viewBox="0 0 20 20"><path d="M3.5 8.5 A6.8 6.8 0 0 1 15.5 5.5 M16.5 11.5 A6.8 6.8 0 0 1 4.5 14.5" stroke="#9c9caa" stroke-width="1.6" fill="none"/><path d="M17 2 V7.5 H11.5 M3 18 V12.5 H8.5" stroke="#9c9caa" stroke-width="1.6" fill="none"/></svg>
<svg style="left:2431.5px;top:569px;" width="22.0" height="22" viewBox="0 0 22 22"><path d="M9 3.5 H2 V20 H18.5 V13" stroke="#9c9caa" stroke-width="1.7" fill="none"/><path d="M10 12 L20 2 M13.5 1.5 H20.5 V8.5" stroke="#9c9caa" stroke-width="1.7" fill="none"/></svg>
<svg style="left:2472px;top:570px;" width="20" height="20" viewBox="0 0 20 20"><circle cx="10" cy="10" r="8.8" fill="none" stroke="#9c9caa" stroke-width="1.6"/><circle cx="10" cy="6" r="1.2" fill="#9c9caa"/><path d="M8.3 8.8 H10.6 V14 M8.3 14 H12" stroke="#9c9caa" stroke-width="1.5" fill="none"/></svg>
<svg style="left:2518px;top:574px;" width="8" height="12" viewBox="0 0 8 12"><path d="M2 3.5 C5 3 7 5 7 7.5 C7 10 5 11.5 3.5 11.5" stroke="#5a5b6c" stroke-width="1.2" fill="none"/><path d="M0.5 3.8 L3 0.8 L3.8 5 Z" fill="#5a5b6c"/></svg>
<div class="t" style="left:1942.80px;top:629.79px;font-size:20.71px;letter-spacing:0.247px;color:#b8b8c4;">RootBoneEntityRef</div>
<div style="left:2152.3px;top:615.4px;width:65.69999999999982px;height:64.89999999999998px;background:#5571a9;border-radius:5px 0 0 5px"></div>
<div style="left:2218px;top:615.4px;width:283.5999999999999px;height:64.89999999999998px;background:#2a2b3e;border-radius:0 5px 5px 0"></div>
<svg style="left:2175px;top:635px;" width="19" height="27" viewBox="0 0 19 27"><circle cx="9.5" cy="3.5" r="3.2" fill="#dfe4ee"/><path d="M4 9 Q4 7.5 5.5 7.5 H13.5 Q15 7.5 15 9 V16 H12.8 V26 H10.3 V18 H8.7 V26 H6.2 V16 H4 Z" fill="#dfe4ee"/></svg>
<div class="t" style="left:2238.50px;top:636.06px;font-size:22.87px;letter-spacing:-0.525px;color:#e0e0e8;font-weight:700;">Droid_SK_Hips</div>
<svg style="left:2518px;top:640.8px;" width="8" height="12.0" viewBox="0 0 8 12"><path d="M2 3.5 C5 3 7 5 7 7.5 C7 10 5 11.5 3.5 11.5" stroke="#5a5b6c" stroke-width="1.2" fill="none"/><path d="M0.5 3.8 L3 0.8 L3.8 5 Z" fill="#5a5b6c"/></svg>
<div style="left:1942px;top:677px;width:3px;height:94px;background:#6b8b3f;"></div>
<svg style="left:1961px;top:701.5px;" width="18" height="15.0" viewBox="0 0 18 15"><path d="M0.5 2 Q0.5 0.5 2 0.5 H6.5 L8.5 2.5 H16 Q17.5 2.5 17.5 4 V13.5 Q17.5 14.5 16.5 14.5 H1.5 Q0.5 14.5 0.5 13.5 Z" fill="#d8d8e0"/></svg>
<div class="t" style="left:1990.00px;top:699.00px;font-size:20.00px;letter-spacing:0.800px;color:#d4d4dc;">Transitions</div>
<div style="left:1945px;top:735px;width:615px;height:1.5px;background:#24253a;"></div>
<svg style="left:1961px;top:754.5px;" width="18" height="15.0" viewBox="0 0 18 15"><path d="M0.5 2 Q0.5 0.5 2 0.5 H6.5 L8.5 2.5 H16 Q17.5 2.5 17.5 4 V13.5 Q17.5 14.5 16.5 14.5 H1.5 Q0.5 14.5 0.5 13.5 Z" fill="#d8d8e0"/></svg>
<div class="t" style="left:1990.00px;top:752.00px;font-size:20.00px;letter-spacing:1.029px;color:#d4d4dc;">Controls</div>
<div style="left:1922px;top:771px;width:638px;height:52px;background:#2a2b3e;"></div>
<svg style="left:1943px;top:788px;" width="18" height="18" viewBox="0 0 18 18"><path d="M9 1 V17 M1 9 H17" stroke="#c8c8d0" stroke-width="1.8"/></svg>
<div class="t" style="left:1982.00px;top:785.24px;font-size:23.71px;letter-spacing:1.744px;color:#6e7086;">Add a component or attach a script</div>
<svg style="left:719px;top:1128px;" width="21" height="22" viewBox="0 0 22 22"><path d="M8 3.5 H2 V20 H18.5 V14" stroke="#a8a8b4" stroke-width="2" fill="none"/><path d="M9 13 L19.5 2.5 M12.5 2 H20 V9.5" stroke="#a8a8b4" stroke-width="2" fill="none"/></svg>
<div style="left:515px;top:1232px;width:1405px;height:1.5px;background:#2c2e42;"></div>
<svg style="left:548px;top:1179px;" width="27" height="27" viewBox="0 0 27 27"><circle cx="13.5" cy="13.5" r="12" fill="none" stroke="#b4b6c8" stroke-width="1.6"/><path d="M10 10.5 Q10.2 7 13.6 7 Q17 7.1 17 10 Q17 12 14.8 13 Q13.6 13.6 13.6 15.5" stroke="#b4b6c8" stroke-width="1.7" fill="none"/><circle cx="13.6" cy="19" r="1.2" fill="#b4b6c8"/></svg>
<svg style="left:910px;top:1180.6px;" width="15" height="23.40000000000009" viewBox="0 0 15 23.40000000000009"><path d="M2 1 L13 11.700000000000045 L2 22.40000000000009" stroke="#5e6074" stroke-width="1.6" fill="none"/></svg>
<svg style="left:841px;top:1180px;" width="15" height="25" viewBox="0 0 15 25"><path d="M13 1 L2 12.5 L13 24" stroke="#5e6074" stroke-width="1.6" fill="none"/></svg>
<svg style="left:969px;top:1184px;" width="26" height="15" viewBox="0 0 26 15"><path d="M1 14 L13 2 L25 14" stroke="#c8c8d4" stroke-width="1.8" fill="none"/></svg>
<div style="left:1016px;top:1161px;width:764px;height:63px;background:#14141f;border-radius:32px"></div>
<svg style="left:1044px;top:1179px;" width="29" height="27" viewBox="0 0 29 27"><circle cx="17" cy="10.5" r="9" fill="none" stroke="#c0c2d4" stroke-width="1.8"/><path d="M10.5 17 L2 25.5" stroke="#c0c2d4" stroke-width="1.8"/></svg>
<div class="t" style="left:1096.00px;top:1180.06px;font-size:26.29px;letter-spacing:0.125px;color:#7c7fa0;">Search...</div>
<svg style="left:1854px;top:1181px;" width="29" height="22" viewBox="0 0 29 22"><rect x="0.5" y="0.5" width="28" height="9.5" fill="#c6c8ee"/><rect x="0.5" y="12" width="28" height="9.5" fill="#c6c8ee"/><path d="M19 5.2 H25 M15 16.8 H25" stroke="#1d1e2f" stroke-width="1.6"/></svg>
<div style="left:540.8px;top:1246px;width:251.80000000000007px;height:52.59999999999991px;background:#d6d9e6;border-radius:4px"></div>
<svg style="left:561px;top:1261px;" width="24" height="24" viewBox="0 0 24 24"><path d="M12 1 V23 M1 12 H23" stroke="#14141f" stroke-width="2.6"/></svg>
<div class="t" style="left:605.00px;top:1258.48px;font-size:26.49px;letter-spacing:-0.425px;color:#14141f;">New</div>
<div class="t" style="left:668.00px;top:1258.29px;font-size:26.71px;letter-spacing:0.000px;color:#8a8c9a;">/</div>
<div class="t" style="left:684.00px;top:1258.29px;font-size:26.71px;letter-spacing:0.430px;color:#14141f;">Upload</div>
<svg style="left:832px;top:1259px;" width="27" height="24" viewBox="0 0 27 24"><path d="M2 11 L13.5 1.5 L25 11 M5 9 V22.5 H22 V9" stroke="#a0a4c4" stroke-width="1.7" fill="none" stroke-linejoin="round"/></svg>
<div class="t" style="left:879.40px;top:1260.03px;font-size:24.68px;letter-spacing:-1.217px;color:#9ea2c4;">Root</div>
<div class="t" style="left:948.00px;top:1258.29px;font-size:26.71px;letter-spacing:0.000px;color:#4c4e62;">/</div>
<div class="t" style="left:975.00px;top:1259.49px;font-size:25.31px;letter-spacing:-0.761px;color:#e8c84a;">X3DV Droid</div>
<div style="left:515px;top:1311px;width:1405px;height:1.5px;background:#2c2e42;"></div>
<div style="left:975.5px;top:1312.5px;width:1.5px;height:247.5px;background:#25273a;"></div>
<svg style="left:538.5px;top:1347px;" width="13.5" height="11" viewBox="0 0 13.5 11"><path d="M1 2 L6.75 9 L12.5 2" stroke="#7a7e9c" stroke-width="1.6" fill="none"/></svg>
<svg style="left:568px;top:1341px;" width="22" height="22" viewBox="0 0 22 22"><path d="M1.5 10 L11 1.5 L20.5 10 M4 8 V20.5 H18 V8" stroke="#a8acd0" stroke-width="1.6" fill="none" stroke-linejoin="round"/></svg>
<div class="t" style="left:609.80px;top:1338.54px;font-size:26.43px;letter-spacing:0.067px;color:#b8bce0;">Root</div>
<div class="t" style="left:585.50px;top:1391.54px;font-size:26.43px;letter-spacing:0.359px;color:#c4c8ec;">Level Design</div>
<div class="t" style="left:585.50px;top:1444.04px;font-size:26.43px;letter-spacing:0.590px;color:#c4c8ec;">Public</div>
<div style="left:528.5px;top:1484px;width:412.5px;height:52px;background:#1f1d10;border-radius:6px"></div>
<svg style="left:555px;top:1504px;" width="14" height="11" viewBox="0 0 14 11"><path d="M1 2 L7.0 9 L13 2" stroke="#8a8050" stroke-width="1.6" fill="none"/></svg>
<div class="t" style="left:585.50px;top:1497.54px;font-size:26.43px;letter-spacing:0.167px;color:#ccb850;">X3DV Droid</div>
<div style="left:942px;top:1326.5px;width:22px;height:221.0px;background:#26272d;"></div>
<svg style="left:945.0px;top:1331.5px;" width="16.0" height="12.0" viewBox="0 0 16 12"><path d="M1 11 L8 2 L15 11 Z" fill="#9a9aa2"/></svg>
<div style="left:947.0px;top:1353px;width:12.0px;height:100.5px;background:#8e8e96;border-radius:6px"></div>
<svg style="left:945.0px;top:1530.5px;" width="16.0" height="12.0" viewBox="0 0 16 12"><path d="M1 1 L8 10 L15 1 Z" fill="#77777f"/></svg>
<div style="left:1898px;top:1312.5px;width:22px;height:247.5px;background:#26272d;"></div>
<svg style="left:1901.0px;top:1317.5px;" width="16.0" height="12.0" viewBox="0 0 16 12"><path d="M1 11 L8 2 L15 11 Z" fill="#9a9aa2"/></svg>
<div style="left:1903.0px;top:1339.4px;width:12.0px;height:39.59999999999991px;background:#8e8e96;border-radius:6px"></div>
<svg style="left:1901.0px;top:1543px;" width="16.0" height="12" viewBox="0 0 16 12"><path d="M1 1 L8 10 L15 1 Z" fill="#77777f"/></svg>
<div class="t" style="left:1030.00px;top:1342.76px;font-size:24.29px;letter-spacing:0.000px;color:#e8e8f0;font-weight:700;">2</div>
<div class="t" style="left:1057.00px;top:1344.22px;font-size:22.56px;letter-spacing:-1.125px;color:#e8e8f0;">FOLDERS</div>
<div style="left:1030px;top:1385.4px;width:398.5px;height:90.59999999999991px;background:transparent;border:1.5px solid #2e3044;border-radius:6px;box-sizing:border-box"></div>
<svg style="left:1053px;top:1406px;" width="25" height="22" viewBox="0 0 25 22"><path d="M1 2 H9 L11.5 4.5 H23.5 V20.5 H1 Z M1 6.5 H23.5" stroke="#d8d8e4" stroke-width="1.7" fill="none"/></svg>
<div class="t" style="left:1100.00px;top:1402.89px;font-size:24.48px;letter-spacing:-0.488px;color:#d8d8e4;">Materials</div>
<div style="left:1442.4px;top:1385.4px;width:399.1999999999998px;height:90.59999999999991px;background:transparent;border:1.5px solid #2e3044;border-radius:6px;box-sizing:border-box"></div>
<svg style="left:1465.4px;top:1406px;" width="25.0" height="22" viewBox="0 0 25 22"><path d="M1 2 H9 L11.5 4.5 H23.5 V20.5 H1 Z M1 6.5 H23.5" stroke="#d8d8e4" stroke-width="1.7" fill="none"/></svg>
<div class="t" style="left:1512.40px;top:1402.90px;font-size:24.47px;letter-spacing:-0.506px;color:#d8d8e4;">Animations</div>
<div class="t" style="left:1030.00px;top:1513.86px;font-size:24.29px;letter-spacing:0.000px;color:#7484b4;font-weight:700;">1</div>
<div class="t" style="left:1055.00px;top:1515.38px;font-size:22.50px;letter-spacing:-1.300px;color:#7484b4;">SCENE</div>
<div style="left:1030px;top:1555.5px;width:397px;height:2.5px;background:#3e4054;border-radius:2px 2px 0 0"></div>
</body></html>
